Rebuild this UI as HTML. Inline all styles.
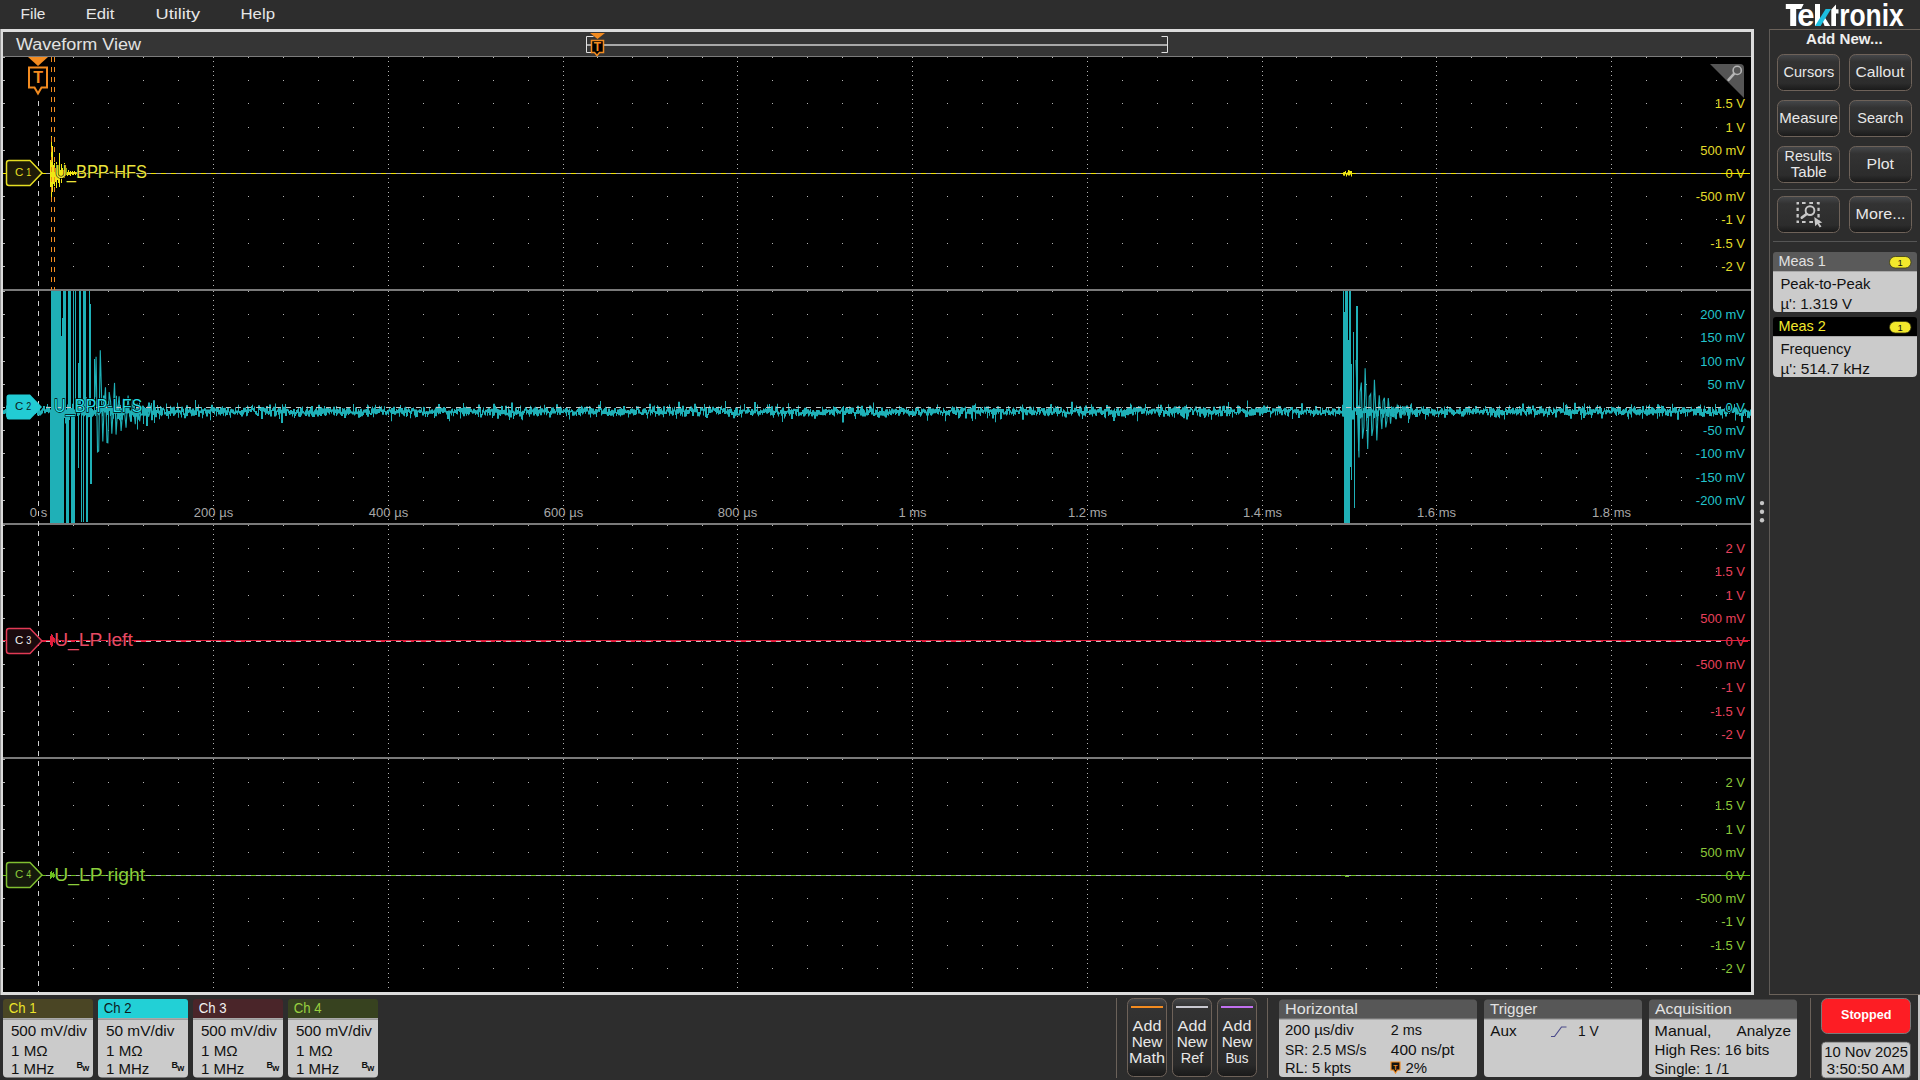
<!DOCTYPE html>
<html><head><meta charset="utf-8"><title>Tektronix Waveform View</title>
<style>html,body{margin:0;padding:0;background:#2d2d2d;overflow:hidden;width:1920px;height:1080px}
svg{display:block;font-family:"Liberation Sans",sans-serif}</style></head>
<body><svg width="1920" height="1080" viewBox="0 0 1920 1080" shape-rendering="auto"><rect x="0" y="0" width="1920" height="1080" fill="#2d2d2d"/><text x="20.5" y="19.3" font-size="15" fill="#e6e6e6" textLength="25.0" lengthAdjust="spacingAndGlyphs">File</text><text x="85.7" y="19.3" font-size="15" fill="#e6e6e6" textLength="28.8" lengthAdjust="spacingAndGlyphs">Edit</text><text x="155.5" y="19.3" font-size="15" fill="#e6e6e6" textLength="44.5" lengthAdjust="spacingAndGlyphs">Utility</text><text x="240.5" y="19.3" font-size="15" fill="#e6e6e6" textLength="34.5" lengthAdjust="spacingAndGlyphs">Help</text><rect x="0" y="29" width="1754" height="966" fill="#dcdcdc"/><rect x="0" y="29" width="1" height="966" fill="#9a9a9a"/><rect x="3" y="32" width="1748" height="25" fill="#353535"/><rect x="3" y="56" width="1748" height="1" fill="#7c7c7c"/><rect x="3" y="57" width="1748" height="935" fill="#000000"/><text x="16" y="50" font-size="16" fill="#e2e2e2" textLength="125" lengthAdjust="spacingAndGlyphs">Waveform View</text><path d="M593.5 36.5h-7v16h7M1161.5 36.5h6v16h-6" fill="none" stroke="#e0e0e0" stroke-width="1"/><rect x="587" y="44" width="580" height="2" fill="#a9a9a9"/><path d="M590 33h15l-7.5 6z" fill="#f28b20"/><path d="M591.5 40.5h12v12h-4l-2.5 3l-2.5-3h-3z" fill="#000" stroke="#f28b20" stroke-width="1.5"/><text x="597.5" y="50.5" font-size="12" fill="#f28b20" text-anchor="middle" font-weight="bold">T</text><path d="M3 57h1v1h-1zM73 57h1v1h-1zM108 57h1v1h-1zM143 57h1v1h-1zM178 57h1v1h-1zM248 57h1v1h-1zM283 57h1v1h-1zM318 57h1v1h-1zM353 57h1v1h-1zM423 57h1v1h-1zM458 57h1v1h-1zM493 57h1v1h-1zM528 57h1v1h-1zM597 57h1v1h-1zM632 57h1v1h-1zM667 57h1v1h-1zM702 57h1v1h-1zM772 57h1v1h-1zM807 57h1v1h-1zM842 57h1v1h-1zM877 57h1v1h-1zM947 57h1v1h-1zM982 57h1v1h-1zM1017 57h1v1h-1zM1052 57h1v1h-1zM1122 57h1v1h-1zM1157 57h1v1h-1zM1192 57h1v1h-1zM1227 57h1v1h-1zM1296 57h1v1h-1zM1331 57h1v1h-1zM1366 57h1v1h-1zM1401 57h1v1h-1zM1471 57h1v1h-1zM1506 57h1v1h-1zM1541 57h1v1h-1zM1576 57h1v1h-1zM1646 57h1v1h-1zM1681 57h1v1h-1zM1716 57h1v1h-1zM3 57h2v1h-2zM3 80h1v1h-1zM73 80h1v1h-1zM108 80h1v1h-1zM143 80h1v1h-1zM178 80h1v1h-1zM248 80h1v1h-1zM283 80h1v1h-1zM318 80h1v1h-1zM353 80h1v1h-1zM423 80h1v1h-1zM458 80h1v1h-1zM493 80h1v1h-1zM528 80h1v1h-1zM597 80h1v1h-1zM632 80h1v1h-1zM667 80h1v1h-1zM702 80h1v1h-1zM772 80h1v1h-1zM807 80h1v1h-1zM842 80h1v1h-1zM877 80h1v1h-1zM947 80h1v1h-1zM982 80h1v1h-1zM1017 80h1v1h-1zM1052 80h1v1h-1zM1122 80h1v1h-1zM1157 80h1v1h-1zM1192 80h1v1h-1zM1227 80h1v1h-1zM1296 80h1v1h-1zM1331 80h1v1h-1zM1366 80h1v1h-1zM1401 80h1v1h-1zM1471 80h1v1h-1zM1506 80h1v1h-1zM1541 80h1v1h-1zM1576 80h1v1h-1zM1646 80h1v1h-1zM1681 80h1v1h-1zM1716 80h1v1h-1zM3 80h2v1h-2zM3 103h1v1h-1zM73 103h1v1h-1zM108 103h1v1h-1zM143 103h1v1h-1zM178 103h1v1h-1zM248 103h1v1h-1zM283 103h1v1h-1zM318 103h1v1h-1zM353 103h1v1h-1zM423 103h1v1h-1zM458 103h1v1h-1zM493 103h1v1h-1zM528 103h1v1h-1zM597 103h1v1h-1zM632 103h1v1h-1zM667 103h1v1h-1zM702 103h1v1h-1zM772 103h1v1h-1zM807 103h1v1h-1zM842 103h1v1h-1zM877 103h1v1h-1zM947 103h1v1h-1zM982 103h1v1h-1zM1017 103h1v1h-1zM1052 103h1v1h-1zM1122 103h1v1h-1zM1157 103h1v1h-1zM1192 103h1v1h-1zM1227 103h1v1h-1zM1296 103h1v1h-1zM1331 103h1v1h-1zM1366 103h1v1h-1zM1401 103h1v1h-1zM1471 103h1v1h-1zM1506 103h1v1h-1zM1541 103h1v1h-1zM1576 103h1v1h-1zM1646 103h1v1h-1zM1681 103h1v1h-1zM1716 103h1v1h-1zM3 103h2v1h-2zM3 127h1v1h-1zM73 127h1v1h-1zM108 127h1v1h-1zM143 127h1v1h-1zM178 127h1v1h-1zM248 127h1v1h-1zM283 127h1v1h-1zM318 127h1v1h-1zM353 127h1v1h-1zM423 127h1v1h-1zM458 127h1v1h-1zM493 127h1v1h-1zM528 127h1v1h-1zM597 127h1v1h-1zM632 127h1v1h-1zM667 127h1v1h-1zM702 127h1v1h-1zM772 127h1v1h-1zM807 127h1v1h-1zM842 127h1v1h-1zM877 127h1v1h-1zM947 127h1v1h-1zM982 127h1v1h-1zM1017 127h1v1h-1zM1052 127h1v1h-1zM1122 127h1v1h-1zM1157 127h1v1h-1zM1192 127h1v1h-1zM1227 127h1v1h-1zM1296 127h1v1h-1zM1331 127h1v1h-1zM1366 127h1v1h-1zM1401 127h1v1h-1zM1471 127h1v1h-1zM1506 127h1v1h-1zM1541 127h1v1h-1zM1576 127h1v1h-1zM1646 127h1v1h-1zM1681 127h1v1h-1zM1716 127h1v1h-1zM3 127h2v1h-2zM3 150h1v1h-1zM73 150h1v1h-1zM108 150h1v1h-1zM143 150h1v1h-1zM178 150h1v1h-1zM248 150h1v1h-1zM283 150h1v1h-1zM318 150h1v1h-1zM353 150h1v1h-1zM423 150h1v1h-1zM458 150h1v1h-1zM493 150h1v1h-1zM528 150h1v1h-1zM597 150h1v1h-1zM632 150h1v1h-1zM667 150h1v1h-1zM702 150h1v1h-1zM772 150h1v1h-1zM807 150h1v1h-1zM842 150h1v1h-1zM877 150h1v1h-1zM947 150h1v1h-1zM982 150h1v1h-1zM1017 150h1v1h-1zM1052 150h1v1h-1zM1122 150h1v1h-1zM1157 150h1v1h-1zM1192 150h1v1h-1zM1227 150h1v1h-1zM1296 150h1v1h-1zM1331 150h1v1h-1zM1366 150h1v1h-1zM1401 150h1v1h-1zM1471 150h1v1h-1zM1506 150h1v1h-1zM1541 150h1v1h-1zM1576 150h1v1h-1zM1646 150h1v1h-1zM1681 150h1v1h-1zM1716 150h1v1h-1zM3 150h2v1h-2zM3 173h1v1h-1zM73 173h1v1h-1zM108 173h1v1h-1zM143 173h1v1h-1zM178 173h1v1h-1zM248 173h1v1h-1zM283 173h1v1h-1zM318 173h1v1h-1zM353 173h1v1h-1zM423 173h1v1h-1zM458 173h1v1h-1zM493 173h1v1h-1zM528 173h1v1h-1zM597 173h1v1h-1zM632 173h1v1h-1zM667 173h1v1h-1zM702 173h1v1h-1zM772 173h1v1h-1zM807 173h1v1h-1zM842 173h1v1h-1zM877 173h1v1h-1zM947 173h1v1h-1zM982 173h1v1h-1zM1017 173h1v1h-1zM1052 173h1v1h-1zM1122 173h1v1h-1zM1157 173h1v1h-1zM1192 173h1v1h-1zM1227 173h1v1h-1zM1296 173h1v1h-1zM1331 173h1v1h-1zM1366 173h1v1h-1zM1401 173h1v1h-1zM1471 173h1v1h-1zM1506 173h1v1h-1zM1541 173h1v1h-1zM1576 173h1v1h-1zM1646 173h1v1h-1zM1681 173h1v1h-1zM1716 173h1v1h-1zM3 173h2v1h-2zM3 196h1v1h-1zM73 196h1v1h-1zM108 196h1v1h-1zM143 196h1v1h-1zM178 196h1v1h-1zM248 196h1v1h-1zM283 196h1v1h-1zM318 196h1v1h-1zM353 196h1v1h-1zM423 196h1v1h-1zM458 196h1v1h-1zM493 196h1v1h-1zM528 196h1v1h-1zM597 196h1v1h-1zM632 196h1v1h-1zM667 196h1v1h-1zM702 196h1v1h-1zM772 196h1v1h-1zM807 196h1v1h-1zM842 196h1v1h-1zM877 196h1v1h-1zM947 196h1v1h-1zM982 196h1v1h-1zM1017 196h1v1h-1zM1052 196h1v1h-1zM1122 196h1v1h-1zM1157 196h1v1h-1zM1192 196h1v1h-1zM1227 196h1v1h-1zM1296 196h1v1h-1zM1331 196h1v1h-1zM1366 196h1v1h-1zM1401 196h1v1h-1zM1471 196h1v1h-1zM1506 196h1v1h-1zM1541 196h1v1h-1zM1576 196h1v1h-1zM1646 196h1v1h-1zM1681 196h1v1h-1zM1716 196h1v1h-1zM3 196h2v1h-2zM3 219h1v1h-1zM73 219h1v1h-1zM108 219h1v1h-1zM143 219h1v1h-1zM178 219h1v1h-1zM248 219h1v1h-1zM283 219h1v1h-1zM318 219h1v1h-1zM353 219h1v1h-1zM423 219h1v1h-1zM458 219h1v1h-1zM493 219h1v1h-1zM528 219h1v1h-1zM597 219h1v1h-1zM632 219h1v1h-1zM667 219h1v1h-1zM702 219h1v1h-1zM772 219h1v1h-1zM807 219h1v1h-1zM842 219h1v1h-1zM877 219h1v1h-1zM947 219h1v1h-1zM982 219h1v1h-1zM1017 219h1v1h-1zM1052 219h1v1h-1zM1122 219h1v1h-1zM1157 219h1v1h-1zM1192 219h1v1h-1zM1227 219h1v1h-1zM1296 219h1v1h-1zM1331 219h1v1h-1zM1366 219h1v1h-1zM1401 219h1v1h-1zM1471 219h1v1h-1zM1506 219h1v1h-1zM1541 219h1v1h-1zM1576 219h1v1h-1zM1646 219h1v1h-1zM1681 219h1v1h-1zM1716 219h1v1h-1zM3 219h2v1h-2zM3 243h1v1h-1zM73 243h1v1h-1zM108 243h1v1h-1zM143 243h1v1h-1zM178 243h1v1h-1zM248 243h1v1h-1zM283 243h1v1h-1zM318 243h1v1h-1zM353 243h1v1h-1zM423 243h1v1h-1zM458 243h1v1h-1zM493 243h1v1h-1zM528 243h1v1h-1zM597 243h1v1h-1zM632 243h1v1h-1zM667 243h1v1h-1zM702 243h1v1h-1zM772 243h1v1h-1zM807 243h1v1h-1zM842 243h1v1h-1zM877 243h1v1h-1zM947 243h1v1h-1zM982 243h1v1h-1zM1017 243h1v1h-1zM1052 243h1v1h-1zM1122 243h1v1h-1zM1157 243h1v1h-1zM1192 243h1v1h-1zM1227 243h1v1h-1zM1296 243h1v1h-1zM1331 243h1v1h-1zM1366 243h1v1h-1zM1401 243h1v1h-1zM1471 243h1v1h-1zM1506 243h1v1h-1zM1541 243h1v1h-1zM1576 243h1v1h-1zM1646 243h1v1h-1zM1681 243h1v1h-1zM1716 243h1v1h-1zM3 243h2v1h-2zM3 266h1v1h-1zM73 266h1v1h-1zM108 266h1v1h-1zM143 266h1v1h-1zM178 266h1v1h-1zM248 266h1v1h-1zM283 266h1v1h-1zM318 266h1v1h-1zM353 266h1v1h-1zM423 266h1v1h-1zM458 266h1v1h-1zM493 266h1v1h-1zM528 266h1v1h-1zM597 266h1v1h-1zM632 266h1v1h-1zM667 266h1v1h-1zM702 266h1v1h-1zM772 266h1v1h-1zM807 266h1v1h-1zM842 266h1v1h-1zM877 266h1v1h-1zM947 266h1v1h-1zM982 266h1v1h-1zM1017 266h1v1h-1zM1052 266h1v1h-1zM1122 266h1v1h-1zM1157 266h1v1h-1zM1192 266h1v1h-1zM1227 266h1v1h-1zM1296 266h1v1h-1zM1331 266h1v1h-1zM1366 266h1v1h-1zM1401 266h1v1h-1zM1471 266h1v1h-1zM1506 266h1v1h-1zM1541 266h1v1h-1zM1576 266h1v1h-1zM1646 266h1v1h-1zM1681 266h1v1h-1zM1716 266h1v1h-1zM3 266h2v1h-2zM213 57h1v1h-1zM213 61h1v1h-1zM213 66h1v1h-1zM213 71h1v1h-1zM213 75h1v1h-1zM213 80h1v1h-1zM213 85h1v1h-1zM213 89h1v1h-1zM213 94h1v1h-1zM213 99h1v1h-1zM213 103h1v1h-1zM213 108h1v1h-1zM213 112h1v1h-1zM213 117h1v1h-1zM213 122h1v1h-1zM213 126h1v1h-1zM213 131h1v1h-1zM213 136h1v1h-1zM213 140h1v1h-1zM213 145h1v1h-1zM213 150h1v1h-1zM213 154h1v1h-1zM213 159h1v1h-1zM213 164h1v1h-1zM213 168h1v1h-1zM213 173h1v1h-1zM213 178h1v1h-1zM213 182h1v1h-1zM213 187h1v1h-1zM213 192h1v1h-1zM213 196h1v1h-1zM213 201h1v1h-1zM213 205h1v1h-1zM213 210h1v1h-1zM213 215h1v1h-1zM213 219h1v1h-1zM213 224h1v1h-1zM213 229h1v1h-1zM213 233h1v1h-1zM213 238h1v1h-1zM213 243h1v1h-1zM213 247h1v1h-1zM213 252h1v1h-1zM213 257h1v1h-1zM213 261h1v1h-1zM213 266h1v1h-1zM213 271h1v1h-1zM213 275h1v1h-1zM213 280h1v1h-1zM213 285h1v1h-1zM388 57h1v1h-1zM388 61h1v1h-1zM388 66h1v1h-1zM388 71h1v1h-1zM388 75h1v1h-1zM388 80h1v1h-1zM388 85h1v1h-1zM388 89h1v1h-1zM388 94h1v1h-1zM388 99h1v1h-1zM388 103h1v1h-1zM388 108h1v1h-1zM388 112h1v1h-1zM388 117h1v1h-1zM388 122h1v1h-1zM388 126h1v1h-1zM388 131h1v1h-1zM388 136h1v1h-1zM388 140h1v1h-1zM388 145h1v1h-1zM388 150h1v1h-1zM388 154h1v1h-1zM388 159h1v1h-1zM388 164h1v1h-1zM388 168h1v1h-1zM388 173h1v1h-1zM388 178h1v1h-1zM388 182h1v1h-1zM388 187h1v1h-1zM388 192h1v1h-1zM388 196h1v1h-1zM388 201h1v1h-1zM388 205h1v1h-1zM388 210h1v1h-1zM388 215h1v1h-1zM388 219h1v1h-1zM388 224h1v1h-1zM388 229h1v1h-1zM388 233h1v1h-1zM388 238h1v1h-1zM388 243h1v1h-1zM388 247h1v1h-1zM388 252h1v1h-1zM388 257h1v1h-1zM388 261h1v1h-1zM388 266h1v1h-1zM388 271h1v1h-1zM388 275h1v1h-1zM388 280h1v1h-1zM388 285h1v1h-1zM563 57h1v1h-1zM563 61h1v1h-1zM563 66h1v1h-1zM563 71h1v1h-1zM563 75h1v1h-1zM563 80h1v1h-1zM563 85h1v1h-1zM563 89h1v1h-1zM563 94h1v1h-1zM563 99h1v1h-1zM563 103h1v1h-1zM563 108h1v1h-1zM563 112h1v1h-1zM563 117h1v1h-1zM563 122h1v1h-1zM563 126h1v1h-1zM563 131h1v1h-1zM563 136h1v1h-1zM563 140h1v1h-1zM563 145h1v1h-1zM563 150h1v1h-1zM563 154h1v1h-1zM563 159h1v1h-1zM563 164h1v1h-1zM563 168h1v1h-1zM563 173h1v1h-1zM563 178h1v1h-1zM563 182h1v1h-1zM563 187h1v1h-1zM563 192h1v1h-1zM563 196h1v1h-1zM563 201h1v1h-1zM563 205h1v1h-1zM563 210h1v1h-1zM563 215h1v1h-1zM563 219h1v1h-1zM563 224h1v1h-1zM563 229h1v1h-1zM563 233h1v1h-1zM563 238h1v1h-1zM563 243h1v1h-1zM563 247h1v1h-1zM563 252h1v1h-1zM563 257h1v1h-1zM563 261h1v1h-1zM563 266h1v1h-1zM563 271h1v1h-1zM563 275h1v1h-1zM563 280h1v1h-1zM563 285h1v1h-1zM737 57h1v1h-1zM737 61h1v1h-1zM737 66h1v1h-1zM737 71h1v1h-1zM737 75h1v1h-1zM737 80h1v1h-1zM737 85h1v1h-1zM737 89h1v1h-1zM737 94h1v1h-1zM737 99h1v1h-1zM737 103h1v1h-1zM737 108h1v1h-1zM737 112h1v1h-1zM737 117h1v1h-1zM737 122h1v1h-1zM737 126h1v1h-1zM737 131h1v1h-1zM737 136h1v1h-1zM737 140h1v1h-1zM737 145h1v1h-1zM737 150h1v1h-1zM737 154h1v1h-1zM737 159h1v1h-1zM737 164h1v1h-1zM737 168h1v1h-1zM737 173h1v1h-1zM737 178h1v1h-1zM737 182h1v1h-1zM737 187h1v1h-1zM737 192h1v1h-1zM737 196h1v1h-1zM737 201h1v1h-1zM737 205h1v1h-1zM737 210h1v1h-1zM737 215h1v1h-1zM737 219h1v1h-1zM737 224h1v1h-1zM737 229h1v1h-1zM737 233h1v1h-1zM737 238h1v1h-1zM737 243h1v1h-1zM737 247h1v1h-1zM737 252h1v1h-1zM737 257h1v1h-1zM737 261h1v1h-1zM737 266h1v1h-1zM737 271h1v1h-1zM737 275h1v1h-1zM737 280h1v1h-1zM737 285h1v1h-1zM912 57h1v1h-1zM912 61h1v1h-1zM912 66h1v1h-1zM912 71h1v1h-1zM912 75h1v1h-1zM912 80h1v1h-1zM912 85h1v1h-1zM912 89h1v1h-1zM912 94h1v1h-1zM912 99h1v1h-1zM912 103h1v1h-1zM912 108h1v1h-1zM912 112h1v1h-1zM912 117h1v1h-1zM912 122h1v1h-1zM912 126h1v1h-1zM912 131h1v1h-1zM912 136h1v1h-1zM912 140h1v1h-1zM912 145h1v1h-1zM912 150h1v1h-1zM912 154h1v1h-1zM912 159h1v1h-1zM912 164h1v1h-1zM912 168h1v1h-1zM912 173h1v1h-1zM912 178h1v1h-1zM912 182h1v1h-1zM912 187h1v1h-1zM912 192h1v1h-1zM912 196h1v1h-1zM912 201h1v1h-1zM912 205h1v1h-1zM912 210h1v1h-1zM912 215h1v1h-1zM912 219h1v1h-1zM912 224h1v1h-1zM912 229h1v1h-1zM912 233h1v1h-1zM912 238h1v1h-1zM912 243h1v1h-1zM912 247h1v1h-1zM912 252h1v1h-1zM912 257h1v1h-1zM912 261h1v1h-1zM912 266h1v1h-1zM912 271h1v1h-1zM912 275h1v1h-1zM912 280h1v1h-1zM912 285h1v1h-1zM1087 57h1v1h-1zM1087 61h1v1h-1zM1087 66h1v1h-1zM1087 71h1v1h-1zM1087 75h1v1h-1zM1087 80h1v1h-1zM1087 85h1v1h-1zM1087 89h1v1h-1zM1087 94h1v1h-1zM1087 99h1v1h-1zM1087 103h1v1h-1zM1087 108h1v1h-1zM1087 112h1v1h-1zM1087 117h1v1h-1zM1087 122h1v1h-1zM1087 126h1v1h-1zM1087 131h1v1h-1zM1087 136h1v1h-1zM1087 140h1v1h-1zM1087 145h1v1h-1zM1087 150h1v1h-1zM1087 154h1v1h-1zM1087 159h1v1h-1zM1087 164h1v1h-1zM1087 168h1v1h-1zM1087 173h1v1h-1zM1087 178h1v1h-1zM1087 182h1v1h-1zM1087 187h1v1h-1zM1087 192h1v1h-1zM1087 196h1v1h-1zM1087 201h1v1h-1zM1087 205h1v1h-1zM1087 210h1v1h-1zM1087 215h1v1h-1zM1087 219h1v1h-1zM1087 224h1v1h-1zM1087 229h1v1h-1zM1087 233h1v1h-1zM1087 238h1v1h-1zM1087 243h1v1h-1zM1087 247h1v1h-1zM1087 252h1v1h-1zM1087 257h1v1h-1zM1087 261h1v1h-1zM1087 266h1v1h-1zM1087 271h1v1h-1zM1087 275h1v1h-1zM1087 280h1v1h-1zM1087 285h1v1h-1zM1262 57h1v1h-1zM1262 61h1v1h-1zM1262 66h1v1h-1zM1262 71h1v1h-1zM1262 75h1v1h-1zM1262 80h1v1h-1zM1262 85h1v1h-1zM1262 89h1v1h-1zM1262 94h1v1h-1zM1262 99h1v1h-1zM1262 103h1v1h-1zM1262 108h1v1h-1zM1262 112h1v1h-1zM1262 117h1v1h-1zM1262 122h1v1h-1zM1262 126h1v1h-1zM1262 131h1v1h-1zM1262 136h1v1h-1zM1262 140h1v1h-1zM1262 145h1v1h-1zM1262 150h1v1h-1zM1262 154h1v1h-1zM1262 159h1v1h-1zM1262 164h1v1h-1zM1262 168h1v1h-1zM1262 173h1v1h-1zM1262 178h1v1h-1zM1262 182h1v1h-1zM1262 187h1v1h-1zM1262 192h1v1h-1zM1262 196h1v1h-1zM1262 201h1v1h-1zM1262 205h1v1h-1zM1262 210h1v1h-1zM1262 215h1v1h-1zM1262 219h1v1h-1zM1262 224h1v1h-1zM1262 229h1v1h-1zM1262 233h1v1h-1zM1262 238h1v1h-1zM1262 243h1v1h-1zM1262 247h1v1h-1zM1262 252h1v1h-1zM1262 257h1v1h-1zM1262 261h1v1h-1zM1262 266h1v1h-1zM1262 271h1v1h-1zM1262 275h1v1h-1zM1262 280h1v1h-1zM1262 285h1v1h-1zM1436 57h1v1h-1zM1436 61h1v1h-1zM1436 66h1v1h-1zM1436 71h1v1h-1zM1436 75h1v1h-1zM1436 80h1v1h-1zM1436 85h1v1h-1zM1436 89h1v1h-1zM1436 94h1v1h-1zM1436 99h1v1h-1zM1436 103h1v1h-1zM1436 108h1v1h-1zM1436 112h1v1h-1zM1436 117h1v1h-1zM1436 122h1v1h-1zM1436 126h1v1h-1zM1436 131h1v1h-1zM1436 136h1v1h-1zM1436 140h1v1h-1zM1436 145h1v1h-1zM1436 150h1v1h-1zM1436 154h1v1h-1zM1436 159h1v1h-1zM1436 164h1v1h-1zM1436 168h1v1h-1zM1436 173h1v1h-1zM1436 178h1v1h-1zM1436 182h1v1h-1zM1436 187h1v1h-1zM1436 192h1v1h-1zM1436 196h1v1h-1zM1436 201h1v1h-1zM1436 205h1v1h-1zM1436 210h1v1h-1zM1436 215h1v1h-1zM1436 219h1v1h-1zM1436 224h1v1h-1zM1436 229h1v1h-1zM1436 233h1v1h-1zM1436 238h1v1h-1zM1436 243h1v1h-1zM1436 247h1v1h-1zM1436 252h1v1h-1zM1436 257h1v1h-1zM1436 261h1v1h-1zM1436 266h1v1h-1zM1436 271h1v1h-1zM1436 275h1v1h-1zM1436 280h1v1h-1zM1436 285h1v1h-1zM1611 57h1v1h-1zM1611 61h1v1h-1zM1611 66h1v1h-1zM1611 71h1v1h-1zM1611 75h1v1h-1zM1611 80h1v1h-1zM1611 85h1v1h-1zM1611 89h1v1h-1zM1611 94h1v1h-1zM1611 99h1v1h-1zM1611 103h1v1h-1zM1611 108h1v1h-1zM1611 112h1v1h-1zM1611 117h1v1h-1zM1611 122h1v1h-1zM1611 126h1v1h-1zM1611 131h1v1h-1zM1611 136h1v1h-1zM1611 140h1v1h-1zM1611 145h1v1h-1zM1611 150h1v1h-1zM1611 154h1v1h-1zM1611 159h1v1h-1zM1611 164h1v1h-1zM1611 168h1v1h-1zM1611 173h1v1h-1zM1611 178h1v1h-1zM1611 182h1v1h-1zM1611 187h1v1h-1zM1611 192h1v1h-1zM1611 196h1v1h-1zM1611 201h1v1h-1zM1611 205h1v1h-1zM1611 210h1v1h-1zM1611 215h1v1h-1zM1611 219h1v1h-1zM1611 224h1v1h-1zM1611 229h1v1h-1zM1611 233h1v1h-1zM1611 238h1v1h-1zM1611 243h1v1h-1zM1611 247h1v1h-1zM1611 252h1v1h-1zM1611 257h1v1h-1zM1611 261h1v1h-1zM1611 266h1v1h-1zM1611 271h1v1h-1zM1611 275h1v1h-1zM1611 280h1v1h-1zM1611 285h1v1h-1zM3 291h1v1h-1zM73 291h1v1h-1zM108 291h1v1h-1zM143 291h1v1h-1zM178 291h1v1h-1zM248 291h1v1h-1zM283 291h1v1h-1zM318 291h1v1h-1zM353 291h1v1h-1zM423 291h1v1h-1zM458 291h1v1h-1zM493 291h1v1h-1zM528 291h1v1h-1zM597 291h1v1h-1zM632 291h1v1h-1zM667 291h1v1h-1zM702 291h1v1h-1zM772 291h1v1h-1zM807 291h1v1h-1zM842 291h1v1h-1zM877 291h1v1h-1zM947 291h1v1h-1zM982 291h1v1h-1zM1017 291h1v1h-1zM1052 291h1v1h-1zM1122 291h1v1h-1zM1157 291h1v1h-1zM1192 291h1v1h-1zM1227 291h1v1h-1zM1296 291h1v1h-1zM1331 291h1v1h-1zM1366 291h1v1h-1zM1401 291h1v1h-1zM1471 291h1v1h-1zM1506 291h1v1h-1zM1541 291h1v1h-1zM1576 291h1v1h-1zM1646 291h1v1h-1zM1681 291h1v1h-1zM1716 291h1v1h-1zM3 291h2v1h-2zM3 314h1v1h-1zM73 314h1v1h-1zM108 314h1v1h-1zM143 314h1v1h-1zM178 314h1v1h-1zM248 314h1v1h-1zM283 314h1v1h-1zM318 314h1v1h-1zM353 314h1v1h-1zM423 314h1v1h-1zM458 314h1v1h-1zM493 314h1v1h-1zM528 314h1v1h-1zM597 314h1v1h-1zM632 314h1v1h-1zM667 314h1v1h-1zM702 314h1v1h-1zM772 314h1v1h-1zM807 314h1v1h-1zM842 314h1v1h-1zM877 314h1v1h-1zM947 314h1v1h-1zM982 314h1v1h-1zM1017 314h1v1h-1zM1052 314h1v1h-1zM1122 314h1v1h-1zM1157 314h1v1h-1zM1192 314h1v1h-1zM1227 314h1v1h-1zM1296 314h1v1h-1zM1331 314h1v1h-1zM1366 314h1v1h-1zM1401 314h1v1h-1zM1471 314h1v1h-1zM1506 314h1v1h-1zM1541 314h1v1h-1zM1576 314h1v1h-1zM1646 314h1v1h-1zM1681 314h1v1h-1zM1716 314h1v1h-1zM3 314h2v1h-2zM3 337h1v1h-1zM73 337h1v1h-1zM108 337h1v1h-1zM143 337h1v1h-1zM178 337h1v1h-1zM248 337h1v1h-1zM283 337h1v1h-1zM318 337h1v1h-1zM353 337h1v1h-1zM423 337h1v1h-1zM458 337h1v1h-1zM493 337h1v1h-1zM528 337h1v1h-1zM597 337h1v1h-1zM632 337h1v1h-1zM667 337h1v1h-1zM702 337h1v1h-1zM772 337h1v1h-1zM807 337h1v1h-1zM842 337h1v1h-1zM877 337h1v1h-1zM947 337h1v1h-1zM982 337h1v1h-1zM1017 337h1v1h-1zM1052 337h1v1h-1zM1122 337h1v1h-1zM1157 337h1v1h-1zM1192 337h1v1h-1zM1227 337h1v1h-1zM1296 337h1v1h-1zM1331 337h1v1h-1zM1366 337h1v1h-1zM1401 337h1v1h-1zM1471 337h1v1h-1zM1506 337h1v1h-1zM1541 337h1v1h-1zM1576 337h1v1h-1zM1646 337h1v1h-1zM1681 337h1v1h-1zM1716 337h1v1h-1zM3 337h2v1h-2zM3 361h1v1h-1zM73 361h1v1h-1zM108 361h1v1h-1zM143 361h1v1h-1zM178 361h1v1h-1zM248 361h1v1h-1zM283 361h1v1h-1zM318 361h1v1h-1zM353 361h1v1h-1zM423 361h1v1h-1zM458 361h1v1h-1zM493 361h1v1h-1zM528 361h1v1h-1zM597 361h1v1h-1zM632 361h1v1h-1zM667 361h1v1h-1zM702 361h1v1h-1zM772 361h1v1h-1zM807 361h1v1h-1zM842 361h1v1h-1zM877 361h1v1h-1zM947 361h1v1h-1zM982 361h1v1h-1zM1017 361h1v1h-1zM1052 361h1v1h-1zM1122 361h1v1h-1zM1157 361h1v1h-1zM1192 361h1v1h-1zM1227 361h1v1h-1zM1296 361h1v1h-1zM1331 361h1v1h-1zM1366 361h1v1h-1zM1401 361h1v1h-1zM1471 361h1v1h-1zM1506 361h1v1h-1zM1541 361h1v1h-1zM1576 361h1v1h-1zM1646 361h1v1h-1zM1681 361h1v1h-1zM1716 361h1v1h-1zM3 361h2v1h-2zM3 384h1v1h-1zM73 384h1v1h-1zM108 384h1v1h-1zM143 384h1v1h-1zM178 384h1v1h-1zM248 384h1v1h-1zM283 384h1v1h-1zM318 384h1v1h-1zM353 384h1v1h-1zM423 384h1v1h-1zM458 384h1v1h-1zM493 384h1v1h-1zM528 384h1v1h-1zM597 384h1v1h-1zM632 384h1v1h-1zM667 384h1v1h-1zM702 384h1v1h-1zM772 384h1v1h-1zM807 384h1v1h-1zM842 384h1v1h-1zM877 384h1v1h-1zM947 384h1v1h-1zM982 384h1v1h-1zM1017 384h1v1h-1zM1052 384h1v1h-1zM1122 384h1v1h-1zM1157 384h1v1h-1zM1192 384h1v1h-1zM1227 384h1v1h-1zM1296 384h1v1h-1zM1331 384h1v1h-1zM1366 384h1v1h-1zM1401 384h1v1h-1zM1471 384h1v1h-1zM1506 384h1v1h-1zM1541 384h1v1h-1zM1576 384h1v1h-1zM1646 384h1v1h-1zM1681 384h1v1h-1zM1716 384h1v1h-1zM3 384h2v1h-2zM3 407h1v1h-1zM73 407h1v1h-1zM108 407h1v1h-1zM143 407h1v1h-1zM178 407h1v1h-1zM248 407h1v1h-1zM283 407h1v1h-1zM318 407h1v1h-1zM353 407h1v1h-1zM423 407h1v1h-1zM458 407h1v1h-1zM493 407h1v1h-1zM528 407h1v1h-1zM597 407h1v1h-1zM632 407h1v1h-1zM667 407h1v1h-1zM702 407h1v1h-1zM772 407h1v1h-1zM807 407h1v1h-1zM842 407h1v1h-1zM877 407h1v1h-1zM947 407h1v1h-1zM982 407h1v1h-1zM1017 407h1v1h-1zM1052 407h1v1h-1zM1122 407h1v1h-1zM1157 407h1v1h-1zM1192 407h1v1h-1zM1227 407h1v1h-1zM1296 407h1v1h-1zM1331 407h1v1h-1zM1366 407h1v1h-1zM1401 407h1v1h-1zM1471 407h1v1h-1zM1506 407h1v1h-1zM1541 407h1v1h-1zM1576 407h1v1h-1zM1646 407h1v1h-1zM1681 407h1v1h-1zM1716 407h1v1h-1zM3 407h2v1h-2zM3 430h1v1h-1zM73 430h1v1h-1zM108 430h1v1h-1zM143 430h1v1h-1zM178 430h1v1h-1zM248 430h1v1h-1zM283 430h1v1h-1zM318 430h1v1h-1zM353 430h1v1h-1zM423 430h1v1h-1zM458 430h1v1h-1zM493 430h1v1h-1zM528 430h1v1h-1zM597 430h1v1h-1zM632 430h1v1h-1zM667 430h1v1h-1zM702 430h1v1h-1zM772 430h1v1h-1zM807 430h1v1h-1zM842 430h1v1h-1zM877 430h1v1h-1zM947 430h1v1h-1zM982 430h1v1h-1zM1017 430h1v1h-1zM1052 430h1v1h-1zM1122 430h1v1h-1zM1157 430h1v1h-1zM1192 430h1v1h-1zM1227 430h1v1h-1zM1296 430h1v1h-1zM1331 430h1v1h-1zM1366 430h1v1h-1zM1401 430h1v1h-1zM1471 430h1v1h-1zM1506 430h1v1h-1zM1541 430h1v1h-1zM1576 430h1v1h-1zM1646 430h1v1h-1zM1681 430h1v1h-1zM1716 430h1v1h-1zM3 430h2v1h-2zM3 453h1v1h-1zM73 453h1v1h-1zM108 453h1v1h-1zM143 453h1v1h-1zM178 453h1v1h-1zM248 453h1v1h-1zM283 453h1v1h-1zM318 453h1v1h-1zM353 453h1v1h-1zM423 453h1v1h-1zM458 453h1v1h-1zM493 453h1v1h-1zM528 453h1v1h-1zM597 453h1v1h-1zM632 453h1v1h-1zM667 453h1v1h-1zM702 453h1v1h-1zM772 453h1v1h-1zM807 453h1v1h-1zM842 453h1v1h-1zM877 453h1v1h-1zM947 453h1v1h-1zM982 453h1v1h-1zM1017 453h1v1h-1zM1052 453h1v1h-1zM1122 453h1v1h-1zM1157 453h1v1h-1zM1192 453h1v1h-1zM1227 453h1v1h-1zM1296 453h1v1h-1zM1331 453h1v1h-1zM1366 453h1v1h-1zM1401 453h1v1h-1zM1471 453h1v1h-1zM1506 453h1v1h-1zM1541 453h1v1h-1zM1576 453h1v1h-1zM1646 453h1v1h-1zM1681 453h1v1h-1zM1716 453h1v1h-1zM3 453h2v1h-2zM3 477h1v1h-1zM73 477h1v1h-1zM108 477h1v1h-1zM143 477h1v1h-1zM178 477h1v1h-1zM248 477h1v1h-1zM283 477h1v1h-1zM318 477h1v1h-1zM353 477h1v1h-1zM423 477h1v1h-1zM458 477h1v1h-1zM493 477h1v1h-1zM528 477h1v1h-1zM597 477h1v1h-1zM632 477h1v1h-1zM667 477h1v1h-1zM702 477h1v1h-1zM772 477h1v1h-1zM807 477h1v1h-1zM842 477h1v1h-1zM877 477h1v1h-1zM947 477h1v1h-1zM982 477h1v1h-1zM1017 477h1v1h-1zM1052 477h1v1h-1zM1122 477h1v1h-1zM1157 477h1v1h-1zM1192 477h1v1h-1zM1227 477h1v1h-1zM1296 477h1v1h-1zM1331 477h1v1h-1zM1366 477h1v1h-1zM1401 477h1v1h-1zM1471 477h1v1h-1zM1506 477h1v1h-1zM1541 477h1v1h-1zM1576 477h1v1h-1zM1646 477h1v1h-1zM1681 477h1v1h-1zM1716 477h1v1h-1zM3 477h2v1h-2zM3 500h1v1h-1zM73 500h1v1h-1zM108 500h1v1h-1zM143 500h1v1h-1zM178 500h1v1h-1zM248 500h1v1h-1zM283 500h1v1h-1zM318 500h1v1h-1zM353 500h1v1h-1zM423 500h1v1h-1zM458 500h1v1h-1zM493 500h1v1h-1zM528 500h1v1h-1zM597 500h1v1h-1zM632 500h1v1h-1zM667 500h1v1h-1zM702 500h1v1h-1zM772 500h1v1h-1zM807 500h1v1h-1zM842 500h1v1h-1zM877 500h1v1h-1zM947 500h1v1h-1zM982 500h1v1h-1zM1017 500h1v1h-1zM1052 500h1v1h-1zM1122 500h1v1h-1zM1157 500h1v1h-1zM1192 500h1v1h-1zM1227 500h1v1h-1zM1296 500h1v1h-1zM1331 500h1v1h-1zM1366 500h1v1h-1zM1401 500h1v1h-1zM1471 500h1v1h-1zM1506 500h1v1h-1zM1541 500h1v1h-1zM1576 500h1v1h-1zM1646 500h1v1h-1zM1681 500h1v1h-1zM1716 500h1v1h-1zM3 500h2v1h-2zM213 291h1v1h-1zM213 295h1v1h-1zM213 300h1v1h-1zM213 305h1v1h-1zM213 309h1v1h-1zM213 314h1v1h-1zM213 319h1v1h-1zM213 323h1v1h-1zM213 328h1v1h-1zM213 333h1v1h-1zM213 337h1v1h-1zM213 342h1v1h-1zM213 346h1v1h-1zM213 351h1v1h-1zM213 356h1v1h-1zM213 360h1v1h-1zM213 365h1v1h-1zM213 370h1v1h-1zM213 374h1v1h-1zM213 379h1v1h-1zM213 384h1v1h-1zM213 388h1v1h-1zM213 393h1v1h-1zM213 398h1v1h-1zM213 402h1v1h-1zM213 407h1v1h-1zM213 412h1v1h-1zM213 416h1v1h-1zM213 421h1v1h-1zM213 426h1v1h-1zM213 430h1v1h-1zM213 435h1v1h-1zM213 439h1v1h-1zM213 444h1v1h-1zM213 449h1v1h-1zM213 453h1v1h-1zM213 458h1v1h-1zM213 463h1v1h-1zM213 467h1v1h-1zM213 472h1v1h-1zM213 477h1v1h-1zM213 481h1v1h-1zM213 486h1v1h-1zM213 491h1v1h-1zM213 495h1v1h-1zM213 500h1v1h-1zM213 505h1v1h-1zM213 509h1v1h-1zM213 514h1v1h-1zM213 519h1v1h-1zM388 291h1v1h-1zM388 295h1v1h-1zM388 300h1v1h-1zM388 305h1v1h-1zM388 309h1v1h-1zM388 314h1v1h-1zM388 319h1v1h-1zM388 323h1v1h-1zM388 328h1v1h-1zM388 333h1v1h-1zM388 337h1v1h-1zM388 342h1v1h-1zM388 346h1v1h-1zM388 351h1v1h-1zM388 356h1v1h-1zM388 360h1v1h-1zM388 365h1v1h-1zM388 370h1v1h-1zM388 374h1v1h-1zM388 379h1v1h-1zM388 384h1v1h-1zM388 388h1v1h-1zM388 393h1v1h-1zM388 398h1v1h-1zM388 402h1v1h-1zM388 407h1v1h-1zM388 412h1v1h-1zM388 416h1v1h-1zM388 421h1v1h-1zM388 426h1v1h-1zM388 430h1v1h-1zM388 435h1v1h-1zM388 439h1v1h-1zM388 444h1v1h-1zM388 449h1v1h-1zM388 453h1v1h-1zM388 458h1v1h-1zM388 463h1v1h-1zM388 467h1v1h-1zM388 472h1v1h-1zM388 477h1v1h-1zM388 481h1v1h-1zM388 486h1v1h-1zM388 491h1v1h-1zM388 495h1v1h-1zM388 500h1v1h-1zM388 505h1v1h-1zM388 509h1v1h-1zM388 514h1v1h-1zM388 519h1v1h-1zM563 291h1v1h-1zM563 295h1v1h-1zM563 300h1v1h-1zM563 305h1v1h-1zM563 309h1v1h-1zM563 314h1v1h-1zM563 319h1v1h-1zM563 323h1v1h-1zM563 328h1v1h-1zM563 333h1v1h-1zM563 337h1v1h-1zM563 342h1v1h-1zM563 346h1v1h-1zM563 351h1v1h-1zM563 356h1v1h-1zM563 360h1v1h-1zM563 365h1v1h-1zM563 370h1v1h-1zM563 374h1v1h-1zM563 379h1v1h-1zM563 384h1v1h-1zM563 388h1v1h-1zM563 393h1v1h-1zM563 398h1v1h-1zM563 402h1v1h-1zM563 407h1v1h-1zM563 412h1v1h-1zM563 416h1v1h-1zM563 421h1v1h-1zM563 426h1v1h-1zM563 430h1v1h-1zM563 435h1v1h-1zM563 439h1v1h-1zM563 444h1v1h-1zM563 449h1v1h-1zM563 453h1v1h-1zM563 458h1v1h-1zM563 463h1v1h-1zM563 467h1v1h-1zM563 472h1v1h-1zM563 477h1v1h-1zM563 481h1v1h-1zM563 486h1v1h-1zM563 491h1v1h-1zM563 495h1v1h-1zM563 500h1v1h-1zM563 505h1v1h-1zM563 509h1v1h-1zM563 514h1v1h-1zM563 519h1v1h-1zM737 291h1v1h-1zM737 295h1v1h-1zM737 300h1v1h-1zM737 305h1v1h-1zM737 309h1v1h-1zM737 314h1v1h-1zM737 319h1v1h-1zM737 323h1v1h-1zM737 328h1v1h-1zM737 333h1v1h-1zM737 337h1v1h-1zM737 342h1v1h-1zM737 346h1v1h-1zM737 351h1v1h-1zM737 356h1v1h-1zM737 360h1v1h-1zM737 365h1v1h-1zM737 370h1v1h-1zM737 374h1v1h-1zM737 379h1v1h-1zM737 384h1v1h-1zM737 388h1v1h-1zM737 393h1v1h-1zM737 398h1v1h-1zM737 402h1v1h-1zM737 407h1v1h-1zM737 412h1v1h-1zM737 416h1v1h-1zM737 421h1v1h-1zM737 426h1v1h-1zM737 430h1v1h-1zM737 435h1v1h-1zM737 439h1v1h-1zM737 444h1v1h-1zM737 449h1v1h-1zM737 453h1v1h-1zM737 458h1v1h-1zM737 463h1v1h-1zM737 467h1v1h-1zM737 472h1v1h-1zM737 477h1v1h-1zM737 481h1v1h-1zM737 486h1v1h-1zM737 491h1v1h-1zM737 495h1v1h-1zM737 500h1v1h-1zM737 505h1v1h-1zM737 509h1v1h-1zM737 514h1v1h-1zM737 519h1v1h-1zM912 291h1v1h-1zM912 295h1v1h-1zM912 300h1v1h-1zM912 305h1v1h-1zM912 309h1v1h-1zM912 314h1v1h-1zM912 319h1v1h-1zM912 323h1v1h-1zM912 328h1v1h-1zM912 333h1v1h-1zM912 337h1v1h-1zM912 342h1v1h-1zM912 346h1v1h-1zM912 351h1v1h-1zM912 356h1v1h-1zM912 360h1v1h-1zM912 365h1v1h-1zM912 370h1v1h-1zM912 374h1v1h-1zM912 379h1v1h-1zM912 384h1v1h-1zM912 388h1v1h-1zM912 393h1v1h-1zM912 398h1v1h-1zM912 402h1v1h-1zM912 407h1v1h-1zM912 412h1v1h-1zM912 416h1v1h-1zM912 421h1v1h-1zM912 426h1v1h-1zM912 430h1v1h-1zM912 435h1v1h-1zM912 439h1v1h-1zM912 444h1v1h-1zM912 449h1v1h-1zM912 453h1v1h-1zM912 458h1v1h-1zM912 463h1v1h-1zM912 467h1v1h-1zM912 472h1v1h-1zM912 477h1v1h-1zM912 481h1v1h-1zM912 486h1v1h-1zM912 491h1v1h-1zM912 495h1v1h-1zM912 500h1v1h-1zM912 505h1v1h-1zM912 509h1v1h-1zM912 514h1v1h-1zM912 519h1v1h-1zM1087 291h1v1h-1zM1087 295h1v1h-1zM1087 300h1v1h-1zM1087 305h1v1h-1zM1087 309h1v1h-1zM1087 314h1v1h-1zM1087 319h1v1h-1zM1087 323h1v1h-1zM1087 328h1v1h-1zM1087 333h1v1h-1zM1087 337h1v1h-1zM1087 342h1v1h-1zM1087 346h1v1h-1zM1087 351h1v1h-1zM1087 356h1v1h-1zM1087 360h1v1h-1zM1087 365h1v1h-1zM1087 370h1v1h-1zM1087 374h1v1h-1zM1087 379h1v1h-1zM1087 384h1v1h-1zM1087 388h1v1h-1zM1087 393h1v1h-1zM1087 398h1v1h-1zM1087 402h1v1h-1zM1087 407h1v1h-1zM1087 412h1v1h-1zM1087 416h1v1h-1zM1087 421h1v1h-1zM1087 426h1v1h-1zM1087 430h1v1h-1zM1087 435h1v1h-1zM1087 439h1v1h-1zM1087 444h1v1h-1zM1087 449h1v1h-1zM1087 453h1v1h-1zM1087 458h1v1h-1zM1087 463h1v1h-1zM1087 467h1v1h-1zM1087 472h1v1h-1zM1087 477h1v1h-1zM1087 481h1v1h-1zM1087 486h1v1h-1zM1087 491h1v1h-1zM1087 495h1v1h-1zM1087 500h1v1h-1zM1087 505h1v1h-1zM1087 509h1v1h-1zM1087 514h1v1h-1zM1087 519h1v1h-1zM1262 291h1v1h-1zM1262 295h1v1h-1zM1262 300h1v1h-1zM1262 305h1v1h-1zM1262 309h1v1h-1zM1262 314h1v1h-1zM1262 319h1v1h-1zM1262 323h1v1h-1zM1262 328h1v1h-1zM1262 333h1v1h-1zM1262 337h1v1h-1zM1262 342h1v1h-1zM1262 346h1v1h-1zM1262 351h1v1h-1zM1262 356h1v1h-1zM1262 360h1v1h-1zM1262 365h1v1h-1zM1262 370h1v1h-1zM1262 374h1v1h-1zM1262 379h1v1h-1zM1262 384h1v1h-1zM1262 388h1v1h-1zM1262 393h1v1h-1zM1262 398h1v1h-1zM1262 402h1v1h-1zM1262 407h1v1h-1zM1262 412h1v1h-1zM1262 416h1v1h-1zM1262 421h1v1h-1zM1262 426h1v1h-1zM1262 430h1v1h-1zM1262 435h1v1h-1zM1262 439h1v1h-1zM1262 444h1v1h-1zM1262 449h1v1h-1zM1262 453h1v1h-1zM1262 458h1v1h-1zM1262 463h1v1h-1zM1262 467h1v1h-1zM1262 472h1v1h-1zM1262 477h1v1h-1zM1262 481h1v1h-1zM1262 486h1v1h-1zM1262 491h1v1h-1zM1262 495h1v1h-1zM1262 500h1v1h-1zM1262 505h1v1h-1zM1262 509h1v1h-1zM1262 514h1v1h-1zM1262 519h1v1h-1zM1436 291h1v1h-1zM1436 295h1v1h-1zM1436 300h1v1h-1zM1436 305h1v1h-1zM1436 309h1v1h-1zM1436 314h1v1h-1zM1436 319h1v1h-1zM1436 323h1v1h-1zM1436 328h1v1h-1zM1436 333h1v1h-1zM1436 337h1v1h-1zM1436 342h1v1h-1zM1436 346h1v1h-1zM1436 351h1v1h-1zM1436 356h1v1h-1zM1436 360h1v1h-1zM1436 365h1v1h-1zM1436 370h1v1h-1zM1436 374h1v1h-1zM1436 379h1v1h-1zM1436 384h1v1h-1zM1436 388h1v1h-1zM1436 393h1v1h-1zM1436 398h1v1h-1zM1436 402h1v1h-1zM1436 407h1v1h-1zM1436 412h1v1h-1zM1436 416h1v1h-1zM1436 421h1v1h-1zM1436 426h1v1h-1zM1436 430h1v1h-1zM1436 435h1v1h-1zM1436 439h1v1h-1zM1436 444h1v1h-1zM1436 449h1v1h-1zM1436 453h1v1h-1zM1436 458h1v1h-1zM1436 463h1v1h-1zM1436 467h1v1h-1zM1436 472h1v1h-1zM1436 477h1v1h-1zM1436 481h1v1h-1zM1436 486h1v1h-1zM1436 491h1v1h-1zM1436 495h1v1h-1zM1436 500h1v1h-1zM1436 505h1v1h-1zM1436 509h1v1h-1zM1436 514h1v1h-1zM1436 519h1v1h-1zM1611 291h1v1h-1zM1611 295h1v1h-1zM1611 300h1v1h-1zM1611 305h1v1h-1zM1611 309h1v1h-1zM1611 314h1v1h-1zM1611 319h1v1h-1zM1611 323h1v1h-1zM1611 328h1v1h-1zM1611 333h1v1h-1zM1611 337h1v1h-1zM1611 342h1v1h-1zM1611 346h1v1h-1zM1611 351h1v1h-1zM1611 356h1v1h-1zM1611 360h1v1h-1zM1611 365h1v1h-1zM1611 370h1v1h-1zM1611 374h1v1h-1zM1611 379h1v1h-1zM1611 384h1v1h-1zM1611 388h1v1h-1zM1611 393h1v1h-1zM1611 398h1v1h-1zM1611 402h1v1h-1zM1611 407h1v1h-1zM1611 412h1v1h-1zM1611 416h1v1h-1zM1611 421h1v1h-1zM1611 426h1v1h-1zM1611 430h1v1h-1zM1611 435h1v1h-1zM1611 439h1v1h-1zM1611 444h1v1h-1zM1611 449h1v1h-1zM1611 453h1v1h-1zM1611 458h1v1h-1zM1611 463h1v1h-1zM1611 467h1v1h-1zM1611 472h1v1h-1zM1611 477h1v1h-1zM1611 481h1v1h-1zM1611 486h1v1h-1zM1611 491h1v1h-1zM1611 495h1v1h-1zM1611 500h1v1h-1zM1611 505h1v1h-1zM1611 509h1v1h-1zM1611 514h1v1h-1zM1611 519h1v1h-1zM3 525h1v1h-1zM73 525h1v1h-1zM108 525h1v1h-1zM143 525h1v1h-1zM178 525h1v1h-1zM248 525h1v1h-1zM283 525h1v1h-1zM318 525h1v1h-1zM353 525h1v1h-1zM423 525h1v1h-1zM458 525h1v1h-1zM493 525h1v1h-1zM528 525h1v1h-1zM597 525h1v1h-1zM632 525h1v1h-1zM667 525h1v1h-1zM702 525h1v1h-1zM772 525h1v1h-1zM807 525h1v1h-1zM842 525h1v1h-1zM877 525h1v1h-1zM947 525h1v1h-1zM982 525h1v1h-1zM1017 525h1v1h-1zM1052 525h1v1h-1zM1122 525h1v1h-1zM1157 525h1v1h-1zM1192 525h1v1h-1zM1227 525h1v1h-1zM1296 525h1v1h-1zM1331 525h1v1h-1zM1366 525h1v1h-1zM1401 525h1v1h-1zM1471 525h1v1h-1zM1506 525h1v1h-1zM1541 525h1v1h-1zM1576 525h1v1h-1zM1646 525h1v1h-1zM1681 525h1v1h-1zM1716 525h1v1h-1zM3 525h2v1h-2zM3 548h1v1h-1zM73 548h1v1h-1zM108 548h1v1h-1zM143 548h1v1h-1zM178 548h1v1h-1zM248 548h1v1h-1zM283 548h1v1h-1zM318 548h1v1h-1zM353 548h1v1h-1zM423 548h1v1h-1zM458 548h1v1h-1zM493 548h1v1h-1zM528 548h1v1h-1zM597 548h1v1h-1zM632 548h1v1h-1zM667 548h1v1h-1zM702 548h1v1h-1zM772 548h1v1h-1zM807 548h1v1h-1zM842 548h1v1h-1zM877 548h1v1h-1zM947 548h1v1h-1zM982 548h1v1h-1zM1017 548h1v1h-1zM1052 548h1v1h-1zM1122 548h1v1h-1zM1157 548h1v1h-1zM1192 548h1v1h-1zM1227 548h1v1h-1zM1296 548h1v1h-1zM1331 548h1v1h-1zM1366 548h1v1h-1zM1401 548h1v1h-1zM1471 548h1v1h-1zM1506 548h1v1h-1zM1541 548h1v1h-1zM1576 548h1v1h-1zM1646 548h1v1h-1zM1681 548h1v1h-1zM1716 548h1v1h-1zM3 548h2v1h-2zM3 571h1v1h-1zM73 571h1v1h-1zM108 571h1v1h-1zM143 571h1v1h-1zM178 571h1v1h-1zM248 571h1v1h-1zM283 571h1v1h-1zM318 571h1v1h-1zM353 571h1v1h-1zM423 571h1v1h-1zM458 571h1v1h-1zM493 571h1v1h-1zM528 571h1v1h-1zM597 571h1v1h-1zM632 571h1v1h-1zM667 571h1v1h-1zM702 571h1v1h-1zM772 571h1v1h-1zM807 571h1v1h-1zM842 571h1v1h-1zM877 571h1v1h-1zM947 571h1v1h-1zM982 571h1v1h-1zM1017 571h1v1h-1zM1052 571h1v1h-1zM1122 571h1v1h-1zM1157 571h1v1h-1zM1192 571h1v1h-1zM1227 571h1v1h-1zM1296 571h1v1h-1zM1331 571h1v1h-1zM1366 571h1v1h-1zM1401 571h1v1h-1zM1471 571h1v1h-1zM1506 571h1v1h-1zM1541 571h1v1h-1zM1576 571h1v1h-1zM1646 571h1v1h-1zM1681 571h1v1h-1zM1716 571h1v1h-1zM3 571h2v1h-2zM3 595h1v1h-1zM73 595h1v1h-1zM108 595h1v1h-1zM143 595h1v1h-1zM178 595h1v1h-1zM248 595h1v1h-1zM283 595h1v1h-1zM318 595h1v1h-1zM353 595h1v1h-1zM423 595h1v1h-1zM458 595h1v1h-1zM493 595h1v1h-1zM528 595h1v1h-1zM597 595h1v1h-1zM632 595h1v1h-1zM667 595h1v1h-1zM702 595h1v1h-1zM772 595h1v1h-1zM807 595h1v1h-1zM842 595h1v1h-1zM877 595h1v1h-1zM947 595h1v1h-1zM982 595h1v1h-1zM1017 595h1v1h-1zM1052 595h1v1h-1zM1122 595h1v1h-1zM1157 595h1v1h-1zM1192 595h1v1h-1zM1227 595h1v1h-1zM1296 595h1v1h-1zM1331 595h1v1h-1zM1366 595h1v1h-1zM1401 595h1v1h-1zM1471 595h1v1h-1zM1506 595h1v1h-1zM1541 595h1v1h-1zM1576 595h1v1h-1zM1646 595h1v1h-1zM1681 595h1v1h-1zM1716 595h1v1h-1zM3 595h2v1h-2zM3 618h1v1h-1zM73 618h1v1h-1zM108 618h1v1h-1zM143 618h1v1h-1zM178 618h1v1h-1zM248 618h1v1h-1zM283 618h1v1h-1zM318 618h1v1h-1zM353 618h1v1h-1zM423 618h1v1h-1zM458 618h1v1h-1zM493 618h1v1h-1zM528 618h1v1h-1zM597 618h1v1h-1zM632 618h1v1h-1zM667 618h1v1h-1zM702 618h1v1h-1zM772 618h1v1h-1zM807 618h1v1h-1zM842 618h1v1h-1zM877 618h1v1h-1zM947 618h1v1h-1zM982 618h1v1h-1zM1017 618h1v1h-1zM1052 618h1v1h-1zM1122 618h1v1h-1zM1157 618h1v1h-1zM1192 618h1v1h-1zM1227 618h1v1h-1zM1296 618h1v1h-1zM1331 618h1v1h-1zM1366 618h1v1h-1zM1401 618h1v1h-1zM1471 618h1v1h-1zM1506 618h1v1h-1zM1541 618h1v1h-1zM1576 618h1v1h-1zM1646 618h1v1h-1zM1681 618h1v1h-1zM1716 618h1v1h-1zM3 618h2v1h-2zM3 641h1v1h-1zM73 641h1v1h-1zM108 641h1v1h-1zM143 641h1v1h-1zM178 641h1v1h-1zM248 641h1v1h-1zM283 641h1v1h-1zM318 641h1v1h-1zM353 641h1v1h-1zM423 641h1v1h-1zM458 641h1v1h-1zM493 641h1v1h-1zM528 641h1v1h-1zM597 641h1v1h-1zM632 641h1v1h-1zM667 641h1v1h-1zM702 641h1v1h-1zM772 641h1v1h-1zM807 641h1v1h-1zM842 641h1v1h-1zM877 641h1v1h-1zM947 641h1v1h-1zM982 641h1v1h-1zM1017 641h1v1h-1zM1052 641h1v1h-1zM1122 641h1v1h-1zM1157 641h1v1h-1zM1192 641h1v1h-1zM1227 641h1v1h-1zM1296 641h1v1h-1zM1331 641h1v1h-1zM1366 641h1v1h-1zM1401 641h1v1h-1zM1471 641h1v1h-1zM1506 641h1v1h-1zM1541 641h1v1h-1zM1576 641h1v1h-1zM1646 641h1v1h-1zM1681 641h1v1h-1zM1716 641h1v1h-1zM3 641h2v1h-2zM3 664h1v1h-1zM73 664h1v1h-1zM108 664h1v1h-1zM143 664h1v1h-1zM178 664h1v1h-1zM248 664h1v1h-1zM283 664h1v1h-1zM318 664h1v1h-1zM353 664h1v1h-1zM423 664h1v1h-1zM458 664h1v1h-1zM493 664h1v1h-1zM528 664h1v1h-1zM597 664h1v1h-1zM632 664h1v1h-1zM667 664h1v1h-1zM702 664h1v1h-1zM772 664h1v1h-1zM807 664h1v1h-1zM842 664h1v1h-1zM877 664h1v1h-1zM947 664h1v1h-1zM982 664h1v1h-1zM1017 664h1v1h-1zM1052 664h1v1h-1zM1122 664h1v1h-1zM1157 664h1v1h-1zM1192 664h1v1h-1zM1227 664h1v1h-1zM1296 664h1v1h-1zM1331 664h1v1h-1zM1366 664h1v1h-1zM1401 664h1v1h-1zM1471 664h1v1h-1zM1506 664h1v1h-1zM1541 664h1v1h-1zM1576 664h1v1h-1zM1646 664h1v1h-1zM1681 664h1v1h-1zM1716 664h1v1h-1zM3 664h2v1h-2zM3 687h1v1h-1zM73 687h1v1h-1zM108 687h1v1h-1zM143 687h1v1h-1zM178 687h1v1h-1zM248 687h1v1h-1zM283 687h1v1h-1zM318 687h1v1h-1zM353 687h1v1h-1zM423 687h1v1h-1zM458 687h1v1h-1zM493 687h1v1h-1zM528 687h1v1h-1zM597 687h1v1h-1zM632 687h1v1h-1zM667 687h1v1h-1zM702 687h1v1h-1zM772 687h1v1h-1zM807 687h1v1h-1zM842 687h1v1h-1zM877 687h1v1h-1zM947 687h1v1h-1zM982 687h1v1h-1zM1017 687h1v1h-1zM1052 687h1v1h-1zM1122 687h1v1h-1zM1157 687h1v1h-1zM1192 687h1v1h-1zM1227 687h1v1h-1zM1296 687h1v1h-1zM1331 687h1v1h-1zM1366 687h1v1h-1zM1401 687h1v1h-1zM1471 687h1v1h-1zM1506 687h1v1h-1zM1541 687h1v1h-1zM1576 687h1v1h-1zM1646 687h1v1h-1zM1681 687h1v1h-1zM1716 687h1v1h-1zM3 687h2v1h-2zM3 711h1v1h-1zM73 711h1v1h-1zM108 711h1v1h-1zM143 711h1v1h-1zM178 711h1v1h-1zM248 711h1v1h-1zM283 711h1v1h-1zM318 711h1v1h-1zM353 711h1v1h-1zM423 711h1v1h-1zM458 711h1v1h-1zM493 711h1v1h-1zM528 711h1v1h-1zM597 711h1v1h-1zM632 711h1v1h-1zM667 711h1v1h-1zM702 711h1v1h-1zM772 711h1v1h-1zM807 711h1v1h-1zM842 711h1v1h-1zM877 711h1v1h-1zM947 711h1v1h-1zM982 711h1v1h-1zM1017 711h1v1h-1zM1052 711h1v1h-1zM1122 711h1v1h-1zM1157 711h1v1h-1zM1192 711h1v1h-1zM1227 711h1v1h-1zM1296 711h1v1h-1zM1331 711h1v1h-1zM1366 711h1v1h-1zM1401 711h1v1h-1zM1471 711h1v1h-1zM1506 711h1v1h-1zM1541 711h1v1h-1zM1576 711h1v1h-1zM1646 711h1v1h-1zM1681 711h1v1h-1zM1716 711h1v1h-1zM3 711h2v1h-2zM3 734h1v1h-1zM73 734h1v1h-1zM108 734h1v1h-1zM143 734h1v1h-1zM178 734h1v1h-1zM248 734h1v1h-1zM283 734h1v1h-1zM318 734h1v1h-1zM353 734h1v1h-1zM423 734h1v1h-1zM458 734h1v1h-1zM493 734h1v1h-1zM528 734h1v1h-1zM597 734h1v1h-1zM632 734h1v1h-1zM667 734h1v1h-1zM702 734h1v1h-1zM772 734h1v1h-1zM807 734h1v1h-1zM842 734h1v1h-1zM877 734h1v1h-1zM947 734h1v1h-1zM982 734h1v1h-1zM1017 734h1v1h-1zM1052 734h1v1h-1zM1122 734h1v1h-1zM1157 734h1v1h-1zM1192 734h1v1h-1zM1227 734h1v1h-1zM1296 734h1v1h-1zM1331 734h1v1h-1zM1366 734h1v1h-1zM1401 734h1v1h-1zM1471 734h1v1h-1zM1506 734h1v1h-1zM1541 734h1v1h-1zM1576 734h1v1h-1zM1646 734h1v1h-1zM1681 734h1v1h-1zM1716 734h1v1h-1zM3 734h2v1h-2zM213 525h1v1h-1zM213 529h1v1h-1zM213 534h1v1h-1zM213 539h1v1h-1zM213 543h1v1h-1zM213 548h1v1h-1zM213 553h1v1h-1zM213 557h1v1h-1zM213 562h1v1h-1zM213 567h1v1h-1zM213 571h1v1h-1zM213 576h1v1h-1zM213 580h1v1h-1zM213 585h1v1h-1zM213 590h1v1h-1zM213 594h1v1h-1zM213 599h1v1h-1zM213 604h1v1h-1zM213 608h1v1h-1zM213 613h1v1h-1zM213 618h1v1h-1zM213 622h1v1h-1zM213 627h1v1h-1zM213 632h1v1h-1zM213 636h1v1h-1zM213 641h1v1h-1zM213 646h1v1h-1zM213 650h1v1h-1zM213 655h1v1h-1zM213 660h1v1h-1zM213 664h1v1h-1zM213 669h1v1h-1zM213 673h1v1h-1zM213 678h1v1h-1zM213 683h1v1h-1zM213 687h1v1h-1zM213 692h1v1h-1zM213 697h1v1h-1zM213 701h1v1h-1zM213 706h1v1h-1zM213 711h1v1h-1zM213 715h1v1h-1zM213 720h1v1h-1zM213 725h1v1h-1zM213 729h1v1h-1zM213 734h1v1h-1zM213 739h1v1h-1zM213 743h1v1h-1zM213 748h1v1h-1zM213 753h1v1h-1zM388 525h1v1h-1zM388 529h1v1h-1zM388 534h1v1h-1zM388 539h1v1h-1zM388 543h1v1h-1zM388 548h1v1h-1zM388 553h1v1h-1zM388 557h1v1h-1zM388 562h1v1h-1zM388 567h1v1h-1zM388 571h1v1h-1zM388 576h1v1h-1zM388 580h1v1h-1zM388 585h1v1h-1zM388 590h1v1h-1zM388 594h1v1h-1zM388 599h1v1h-1zM388 604h1v1h-1zM388 608h1v1h-1zM388 613h1v1h-1zM388 618h1v1h-1zM388 622h1v1h-1zM388 627h1v1h-1zM388 632h1v1h-1zM388 636h1v1h-1zM388 641h1v1h-1zM388 646h1v1h-1zM388 650h1v1h-1zM388 655h1v1h-1zM388 660h1v1h-1zM388 664h1v1h-1zM388 669h1v1h-1zM388 673h1v1h-1zM388 678h1v1h-1zM388 683h1v1h-1zM388 687h1v1h-1zM388 692h1v1h-1zM388 697h1v1h-1zM388 701h1v1h-1zM388 706h1v1h-1zM388 711h1v1h-1zM388 715h1v1h-1zM388 720h1v1h-1zM388 725h1v1h-1zM388 729h1v1h-1zM388 734h1v1h-1zM388 739h1v1h-1zM388 743h1v1h-1zM388 748h1v1h-1zM388 753h1v1h-1zM563 525h1v1h-1zM563 529h1v1h-1zM563 534h1v1h-1zM563 539h1v1h-1zM563 543h1v1h-1zM563 548h1v1h-1zM563 553h1v1h-1zM563 557h1v1h-1zM563 562h1v1h-1zM563 567h1v1h-1zM563 571h1v1h-1zM563 576h1v1h-1zM563 580h1v1h-1zM563 585h1v1h-1zM563 590h1v1h-1zM563 594h1v1h-1zM563 599h1v1h-1zM563 604h1v1h-1zM563 608h1v1h-1zM563 613h1v1h-1zM563 618h1v1h-1zM563 622h1v1h-1zM563 627h1v1h-1zM563 632h1v1h-1zM563 636h1v1h-1zM563 641h1v1h-1zM563 646h1v1h-1zM563 650h1v1h-1zM563 655h1v1h-1zM563 660h1v1h-1zM563 664h1v1h-1zM563 669h1v1h-1zM563 673h1v1h-1zM563 678h1v1h-1zM563 683h1v1h-1zM563 687h1v1h-1zM563 692h1v1h-1zM563 697h1v1h-1zM563 701h1v1h-1zM563 706h1v1h-1zM563 711h1v1h-1zM563 715h1v1h-1zM563 720h1v1h-1zM563 725h1v1h-1zM563 729h1v1h-1zM563 734h1v1h-1zM563 739h1v1h-1zM563 743h1v1h-1zM563 748h1v1h-1zM563 753h1v1h-1zM737 525h1v1h-1zM737 529h1v1h-1zM737 534h1v1h-1zM737 539h1v1h-1zM737 543h1v1h-1zM737 548h1v1h-1zM737 553h1v1h-1zM737 557h1v1h-1zM737 562h1v1h-1zM737 567h1v1h-1zM737 571h1v1h-1zM737 576h1v1h-1zM737 580h1v1h-1zM737 585h1v1h-1zM737 590h1v1h-1zM737 594h1v1h-1zM737 599h1v1h-1zM737 604h1v1h-1zM737 608h1v1h-1zM737 613h1v1h-1zM737 618h1v1h-1zM737 622h1v1h-1zM737 627h1v1h-1zM737 632h1v1h-1zM737 636h1v1h-1zM737 641h1v1h-1zM737 646h1v1h-1zM737 650h1v1h-1zM737 655h1v1h-1zM737 660h1v1h-1zM737 664h1v1h-1zM737 669h1v1h-1zM737 673h1v1h-1zM737 678h1v1h-1zM737 683h1v1h-1zM737 687h1v1h-1zM737 692h1v1h-1zM737 697h1v1h-1zM737 701h1v1h-1zM737 706h1v1h-1zM737 711h1v1h-1zM737 715h1v1h-1zM737 720h1v1h-1zM737 725h1v1h-1zM737 729h1v1h-1zM737 734h1v1h-1zM737 739h1v1h-1zM737 743h1v1h-1zM737 748h1v1h-1zM737 753h1v1h-1zM912 525h1v1h-1zM912 529h1v1h-1zM912 534h1v1h-1zM912 539h1v1h-1zM912 543h1v1h-1zM912 548h1v1h-1zM912 553h1v1h-1zM912 557h1v1h-1zM912 562h1v1h-1zM912 567h1v1h-1zM912 571h1v1h-1zM912 576h1v1h-1zM912 580h1v1h-1zM912 585h1v1h-1zM912 590h1v1h-1zM912 594h1v1h-1zM912 599h1v1h-1zM912 604h1v1h-1zM912 608h1v1h-1zM912 613h1v1h-1zM912 618h1v1h-1zM912 622h1v1h-1zM912 627h1v1h-1zM912 632h1v1h-1zM912 636h1v1h-1zM912 641h1v1h-1zM912 646h1v1h-1zM912 650h1v1h-1zM912 655h1v1h-1zM912 660h1v1h-1zM912 664h1v1h-1zM912 669h1v1h-1zM912 673h1v1h-1zM912 678h1v1h-1zM912 683h1v1h-1zM912 687h1v1h-1zM912 692h1v1h-1zM912 697h1v1h-1zM912 701h1v1h-1zM912 706h1v1h-1zM912 711h1v1h-1zM912 715h1v1h-1zM912 720h1v1h-1zM912 725h1v1h-1zM912 729h1v1h-1zM912 734h1v1h-1zM912 739h1v1h-1zM912 743h1v1h-1zM912 748h1v1h-1zM912 753h1v1h-1zM1087 525h1v1h-1zM1087 529h1v1h-1zM1087 534h1v1h-1zM1087 539h1v1h-1zM1087 543h1v1h-1zM1087 548h1v1h-1zM1087 553h1v1h-1zM1087 557h1v1h-1zM1087 562h1v1h-1zM1087 567h1v1h-1zM1087 571h1v1h-1zM1087 576h1v1h-1zM1087 580h1v1h-1zM1087 585h1v1h-1zM1087 590h1v1h-1zM1087 594h1v1h-1zM1087 599h1v1h-1zM1087 604h1v1h-1zM1087 608h1v1h-1zM1087 613h1v1h-1zM1087 618h1v1h-1zM1087 622h1v1h-1zM1087 627h1v1h-1zM1087 632h1v1h-1zM1087 636h1v1h-1zM1087 641h1v1h-1zM1087 646h1v1h-1zM1087 650h1v1h-1zM1087 655h1v1h-1zM1087 660h1v1h-1zM1087 664h1v1h-1zM1087 669h1v1h-1zM1087 673h1v1h-1zM1087 678h1v1h-1zM1087 683h1v1h-1zM1087 687h1v1h-1zM1087 692h1v1h-1zM1087 697h1v1h-1zM1087 701h1v1h-1zM1087 706h1v1h-1zM1087 711h1v1h-1zM1087 715h1v1h-1zM1087 720h1v1h-1zM1087 725h1v1h-1zM1087 729h1v1h-1zM1087 734h1v1h-1zM1087 739h1v1h-1zM1087 743h1v1h-1zM1087 748h1v1h-1zM1087 753h1v1h-1zM1262 525h1v1h-1zM1262 529h1v1h-1zM1262 534h1v1h-1zM1262 539h1v1h-1zM1262 543h1v1h-1zM1262 548h1v1h-1zM1262 553h1v1h-1zM1262 557h1v1h-1zM1262 562h1v1h-1zM1262 567h1v1h-1zM1262 571h1v1h-1zM1262 576h1v1h-1zM1262 580h1v1h-1zM1262 585h1v1h-1zM1262 590h1v1h-1zM1262 594h1v1h-1zM1262 599h1v1h-1zM1262 604h1v1h-1zM1262 608h1v1h-1zM1262 613h1v1h-1zM1262 618h1v1h-1zM1262 622h1v1h-1zM1262 627h1v1h-1zM1262 632h1v1h-1zM1262 636h1v1h-1zM1262 641h1v1h-1zM1262 646h1v1h-1zM1262 650h1v1h-1zM1262 655h1v1h-1zM1262 660h1v1h-1zM1262 664h1v1h-1zM1262 669h1v1h-1zM1262 673h1v1h-1zM1262 678h1v1h-1zM1262 683h1v1h-1zM1262 687h1v1h-1zM1262 692h1v1h-1zM1262 697h1v1h-1zM1262 701h1v1h-1zM1262 706h1v1h-1zM1262 711h1v1h-1zM1262 715h1v1h-1zM1262 720h1v1h-1zM1262 725h1v1h-1zM1262 729h1v1h-1zM1262 734h1v1h-1zM1262 739h1v1h-1zM1262 743h1v1h-1zM1262 748h1v1h-1zM1262 753h1v1h-1zM1436 525h1v1h-1zM1436 529h1v1h-1zM1436 534h1v1h-1zM1436 539h1v1h-1zM1436 543h1v1h-1zM1436 548h1v1h-1zM1436 553h1v1h-1zM1436 557h1v1h-1zM1436 562h1v1h-1zM1436 567h1v1h-1zM1436 571h1v1h-1zM1436 576h1v1h-1zM1436 580h1v1h-1zM1436 585h1v1h-1zM1436 590h1v1h-1zM1436 594h1v1h-1zM1436 599h1v1h-1zM1436 604h1v1h-1zM1436 608h1v1h-1zM1436 613h1v1h-1zM1436 618h1v1h-1zM1436 622h1v1h-1zM1436 627h1v1h-1zM1436 632h1v1h-1zM1436 636h1v1h-1zM1436 641h1v1h-1zM1436 646h1v1h-1zM1436 650h1v1h-1zM1436 655h1v1h-1zM1436 660h1v1h-1zM1436 664h1v1h-1zM1436 669h1v1h-1zM1436 673h1v1h-1zM1436 678h1v1h-1zM1436 683h1v1h-1zM1436 687h1v1h-1zM1436 692h1v1h-1zM1436 697h1v1h-1zM1436 701h1v1h-1zM1436 706h1v1h-1zM1436 711h1v1h-1zM1436 715h1v1h-1zM1436 720h1v1h-1zM1436 725h1v1h-1zM1436 729h1v1h-1zM1436 734h1v1h-1zM1436 739h1v1h-1zM1436 743h1v1h-1zM1436 748h1v1h-1zM1436 753h1v1h-1zM1611 525h1v1h-1zM1611 529h1v1h-1zM1611 534h1v1h-1zM1611 539h1v1h-1zM1611 543h1v1h-1zM1611 548h1v1h-1zM1611 553h1v1h-1zM1611 557h1v1h-1zM1611 562h1v1h-1zM1611 567h1v1h-1zM1611 571h1v1h-1zM1611 576h1v1h-1zM1611 580h1v1h-1zM1611 585h1v1h-1zM1611 590h1v1h-1zM1611 594h1v1h-1zM1611 599h1v1h-1zM1611 604h1v1h-1zM1611 608h1v1h-1zM1611 613h1v1h-1zM1611 618h1v1h-1zM1611 622h1v1h-1zM1611 627h1v1h-1zM1611 632h1v1h-1zM1611 636h1v1h-1zM1611 641h1v1h-1zM1611 646h1v1h-1zM1611 650h1v1h-1zM1611 655h1v1h-1zM1611 660h1v1h-1zM1611 664h1v1h-1zM1611 669h1v1h-1zM1611 673h1v1h-1zM1611 678h1v1h-1zM1611 683h1v1h-1zM1611 687h1v1h-1zM1611 692h1v1h-1zM1611 697h1v1h-1zM1611 701h1v1h-1zM1611 706h1v1h-1zM1611 711h1v1h-1zM1611 715h1v1h-1zM1611 720h1v1h-1zM1611 725h1v1h-1zM1611 729h1v1h-1zM1611 734h1v1h-1zM1611 739h1v1h-1zM1611 743h1v1h-1zM1611 748h1v1h-1zM1611 753h1v1h-1zM3 759h1v1h-1zM73 759h1v1h-1zM108 759h1v1h-1zM143 759h1v1h-1zM178 759h1v1h-1zM248 759h1v1h-1zM283 759h1v1h-1zM318 759h1v1h-1zM353 759h1v1h-1zM423 759h1v1h-1zM458 759h1v1h-1zM493 759h1v1h-1zM528 759h1v1h-1zM597 759h1v1h-1zM632 759h1v1h-1zM667 759h1v1h-1zM702 759h1v1h-1zM772 759h1v1h-1zM807 759h1v1h-1zM842 759h1v1h-1zM877 759h1v1h-1zM947 759h1v1h-1zM982 759h1v1h-1zM1017 759h1v1h-1zM1052 759h1v1h-1zM1122 759h1v1h-1zM1157 759h1v1h-1zM1192 759h1v1h-1zM1227 759h1v1h-1zM1296 759h1v1h-1zM1331 759h1v1h-1zM1366 759h1v1h-1zM1401 759h1v1h-1zM1471 759h1v1h-1zM1506 759h1v1h-1zM1541 759h1v1h-1zM1576 759h1v1h-1zM1646 759h1v1h-1zM1681 759h1v1h-1zM1716 759h1v1h-1zM3 759h2v1h-2zM3 782h1v1h-1zM73 782h1v1h-1zM108 782h1v1h-1zM143 782h1v1h-1zM178 782h1v1h-1zM248 782h1v1h-1zM283 782h1v1h-1zM318 782h1v1h-1zM353 782h1v1h-1zM423 782h1v1h-1zM458 782h1v1h-1zM493 782h1v1h-1zM528 782h1v1h-1zM597 782h1v1h-1zM632 782h1v1h-1zM667 782h1v1h-1zM702 782h1v1h-1zM772 782h1v1h-1zM807 782h1v1h-1zM842 782h1v1h-1zM877 782h1v1h-1zM947 782h1v1h-1zM982 782h1v1h-1zM1017 782h1v1h-1zM1052 782h1v1h-1zM1122 782h1v1h-1zM1157 782h1v1h-1zM1192 782h1v1h-1zM1227 782h1v1h-1zM1296 782h1v1h-1zM1331 782h1v1h-1zM1366 782h1v1h-1zM1401 782h1v1h-1zM1471 782h1v1h-1zM1506 782h1v1h-1zM1541 782h1v1h-1zM1576 782h1v1h-1zM1646 782h1v1h-1zM1681 782h1v1h-1zM1716 782h1v1h-1zM3 782h2v1h-2zM3 805h1v1h-1zM73 805h1v1h-1zM108 805h1v1h-1zM143 805h1v1h-1zM178 805h1v1h-1zM248 805h1v1h-1zM283 805h1v1h-1zM318 805h1v1h-1zM353 805h1v1h-1zM423 805h1v1h-1zM458 805h1v1h-1zM493 805h1v1h-1zM528 805h1v1h-1zM597 805h1v1h-1zM632 805h1v1h-1zM667 805h1v1h-1zM702 805h1v1h-1zM772 805h1v1h-1zM807 805h1v1h-1zM842 805h1v1h-1zM877 805h1v1h-1zM947 805h1v1h-1zM982 805h1v1h-1zM1017 805h1v1h-1zM1052 805h1v1h-1zM1122 805h1v1h-1zM1157 805h1v1h-1zM1192 805h1v1h-1zM1227 805h1v1h-1zM1296 805h1v1h-1zM1331 805h1v1h-1zM1366 805h1v1h-1zM1401 805h1v1h-1zM1471 805h1v1h-1zM1506 805h1v1h-1zM1541 805h1v1h-1zM1576 805h1v1h-1zM1646 805h1v1h-1zM1681 805h1v1h-1zM1716 805h1v1h-1zM3 805h2v1h-2zM3 829h1v1h-1zM73 829h1v1h-1zM108 829h1v1h-1zM143 829h1v1h-1zM178 829h1v1h-1zM248 829h1v1h-1zM283 829h1v1h-1zM318 829h1v1h-1zM353 829h1v1h-1zM423 829h1v1h-1zM458 829h1v1h-1zM493 829h1v1h-1zM528 829h1v1h-1zM597 829h1v1h-1zM632 829h1v1h-1zM667 829h1v1h-1zM702 829h1v1h-1zM772 829h1v1h-1zM807 829h1v1h-1zM842 829h1v1h-1zM877 829h1v1h-1zM947 829h1v1h-1zM982 829h1v1h-1zM1017 829h1v1h-1zM1052 829h1v1h-1zM1122 829h1v1h-1zM1157 829h1v1h-1zM1192 829h1v1h-1zM1227 829h1v1h-1zM1296 829h1v1h-1zM1331 829h1v1h-1zM1366 829h1v1h-1zM1401 829h1v1h-1zM1471 829h1v1h-1zM1506 829h1v1h-1zM1541 829h1v1h-1zM1576 829h1v1h-1zM1646 829h1v1h-1zM1681 829h1v1h-1zM1716 829h1v1h-1zM3 829h2v1h-2zM3 852h1v1h-1zM73 852h1v1h-1zM108 852h1v1h-1zM143 852h1v1h-1zM178 852h1v1h-1zM248 852h1v1h-1zM283 852h1v1h-1zM318 852h1v1h-1zM353 852h1v1h-1zM423 852h1v1h-1zM458 852h1v1h-1zM493 852h1v1h-1zM528 852h1v1h-1zM597 852h1v1h-1zM632 852h1v1h-1zM667 852h1v1h-1zM702 852h1v1h-1zM772 852h1v1h-1zM807 852h1v1h-1zM842 852h1v1h-1zM877 852h1v1h-1zM947 852h1v1h-1zM982 852h1v1h-1zM1017 852h1v1h-1zM1052 852h1v1h-1zM1122 852h1v1h-1zM1157 852h1v1h-1zM1192 852h1v1h-1zM1227 852h1v1h-1zM1296 852h1v1h-1zM1331 852h1v1h-1zM1366 852h1v1h-1zM1401 852h1v1h-1zM1471 852h1v1h-1zM1506 852h1v1h-1zM1541 852h1v1h-1zM1576 852h1v1h-1zM1646 852h1v1h-1zM1681 852h1v1h-1zM1716 852h1v1h-1zM3 852h2v1h-2zM3 875h1v1h-1zM73 875h1v1h-1zM108 875h1v1h-1zM143 875h1v1h-1zM178 875h1v1h-1zM248 875h1v1h-1zM283 875h1v1h-1zM318 875h1v1h-1zM353 875h1v1h-1zM423 875h1v1h-1zM458 875h1v1h-1zM493 875h1v1h-1zM528 875h1v1h-1zM597 875h1v1h-1zM632 875h1v1h-1zM667 875h1v1h-1zM702 875h1v1h-1zM772 875h1v1h-1zM807 875h1v1h-1zM842 875h1v1h-1zM877 875h1v1h-1zM947 875h1v1h-1zM982 875h1v1h-1zM1017 875h1v1h-1zM1052 875h1v1h-1zM1122 875h1v1h-1zM1157 875h1v1h-1zM1192 875h1v1h-1zM1227 875h1v1h-1zM1296 875h1v1h-1zM1331 875h1v1h-1zM1366 875h1v1h-1zM1401 875h1v1h-1zM1471 875h1v1h-1zM1506 875h1v1h-1zM1541 875h1v1h-1zM1576 875h1v1h-1zM1646 875h1v1h-1zM1681 875h1v1h-1zM1716 875h1v1h-1zM3 875h2v1h-2zM3 898h1v1h-1zM73 898h1v1h-1zM108 898h1v1h-1zM143 898h1v1h-1zM178 898h1v1h-1zM248 898h1v1h-1zM283 898h1v1h-1zM318 898h1v1h-1zM353 898h1v1h-1zM423 898h1v1h-1zM458 898h1v1h-1zM493 898h1v1h-1zM528 898h1v1h-1zM597 898h1v1h-1zM632 898h1v1h-1zM667 898h1v1h-1zM702 898h1v1h-1zM772 898h1v1h-1zM807 898h1v1h-1zM842 898h1v1h-1zM877 898h1v1h-1zM947 898h1v1h-1zM982 898h1v1h-1zM1017 898h1v1h-1zM1052 898h1v1h-1zM1122 898h1v1h-1zM1157 898h1v1h-1zM1192 898h1v1h-1zM1227 898h1v1h-1zM1296 898h1v1h-1zM1331 898h1v1h-1zM1366 898h1v1h-1zM1401 898h1v1h-1zM1471 898h1v1h-1zM1506 898h1v1h-1zM1541 898h1v1h-1zM1576 898h1v1h-1zM1646 898h1v1h-1zM1681 898h1v1h-1zM1716 898h1v1h-1zM3 898h2v1h-2zM3 921h1v1h-1zM73 921h1v1h-1zM108 921h1v1h-1zM143 921h1v1h-1zM178 921h1v1h-1zM248 921h1v1h-1zM283 921h1v1h-1zM318 921h1v1h-1zM353 921h1v1h-1zM423 921h1v1h-1zM458 921h1v1h-1zM493 921h1v1h-1zM528 921h1v1h-1zM597 921h1v1h-1zM632 921h1v1h-1zM667 921h1v1h-1zM702 921h1v1h-1zM772 921h1v1h-1zM807 921h1v1h-1zM842 921h1v1h-1zM877 921h1v1h-1zM947 921h1v1h-1zM982 921h1v1h-1zM1017 921h1v1h-1zM1052 921h1v1h-1zM1122 921h1v1h-1zM1157 921h1v1h-1zM1192 921h1v1h-1zM1227 921h1v1h-1zM1296 921h1v1h-1zM1331 921h1v1h-1zM1366 921h1v1h-1zM1401 921h1v1h-1zM1471 921h1v1h-1zM1506 921h1v1h-1zM1541 921h1v1h-1zM1576 921h1v1h-1zM1646 921h1v1h-1zM1681 921h1v1h-1zM1716 921h1v1h-1zM3 921h2v1h-2zM3 945h1v1h-1zM73 945h1v1h-1zM108 945h1v1h-1zM143 945h1v1h-1zM178 945h1v1h-1zM248 945h1v1h-1zM283 945h1v1h-1zM318 945h1v1h-1zM353 945h1v1h-1zM423 945h1v1h-1zM458 945h1v1h-1zM493 945h1v1h-1zM528 945h1v1h-1zM597 945h1v1h-1zM632 945h1v1h-1zM667 945h1v1h-1zM702 945h1v1h-1zM772 945h1v1h-1zM807 945h1v1h-1zM842 945h1v1h-1zM877 945h1v1h-1zM947 945h1v1h-1zM982 945h1v1h-1zM1017 945h1v1h-1zM1052 945h1v1h-1zM1122 945h1v1h-1zM1157 945h1v1h-1zM1192 945h1v1h-1zM1227 945h1v1h-1zM1296 945h1v1h-1zM1331 945h1v1h-1zM1366 945h1v1h-1zM1401 945h1v1h-1zM1471 945h1v1h-1zM1506 945h1v1h-1zM1541 945h1v1h-1zM1576 945h1v1h-1zM1646 945h1v1h-1zM1681 945h1v1h-1zM1716 945h1v1h-1zM3 945h2v1h-2zM3 968h1v1h-1zM73 968h1v1h-1zM108 968h1v1h-1zM143 968h1v1h-1zM178 968h1v1h-1zM248 968h1v1h-1zM283 968h1v1h-1zM318 968h1v1h-1zM353 968h1v1h-1zM423 968h1v1h-1zM458 968h1v1h-1zM493 968h1v1h-1zM528 968h1v1h-1zM597 968h1v1h-1zM632 968h1v1h-1zM667 968h1v1h-1zM702 968h1v1h-1zM772 968h1v1h-1zM807 968h1v1h-1zM842 968h1v1h-1zM877 968h1v1h-1zM947 968h1v1h-1zM982 968h1v1h-1zM1017 968h1v1h-1zM1052 968h1v1h-1zM1122 968h1v1h-1zM1157 968h1v1h-1zM1192 968h1v1h-1zM1227 968h1v1h-1zM1296 968h1v1h-1zM1331 968h1v1h-1zM1366 968h1v1h-1zM1401 968h1v1h-1zM1471 968h1v1h-1zM1506 968h1v1h-1zM1541 968h1v1h-1zM1576 968h1v1h-1zM1646 968h1v1h-1zM1681 968h1v1h-1zM1716 968h1v1h-1zM3 968h2v1h-2zM213 759h1v1h-1zM213 763h1v1h-1zM213 768h1v1h-1zM213 773h1v1h-1zM213 777h1v1h-1zM213 782h1v1h-1zM213 787h1v1h-1zM213 791h1v1h-1zM213 796h1v1h-1zM213 801h1v1h-1zM213 805h1v1h-1zM213 810h1v1h-1zM213 814h1v1h-1zM213 819h1v1h-1zM213 824h1v1h-1zM213 828h1v1h-1zM213 833h1v1h-1zM213 838h1v1h-1zM213 842h1v1h-1zM213 847h1v1h-1zM213 852h1v1h-1zM213 856h1v1h-1zM213 861h1v1h-1zM213 866h1v1h-1zM213 870h1v1h-1zM213 875h1v1h-1zM213 880h1v1h-1zM213 884h1v1h-1zM213 889h1v1h-1zM213 894h1v1h-1zM213 898h1v1h-1zM213 903h1v1h-1zM213 907h1v1h-1zM213 912h1v1h-1zM213 917h1v1h-1zM213 921h1v1h-1zM213 926h1v1h-1zM213 931h1v1h-1zM213 935h1v1h-1zM213 940h1v1h-1zM213 945h1v1h-1zM213 949h1v1h-1zM213 954h1v1h-1zM213 959h1v1h-1zM213 963h1v1h-1zM213 968h1v1h-1zM213 973h1v1h-1zM213 977h1v1h-1zM213 982h1v1h-1zM213 987h1v1h-1zM388 759h1v1h-1zM388 763h1v1h-1zM388 768h1v1h-1zM388 773h1v1h-1zM388 777h1v1h-1zM388 782h1v1h-1zM388 787h1v1h-1zM388 791h1v1h-1zM388 796h1v1h-1zM388 801h1v1h-1zM388 805h1v1h-1zM388 810h1v1h-1zM388 814h1v1h-1zM388 819h1v1h-1zM388 824h1v1h-1zM388 828h1v1h-1zM388 833h1v1h-1zM388 838h1v1h-1zM388 842h1v1h-1zM388 847h1v1h-1zM388 852h1v1h-1zM388 856h1v1h-1zM388 861h1v1h-1zM388 866h1v1h-1zM388 870h1v1h-1zM388 875h1v1h-1zM388 880h1v1h-1zM388 884h1v1h-1zM388 889h1v1h-1zM388 894h1v1h-1zM388 898h1v1h-1zM388 903h1v1h-1zM388 907h1v1h-1zM388 912h1v1h-1zM388 917h1v1h-1zM388 921h1v1h-1zM388 926h1v1h-1zM388 931h1v1h-1zM388 935h1v1h-1zM388 940h1v1h-1zM388 945h1v1h-1zM388 949h1v1h-1zM388 954h1v1h-1zM388 959h1v1h-1zM388 963h1v1h-1zM388 968h1v1h-1zM388 973h1v1h-1zM388 977h1v1h-1zM388 982h1v1h-1zM388 987h1v1h-1zM563 759h1v1h-1zM563 763h1v1h-1zM563 768h1v1h-1zM563 773h1v1h-1zM563 777h1v1h-1zM563 782h1v1h-1zM563 787h1v1h-1zM563 791h1v1h-1zM563 796h1v1h-1zM563 801h1v1h-1zM563 805h1v1h-1zM563 810h1v1h-1zM563 814h1v1h-1zM563 819h1v1h-1zM563 824h1v1h-1zM563 828h1v1h-1zM563 833h1v1h-1zM563 838h1v1h-1zM563 842h1v1h-1zM563 847h1v1h-1zM563 852h1v1h-1zM563 856h1v1h-1zM563 861h1v1h-1zM563 866h1v1h-1zM563 870h1v1h-1zM563 875h1v1h-1zM563 880h1v1h-1zM563 884h1v1h-1zM563 889h1v1h-1zM563 894h1v1h-1zM563 898h1v1h-1zM563 903h1v1h-1zM563 907h1v1h-1zM563 912h1v1h-1zM563 917h1v1h-1zM563 921h1v1h-1zM563 926h1v1h-1zM563 931h1v1h-1zM563 935h1v1h-1zM563 940h1v1h-1zM563 945h1v1h-1zM563 949h1v1h-1zM563 954h1v1h-1zM563 959h1v1h-1zM563 963h1v1h-1zM563 968h1v1h-1zM563 973h1v1h-1zM563 977h1v1h-1zM563 982h1v1h-1zM563 987h1v1h-1zM737 759h1v1h-1zM737 763h1v1h-1zM737 768h1v1h-1zM737 773h1v1h-1zM737 777h1v1h-1zM737 782h1v1h-1zM737 787h1v1h-1zM737 791h1v1h-1zM737 796h1v1h-1zM737 801h1v1h-1zM737 805h1v1h-1zM737 810h1v1h-1zM737 814h1v1h-1zM737 819h1v1h-1zM737 824h1v1h-1zM737 828h1v1h-1zM737 833h1v1h-1zM737 838h1v1h-1zM737 842h1v1h-1zM737 847h1v1h-1zM737 852h1v1h-1zM737 856h1v1h-1zM737 861h1v1h-1zM737 866h1v1h-1zM737 870h1v1h-1zM737 875h1v1h-1zM737 880h1v1h-1zM737 884h1v1h-1zM737 889h1v1h-1zM737 894h1v1h-1zM737 898h1v1h-1zM737 903h1v1h-1zM737 907h1v1h-1zM737 912h1v1h-1zM737 917h1v1h-1zM737 921h1v1h-1zM737 926h1v1h-1zM737 931h1v1h-1zM737 935h1v1h-1zM737 940h1v1h-1zM737 945h1v1h-1zM737 949h1v1h-1zM737 954h1v1h-1zM737 959h1v1h-1zM737 963h1v1h-1zM737 968h1v1h-1zM737 973h1v1h-1zM737 977h1v1h-1zM737 982h1v1h-1zM737 987h1v1h-1zM912 759h1v1h-1zM912 763h1v1h-1zM912 768h1v1h-1zM912 773h1v1h-1zM912 777h1v1h-1zM912 782h1v1h-1zM912 787h1v1h-1zM912 791h1v1h-1zM912 796h1v1h-1zM912 801h1v1h-1zM912 805h1v1h-1zM912 810h1v1h-1zM912 814h1v1h-1zM912 819h1v1h-1zM912 824h1v1h-1zM912 828h1v1h-1zM912 833h1v1h-1zM912 838h1v1h-1zM912 842h1v1h-1zM912 847h1v1h-1zM912 852h1v1h-1zM912 856h1v1h-1zM912 861h1v1h-1zM912 866h1v1h-1zM912 870h1v1h-1zM912 875h1v1h-1zM912 880h1v1h-1zM912 884h1v1h-1zM912 889h1v1h-1zM912 894h1v1h-1zM912 898h1v1h-1zM912 903h1v1h-1zM912 907h1v1h-1zM912 912h1v1h-1zM912 917h1v1h-1zM912 921h1v1h-1zM912 926h1v1h-1zM912 931h1v1h-1zM912 935h1v1h-1zM912 940h1v1h-1zM912 945h1v1h-1zM912 949h1v1h-1zM912 954h1v1h-1zM912 959h1v1h-1zM912 963h1v1h-1zM912 968h1v1h-1zM912 973h1v1h-1zM912 977h1v1h-1zM912 982h1v1h-1zM912 987h1v1h-1zM1087 759h1v1h-1zM1087 763h1v1h-1zM1087 768h1v1h-1zM1087 773h1v1h-1zM1087 777h1v1h-1zM1087 782h1v1h-1zM1087 787h1v1h-1zM1087 791h1v1h-1zM1087 796h1v1h-1zM1087 801h1v1h-1zM1087 805h1v1h-1zM1087 810h1v1h-1zM1087 814h1v1h-1zM1087 819h1v1h-1zM1087 824h1v1h-1zM1087 828h1v1h-1zM1087 833h1v1h-1zM1087 838h1v1h-1zM1087 842h1v1h-1zM1087 847h1v1h-1zM1087 852h1v1h-1zM1087 856h1v1h-1zM1087 861h1v1h-1zM1087 866h1v1h-1zM1087 870h1v1h-1zM1087 875h1v1h-1zM1087 880h1v1h-1zM1087 884h1v1h-1zM1087 889h1v1h-1zM1087 894h1v1h-1zM1087 898h1v1h-1zM1087 903h1v1h-1zM1087 907h1v1h-1zM1087 912h1v1h-1zM1087 917h1v1h-1zM1087 921h1v1h-1zM1087 926h1v1h-1zM1087 931h1v1h-1zM1087 935h1v1h-1zM1087 940h1v1h-1zM1087 945h1v1h-1zM1087 949h1v1h-1zM1087 954h1v1h-1zM1087 959h1v1h-1zM1087 963h1v1h-1zM1087 968h1v1h-1zM1087 973h1v1h-1zM1087 977h1v1h-1zM1087 982h1v1h-1zM1087 987h1v1h-1zM1262 759h1v1h-1zM1262 763h1v1h-1zM1262 768h1v1h-1zM1262 773h1v1h-1zM1262 777h1v1h-1zM1262 782h1v1h-1zM1262 787h1v1h-1zM1262 791h1v1h-1zM1262 796h1v1h-1zM1262 801h1v1h-1zM1262 805h1v1h-1zM1262 810h1v1h-1zM1262 814h1v1h-1zM1262 819h1v1h-1zM1262 824h1v1h-1zM1262 828h1v1h-1zM1262 833h1v1h-1zM1262 838h1v1h-1zM1262 842h1v1h-1zM1262 847h1v1h-1zM1262 852h1v1h-1zM1262 856h1v1h-1zM1262 861h1v1h-1zM1262 866h1v1h-1zM1262 870h1v1h-1zM1262 875h1v1h-1zM1262 880h1v1h-1zM1262 884h1v1h-1zM1262 889h1v1h-1zM1262 894h1v1h-1zM1262 898h1v1h-1zM1262 903h1v1h-1zM1262 907h1v1h-1zM1262 912h1v1h-1zM1262 917h1v1h-1zM1262 921h1v1h-1zM1262 926h1v1h-1zM1262 931h1v1h-1zM1262 935h1v1h-1zM1262 940h1v1h-1zM1262 945h1v1h-1zM1262 949h1v1h-1zM1262 954h1v1h-1zM1262 959h1v1h-1zM1262 963h1v1h-1zM1262 968h1v1h-1zM1262 973h1v1h-1zM1262 977h1v1h-1zM1262 982h1v1h-1zM1262 987h1v1h-1zM1436 759h1v1h-1zM1436 763h1v1h-1zM1436 768h1v1h-1zM1436 773h1v1h-1zM1436 777h1v1h-1zM1436 782h1v1h-1zM1436 787h1v1h-1zM1436 791h1v1h-1zM1436 796h1v1h-1zM1436 801h1v1h-1zM1436 805h1v1h-1zM1436 810h1v1h-1zM1436 814h1v1h-1zM1436 819h1v1h-1zM1436 824h1v1h-1zM1436 828h1v1h-1zM1436 833h1v1h-1zM1436 838h1v1h-1zM1436 842h1v1h-1zM1436 847h1v1h-1zM1436 852h1v1h-1zM1436 856h1v1h-1zM1436 861h1v1h-1zM1436 866h1v1h-1zM1436 870h1v1h-1zM1436 875h1v1h-1zM1436 880h1v1h-1zM1436 884h1v1h-1zM1436 889h1v1h-1zM1436 894h1v1h-1zM1436 898h1v1h-1zM1436 903h1v1h-1zM1436 907h1v1h-1zM1436 912h1v1h-1zM1436 917h1v1h-1zM1436 921h1v1h-1zM1436 926h1v1h-1zM1436 931h1v1h-1zM1436 935h1v1h-1zM1436 940h1v1h-1zM1436 945h1v1h-1zM1436 949h1v1h-1zM1436 954h1v1h-1zM1436 959h1v1h-1zM1436 963h1v1h-1zM1436 968h1v1h-1zM1436 973h1v1h-1zM1436 977h1v1h-1zM1436 982h1v1h-1zM1436 987h1v1h-1zM1611 759h1v1h-1zM1611 763h1v1h-1zM1611 768h1v1h-1zM1611 773h1v1h-1zM1611 777h1v1h-1zM1611 782h1v1h-1zM1611 787h1v1h-1zM1611 791h1v1h-1zM1611 796h1v1h-1zM1611 801h1v1h-1zM1611 805h1v1h-1zM1611 810h1v1h-1zM1611 814h1v1h-1zM1611 819h1v1h-1zM1611 824h1v1h-1zM1611 828h1v1h-1zM1611 833h1v1h-1zM1611 838h1v1h-1zM1611 842h1v1h-1zM1611 847h1v1h-1zM1611 852h1v1h-1zM1611 856h1v1h-1zM1611 861h1v1h-1zM1611 866h1v1h-1zM1611 870h1v1h-1zM1611 875h1v1h-1zM1611 880h1v1h-1zM1611 884h1v1h-1zM1611 889h1v1h-1zM1611 894h1v1h-1zM1611 898h1v1h-1zM1611 903h1v1h-1zM1611 907h1v1h-1zM1611 912h1v1h-1zM1611 917h1v1h-1zM1611 921h1v1h-1zM1611 926h1v1h-1zM1611 931h1v1h-1zM1611 935h1v1h-1zM1611 940h1v1h-1zM1611 945h1v1h-1zM1611 949h1v1h-1zM1611 954h1v1h-1zM1611 959h1v1h-1zM1611 963h1v1h-1zM1611 968h1v1h-1zM1611 973h1v1h-1zM1611 977h1v1h-1zM1611 982h1v1h-1zM1611 987h1v1h-1z" fill="#b4b4b4"/><rect x="3" y="289" width="1748" height="2" fill="#7a7a7a"/><rect x="3" y="523" width="1748" height="2" fill="#7a7a7a"/><rect x="3" y="757" width="1748" height="2" fill="#7a7a7a"/><line x1="38.5" y1="101" x2="38.5" y2="992" stroke="#d0d0d0" stroke-width="1" stroke-dasharray="5 5"/><path d="M28 57h20l-10 9z" fill="#f28b20"/><path d="M29 67.5h18v20h-5.5l-3.5 6l-3.5-6h-5.5z" fill="#000" stroke="#f28b20" stroke-width="2"/><text x="38.2" y="83.2" font-size="16" fill="#f28b20" text-anchor="middle" font-weight="bold">T</text><text x="38.5" y="517" font-size="13" fill="#a8a8a8" text-anchor="middle">0 s</text><text x="213.5" y="517" font-size="13" fill="#a8a8a8" text-anchor="middle">200 µs</text><text x="388.5" y="517" font-size="13" fill="#a8a8a8" text-anchor="middle">400 µs</text><text x="563.5" y="517" font-size="13" fill="#a8a8a8" text-anchor="middle">600 µs</text><text x="737.5" y="517" font-size="13" fill="#a8a8a8" text-anchor="middle">800 µs</text><text x="912.5" y="517" font-size="13" fill="#a8a8a8" text-anchor="middle">1 ms</text><text x="1087.5" y="517" font-size="13" fill="#a8a8a8" text-anchor="middle">1.2 ms</text><text x="1262.5" y="517" font-size="13" fill="#a8a8a8" text-anchor="middle">1.4 ms</text><text x="1436.5" y="517" font-size="13" fill="#a8a8a8" text-anchor="middle">1.6 ms</text><text x="1611.5" y="517" font-size="13" fill="#a8a8a8" text-anchor="middle">1.8 ms</text><path d="M1710 64h30a4 4 0 0 1 4 4v30z" fill="#555555"/><circle cx="1737.2" cy="70.4" r="4.1" fill="none" stroke="#b4b4b4" stroke-width="1.6"/><line x1="1734" y1="73.8" x2="1728.5" y2="79.8" stroke="#b4b4b4" stroke-width="2.6" stroke-linecap="round"/><circle cx="1762" cy="503.1" r="2.2" fill="#c6c6c6"/><circle cx="1762" cy="511.7" r="2.2" fill="#c6c6c6"/><circle cx="1762" cy="520.2" r="2.2" fill="#c6c6c6"/><path d="M3 410.3h1V413.9h-1zM4 409.8h1V413.9h-1zM5 409.0h1V413.5h-1zM6 405.4h1V416.7h-1zM7 405.4h1V414.4h-1zM8 409.3h1V412.3h-1zM9 405.8h1V410.3h-1zM10 405.8h1V411.7h-1zM11 407.2h1V416.1h-1zM12 408.2h1V414.1h-1zM13 408.4h1V413.8h-1zM14 411.7h1V418.6h-1zM15 410.4h1V413.1h-1zM16 411.3h1V417.6h-1zM17 408.3h1V414.2h-1zM18 409.1h1V413.1h-1zM19 406.7h1V415.0h-1zM20 406.7h1V416.8h-1zM21 409.5h1V414.2h-1zM22 409.5h1V414.4h-1zM23 410.9h1V415.4h-1zM24 407.6h1V415.4h-1zM25 411.1h1V415.2h-1zM26 408.6h1V416.4h-1zM27 407.9h1V411.8h-1zM28 409.2h1V413.1h-1zM29 409.2h1V416.4h-1zM30 411.0h1V414.1h-1zM31 409.5h1V413.2h-1zM32 407.4h1V410.8h-1zM33 405.9h1V410.8h-1zM34 405.9h1V412.5h-1zM35 407.6h1V414.1h-1zM36 408.9h1V413.0h-1zM37 409.9h1V415.6h-1zM38 408.5h1V415.6h-1zM39 407.5h1V415.6h-1zM40 410.4h1V415.6h-1zM41 409.4h1V414.5h-1zM42 408.2h1V413.6h-1zM43 405.9h1V410.7h-1zM44 405.9h1V413.2h-1zM45 409.2h1V413.2h-1zM46 406.5h1V412.1h-1zM47 404.0h1V412.0h-1zM48 406.8h1V413.3h-1zM49 406.8h1V412.6h-1zM50 409.5h1V523.0h-1zM51 291.0h1V523.0h-1zM52 291.0h1V523.0h-1zM53 291.0h1V523.0h-1zM54 291.0h1V523.0h-1zM55 291.0h1V523.0h-1zM56 291.0h1V523.0h-1zM57 291.0h1V523.0h-1zM58 291.0h1V523.0h-1zM59 291.0h1V523.0h-1zM60 291.0h1V523.0h-1zM61 336.0h1V523.0h-1zM62 318.0h1V523.0h-1zM63 291.0h1V523.0h-1zM64 291.0h1V417.9h-1zM65 291.0h1V423.5h-1zM66 409.5h1V523.0h-1zM67 404.5h1V523.0h-1zM68 291.0h1V523.0h-1zM69 291.0h1V420.0h-1zM70 291.0h1V415.6h-1zM71 407.9h1V523.0h-1zM72 403.7h1V523.0h-1zM73 291.0h1V523.0h-1zM74 409.5h1V523.0h-1zM75 291.0h1V416.2h-1zM76 402.6h1V413.3h-1zM77 402.0h1V416.1h-1zM78 363.0h1V468.0h-1zM79 291.0h1V415.3h-1zM80 291.0h1V413.5h-1zM81 405.3h1V522.0h-1zM82 407.7h1V415.4h-1zM83 291.0h1V522.0h-1zM84 291.0h1V416.2h-1zM85 291.0h1V415.3h-1zM86 397.3h1V522.0h-1zM87 405.8h1V522.0h-1zM88 408.7h1V417.3h-1zM89 291.0h1V417.1h-1zM90 304.0h1V484.0h-1zM91 405.7h1V484.0h-1zM92 409.1h1V416.7h-1zM93 410.3h1V415.8h-1zM94 359.0h1V414.5h-1zM95 410.0h1V416.0h-1zM96 400.8h1V412.0h-1zM97 403.2h1V413.7h-1zM98 408.5h1V415.3h-1zM99 407.9h1V414.7h-1zM100 406.4h1V413.6h-1zM101 401.1h1V412.1h-1zM102 404.6h1V416.3h-1zM103 395.4h1V411.2h-1zM104 395.4h1V412.4h-1zM105 403.0h1V412.4h-1zM106 403.7h1V416.7h-1zM107 404.3h1V415.0h-1zM108 401.3h1V412.1h-1zM109 406.3h1V411.1h-1zM110 405.3h1V416.1h-1zM111 405.3h1V414.6h-1zM112 407.8h1V415.2h-1zM113 400.2h1V418.8h-1zM114 400.2h1V413.8h-1zM115 409.9h1V418.4h-1zM116 395.7h1V413.7h-1zM117 405.8h1V418.9h-1zM118 404.3h1V418.9h-1zM119 410.1h1V420.2h-1zM120 405.1h1V416.1h-1zM121 408.3h1V419.7h-1zM122 407.7h1V419.7h-1zM123 410.1h1V415.3h-1zM124 405.6h1V411.1h-1zM125 405.6h1V413.5h-1zM126 405.6h1V413.5h-1zM127 404.1h1V413.5h-1zM128 407.6h1V413.3h-1zM129 410.3h1V416.5h-1zM130 410.6h1V421.7h-1zM131 408.6h1V421.7h-1zM132 408.1h1V415.2h-1zM133 408.1h1V416.8h-1zM134 402.5h1V415.8h-1zM135 408.7h1V422.7h-1zM136 407.7h1V416.8h-1zM137 406.6h1V429.5h-1zM138 405.8h1V419.7h-1zM139 402.0h1V414.4h-1zM140 408.6h1V416.3h-1zM141 413.6h1V415.4h-1zM142 405.7h1V415.4h-1zM143 405.7h1V424.1h-1zM144 407.1h1V414.2h-1zM145 407.9h1V415.7h-1zM146 410.1h1V425.9h-1zM147 407.9h1V425.9h-1zM148 402.5h1V412.3h-1zM149 402.5h1V413.4h-1zM150 405.6h1V410.1h-1zM151 403.1h1V420.3h-1zM152 410.8h1V420.3h-1zM153 400.3h1V414.5h-1zM154 400.3h1V423.0h-1zM155 406.9h1V417.2h-1zM156 410.1h1V417.2h-1zM157 405.1h1V412.9h-1zM158 408.2h1V413.8h-1zM159 410.5h1V419.3h-1zM160 406.1h1V415.3h-1zM161 407.0h1V416.2h-1zM162 407.9h1V415.3h-1zM163 407.6h1V410.2h-1zM164 409.2h1V414.6h-1zM165 412.0h1V414.6h-1zM166 403.5h1V416.0h-1zM167 409.3h1V416.0h-1zM168 410.9h1V418.7h-1zM169 410.9h1V414.2h-1zM170 405.7h1V415.9h-1zM171 407.2h1V413.6h-1zM172 407.2h1V413.5h-1zM173 406.7h1V416.1h-1zM174 406.7h1V415.4h-1zM175 410.2h1V414.3h-1zM176 409.7h1V412.8h-1zM177 402.8h1V412.8h-1zM178 406.7h1V417.7h-1zM179 409.9h1V412.8h-1zM180 410.5h1V414.5h-1zM181 406.7h1V417.6h-1zM182 406.7h1V412.1h-1zM183 408.8h1V415.0h-1zM184 413.3h1V418.3h-1zM185 407.8h1V418.3h-1zM186 405.3h1V416.3h-1zM187 405.3h1V416.1h-1zM188 409.6h1V412.9h-1zM189 407.9h1V412.6h-1zM190 407.9h1V413.6h-1zM191 409.8h1V416.2h-1zM192 408.4h1V415.7h-1zM193 408.4h1V415.7h-1zM194 410.3h1V415.7h-1zM195 400.1h1V415.0h-1zM196 407.3h1V415.0h-1zM197 407.3h1V411.2h-1zM198 404.5h1V416.8h-1zM199 410.6h1V416.8h-1zM200 410.4h1V413.1h-1zM201 407.0h1V413.2h-1zM202 409.3h1V418.2h-1zM203 409.3h1V414.8h-1zM204 408.1h1V410.9h-1zM205 408.2h1V413.6h-1zM206 409.6h1V416.5h-1zM207 409.6h1V416.5h-1zM208 409.5h1V413.3h-1zM209 409.4h1V413.9h-1zM210 408.4h1V420.3h-1zM211 404.8h1V411.4h-1zM212 404.8h1V412.7h-1zM213 407.2h1V412.3h-1zM214 407.2h1V414.5h-1zM215 408.4h1V411.2h-1zM216 407.0h1V416.3h-1zM217 406.9h1V411.9h-1zM218 406.9h1V414.5h-1zM219 409.8h1V414.5h-1zM220 407.6h1V415.4h-1zM221 407.6h1V414.1h-1zM222 406.3h1V413.8h-1zM223 407.9h1V415.7h-1zM224 407.7h1V412.8h-1zM225 407.7h1V416.2h-1zM226 410.3h1V415.0h-1zM227 407.8h1V415.0h-1zM228 407.9h1V412.6h-1zM229 411.4h1V415.3h-1zM230 409.2h1V417.7h-1zM231 408.7h1V412.8h-1zM232 409.2h1V413.2h-1zM233 409.6h1V413.9h-1zM234 411.4h1V414.4h-1zM235 407.2h1V414.2h-1zM236 410.4h1V413.1h-1zM237 410.5h1V414.8h-1zM238 404.7h1V412.8h-1zM239 410.9h1V413.7h-1zM240 410.9h1V415.0h-1zM241 410.0h1V416.4h-1zM242 410.0h1V416.4h-1zM243 407.8h1V414.6h-1zM244 407.7h1V412.5h-1zM245 407.4h1V412.0h-1zM246 409.5h1V416.2h-1zM247 405.6h1V415.7h-1zM248 406.7h1V412.9h-1zM249 409.2h1V411.2h-1zM250 409.1h1V412.1h-1zM251 406.1h1V412.1h-1zM252 404.7h1V410.0h-1zM253 408.1h1V411.2h-1zM254 406.6h1V412.0h-1zM255 411.0h1V414.2h-1zM256 411.1h1V414.9h-1zM257 413.3h1V415.9h-1zM258 405.2h1V415.9h-1zM259 405.2h1V410.0h-1zM260 407.6h1V411.1h-1zM261 407.0h1V418.9h-1zM262 407.1h1V418.9h-1zM263 407.1h1V411.5h-1zM264 407.8h1V412.2h-1zM265 408.2h1V415.1h-1zM266 405.9h1V413.5h-1zM267 405.9h1V413.7h-1zM268 411.0h1V414.9h-1zM269 404.5h1V414.2h-1zM270 404.5h1V416.5h-1zM271 409.9h1V416.5h-1zM272 408.2h1V411.1h-1zM273 406.8h1V411.1h-1zM274 406.8h1V416.6h-1zM275 403.6h1V416.6h-1zM276 410.8h1V415.5h-1zM277 409.4h1V411.9h-1zM278 407.5h1V414.7h-1zM279 408.3h1V418.9h-1zM280 407.7h1V413.5h-1zM281 409.7h1V423.1h-1zM282 404.2h1V423.1h-1zM283 406.7h1V413.2h-1zM284 406.7h1V413.3h-1zM285 403.9h1V416.1h-1zM286 408.7h1V416.1h-1zM287 408.7h1V411.2h-1zM288 409.5h1V413.3h-1zM289 411.0h1V415.0h-1zM290 409.9h1V414.6h-1zM291 409.9h1V413.9h-1zM292 411.0h1V416.5h-1zM293 409.1h1V414.2h-1zM294 409.1h1V417.9h-1zM295 412.0h1V416.1h-1zM296 410.1h1V414.2h-1zM297 409.2h1V412.9h-1zM298 407.2h1V416.4h-1zM299 411.8h1V417.0h-1zM300 407.7h1V417.0h-1zM301 407.7h1V415.6h-1zM302 406.5h1V413.4h-1zM303 411.1h1V413.4h-1zM304 412.2h1V414.5h-1zM305 410.4h1V416.0h-1zM306 408.8h1V416.0h-1zM307 406.5h1V414.5h-1zM308 410.7h1V416.5h-1zM309 409.8h1V416.7h-1zM310 407.6h1V413.7h-1zM311 406.0h1V415.5h-1zM312 406.0h1V416.9h-1zM313 411.4h1V417.0h-1zM314 410.2h1V417.0h-1zM315 408.8h1V414.4h-1zM316 407.9h1V414.4h-1zM317 410.3h1V416.5h-1zM318 404.7h1V416.5h-1zM319 404.7h1V414.9h-1zM320 407.9h1V416.1h-1zM321 406.9h1V416.1h-1zM322 408.2h1V414.1h-1zM323 408.6h1V413.6h-1zM324 406.0h1V415.2h-1zM325 408.5h1V415.9h-1zM326 407.5h1V415.2h-1zM327 407.4h1V412.4h-1zM328 407.2h1V413.2h-1zM329 408.6h1V414.5h-1zM330 407.6h1V412.1h-1zM331 409.5h1V413.4h-1zM332 409.2h1V411.8h-1zM333 406.7h1V414.7h-1zM334 406.7h1V415.5h-1zM335 409.5h1V413.0h-1zM336 405.9h1V416.0h-1zM337 408.8h1V414.6h-1zM338 409.5h1V413.3h-1zM339 408.1h1V413.4h-1zM340 407.8h1V414.7h-1zM341 411.7h1V415.9h-1zM342 408.0h1V415.9h-1zM343 408.7h1V414.1h-1zM344 408.3h1V417.9h-1zM345 410.2h1V417.9h-1zM346 408.4h1V415.4h-1zM347 407.8h1V413.7h-1zM348 407.2h1V415.1h-1zM349 407.2h1V413.9h-1zM350 409.4h1V413.3h-1zM351 411.3h1V413.4h-1zM352 411.5h1V414.5h-1zM353 404.1h1V414.5h-1zM354 411.5h1V415.4h-1zM355 407.5h1V414.5h-1zM356 407.9h1V413.9h-1zM357 411.6h1V414.3h-1zM358 409.0h1V417.7h-1zM359 410.7h1V417.7h-1zM360 409.0h1V416.9h-1zM361 408.8h1V416.3h-1zM362 411.6h1V416.3h-1zM363 409.8h1V414.9h-1zM364 409.4h1V412.8h-1zM365 409.3h1V412.7h-1zM366 409.0h1V414.9h-1zM367 404.4h1V416.8h-1zM368 405.4h1V416.8h-1zM369 410.4h1V414.0h-1zM370 412.9h1V415.0h-1zM371 408.5h1V415.0h-1zM372 406.6h1V413.6h-1zM373 408.2h1V417.2h-1zM374 407.3h1V413.4h-1zM375 404.8h1V414.3h-1zM376 408.9h1V414.3h-1zM377 408.8h1V413.7h-1zM378 408.8h1V413.1h-1zM379 405.8h1V413.1h-1zM380 406.9h1V411.5h-1zM381 406.3h1V411.9h-1zM382 409.6h1V414.8h-1zM383 409.2h1V414.8h-1zM384 406.3h1V412.0h-1zM385 411.0h1V414.8h-1zM386 411.3h1V415.2h-1zM387 410.1h1V413.8h-1zM388 409.5h1V415.3h-1zM389 407.9h1V411.6h-1zM390 409.4h1V412.7h-1zM391 408.0h1V421.2h-1zM392 408.0h1V414.1h-1zM393 406.7h1V414.1h-1zM394 406.7h1V414.7h-1zM395 411.1h1V414.7h-1zM396 409.1h1V413.5h-1zM397 409.9h1V413.2h-1zM398 408.4h1V413.2h-1zM399 406.9h1V416.7h-1zM400 405.1h1V412.5h-1zM401 408.1h1V413.8h-1zM402 408.1h1V414.3h-1zM403 410.2h1V415.5h-1zM404 407.6h1V416.3h-1zM405 406.7h1V413.1h-1zM406 408.4h1V417.1h-1zM407 409.4h1V415.9h-1zM408 407.4h1V412.0h-1zM409 409.3h1V412.9h-1zM410 410.7h1V418.3h-1zM411 408.2h1V414.1h-1zM412 408.1h1V411.4h-1zM413 407.5h1V411.2h-1zM414 409.2h1V415.5h-1zM415 409.5h1V417.4h-1zM416 409.5h1V416.9h-1zM417 410.6h1V416.9h-1zM418 410.2h1V412.2h-1zM419 409.3h1V413.0h-1zM420 409.7h1V413.0h-1zM421 407.5h1V412.6h-1zM422 411.6h1V415.6h-1zM423 406.8h1V415.6h-1zM424 407.3h1V414.0h-1zM425 411.5h1V417.0h-1zM426 411.0h1V413.9h-1zM427 411.3h1V417.0h-1zM428 411.2h1V414.8h-1zM429 407.1h1V413.8h-1zM430 410.2h1V413.8h-1zM431 409.4h1V413.7h-1zM432 409.2h1V414.1h-1zM433 410.5h1V413.0h-1zM434 409.5h1V418.0h-1zM435 407.4h1V416.3h-1zM436 406.7h1V416.3h-1zM437 406.7h1V412.7h-1zM438 404.0h1V414.2h-1zM439 404.0h1V413.6h-1zM440 407.7h1V413.9h-1zM441 407.7h1V411.7h-1zM442 408.3h1V413.1h-1zM443 407.0h1V413.0h-1zM444 407.0h1V412.3h-1zM445 408.0h1V412.5h-1zM446 410.7h1V414.4h-1zM447 410.9h1V419.0h-1zM448 410.6h1V419.0h-1zM449 410.6h1V421.2h-1zM450 410.7h1V413.6h-1zM451 409.2h1V415.4h-1zM452 408.4h1V412.7h-1zM453 411.3h1V416.3h-1zM454 409.1h1V413.1h-1zM455 409.9h1V413.1h-1zM456 408.0h1V414.1h-1zM457 408.6h1V414.4h-1zM458 408.6h1V411.1h-1zM459 407.4h1V411.9h-1zM460 407.4h1V418.6h-1zM461 407.9h1V412.5h-1zM462 407.9h1V414.3h-1zM463 403.1h1V416.2h-1zM464 407.0h1V416.2h-1zM465 407.3h1V413.7h-1zM466 406.6h1V415.8h-1zM467 407.6h1V413.9h-1zM468 407.6h1V415.3h-1zM469 407.6h1V414.3h-1zM470 408.2h1V412.0h-1zM471 408.9h1V412.4h-1zM472 410.6h1V413.7h-1zM473 408.8h1V413.6h-1zM474 408.8h1V413.2h-1zM475 409.9h1V415.1h-1zM476 410.2h1V413.7h-1zM477 409.4h1V414.5h-1zM478 404.5h1V416.9h-1zM479 404.5h1V412.3h-1zM480 408.1h1V417.6h-1zM481 414.0h1V417.6h-1zM482 409.7h1V415.2h-1zM483 407.3h1V412.6h-1zM484 411.2h1V414.7h-1zM485 409.7h1V415.4h-1zM486 409.7h1V412.2h-1zM487 408.7h1V415.8h-1zM488 407.4h1V412.9h-1zM489 407.4h1V415.2h-1zM490 409.2h1V415.2h-1zM491 408.8h1V411.8h-1zM492 408.8h1V418.0h-1zM493 403.8h1V416.0h-1zM494 403.8h1V415.4h-1zM495 405.8h1V412.8h-1zM496 407.1h1V412.8h-1zM497 408.7h1V418.7h-1zM498 409.2h1V418.7h-1zM499 409.8h1V415.2h-1zM500 409.9h1V416.1h-1zM501 405.7h1V414.3h-1zM502 406.1h1V414.3h-1zM503 410.1h1V414.1h-1zM504 409.7h1V414.6h-1zM505 405.7h1V415.6h-1zM506 405.7h1V415.2h-1zM507 412.7h1V415.2h-1zM508 406.3h1V416.6h-1zM509 409.4h1V419.9h-1zM510 410.2h1V417.5h-1zM511 402.6h1V417.5h-1zM512 402.6h1V413.1h-1zM513 410.7h1V419.0h-1zM514 411.4h1V416.0h-1zM515 407.6h1V414.4h-1zM516 408.2h1V415.1h-1zM517 409.9h1V414.2h-1zM518 407.1h1V413.8h-1zM519 411.1h1V416.5h-1zM520 405.6h1V416.5h-1zM521 411.8h1V419.3h-1zM522 410.7h1V420.2h-1zM523 410.7h1V414.7h-1zM524 408.8h1V413.1h-1zM525 407.1h1V410.7h-1zM526 407.1h1V414.6h-1zM527 409.4h1V413.0h-1zM528 409.9h1V414.4h-1zM529 408.8h1V416.8h-1zM530 405.7h1V414.3h-1zM531 406.9h1V414.3h-1zM532 409.4h1V412.2h-1zM533 408.6h1V415.5h-1zM534 407.6h1V415.5h-1zM535 406.7h1V414.0h-1zM536 407.3h1V415.6h-1zM537 407.9h1V416.5h-1zM538 409.7h1V416.0h-1zM539 409.2h1V413.6h-1zM540 405.8h1V415.2h-1zM541 408.2h1V415.2h-1zM542 408.2h1V412.5h-1zM543 409.6h1V412.5h-1zM544 404.7h1V414.5h-1zM545 407.7h1V412.3h-1zM546 407.6h1V415.3h-1zM547 407.6h1V413.4h-1zM548 410.7h1V413.0h-1zM549 411.9h1V417.5h-1zM550 410.8h1V417.5h-1zM551 407.5h1V414.8h-1zM552 407.5h1V413.6h-1zM553 407.3h1V413.6h-1zM554 408.9h1V413.6h-1zM555 410.8h1V413.6h-1zM556 404.2h1V411.8h-1zM557 404.2h1V415.0h-1zM558 408.1h1V412.7h-1zM559 408.1h1V414.8h-1zM560 406.6h1V414.8h-1zM561 407.5h1V413.1h-1zM562 410.6h1V413.1h-1zM563 408.9h1V413.3h-1zM564 409.6h1V412.0h-1zM565 408.1h1V413.2h-1zM566 408.1h1V416.2h-1zM567 408.3h1V412.3h-1zM568 410.1h1V415.0h-1zM569 408.6h1V419.5h-1zM570 410.8h1V412.4h-1zM571 409.3h1V412.1h-1zM572 409.9h1V415.8h-1zM573 411.3h1V415.8h-1zM574 411.4h1V415.6h-1zM575 411.6h1V414.5h-1zM576 410.3h1V416.1h-1zM577 408.9h1V412.1h-1zM578 407.6h1V414.8h-1zM579 406.8h1V415.1h-1zM580 408.6h1V416.3h-1zM581 405.7h1V412.9h-1zM582 406.8h1V414.4h-1zM583 408.6h1V413.4h-1zM584 407.0h1V411.9h-1zM585 407.0h1V413.7h-1zM586 406.5h1V411.8h-1zM587 406.5h1V411.5h-1zM588 410.5h1V414.6h-1zM589 406.0h1V414.6h-1zM590 406.8h1V417.6h-1zM591 408.0h1V413.4h-1zM592 408.4h1V413.7h-1zM593 408.4h1V414.7h-1zM594 410.7h1V414.2h-1zM595 409.0h1V414.2h-1zM596 409.0h1V417.1h-1zM597 409.5h1V412.8h-1zM598 404.8h1V411.7h-1zM599 404.8h1V412.1h-1zM600 401.1h1V410.1h-1zM601 408.2h1V415.6h-1zM602 410.5h1V414.3h-1zM603 409.3h1V414.1h-1zM604 408.0h1V414.0h-1zM605 406.8h1V414.1h-1zM606 407.2h1V414.6h-1zM607 411.7h1V416.1h-1zM608 408.6h1V416.1h-1zM609 408.6h1V415.0h-1zM610 410.9h1V415.8h-1zM611 409.8h1V415.8h-1zM612 409.8h1V415.5h-1zM613 410.3h1V416.8h-1zM614 408.1h1V413.7h-1zM615 408.1h1V412.9h-1zM616 411.9h1V415.9h-1zM617 409.4h1V414.0h-1zM618 409.4h1V415.2h-1zM619 408.7h1V415.2h-1zM620 408.4h1V416.4h-1zM621 407.9h1V415.2h-1zM622 409.1h1V415.2h-1zM623 406.1h1V414.7h-1zM624 406.1h1V414.5h-1zM625 409.4h1V413.1h-1zM626 410.4h1V413.3h-1zM627 410.0h1V413.3h-1zM628 410.0h1V417.4h-1zM629 410.5h1V414.2h-1zM630 409.1h1V414.3h-1zM631 408.4h1V413.2h-1zM632 408.6h1V413.6h-1zM633 409.2h1V415.4h-1zM634 409.2h1V414.9h-1zM635 409.9h1V415.1h-1zM636 406.0h1V414.2h-1zM637 406.6h1V410.1h-1zM638 406.6h1V413.6h-1zM639 409.4h1V413.6h-1zM640 411.8h1V413.9h-1zM641 412.2h1V415.1h-1zM642 409.6h1V415.0h-1zM643 408.4h1V414.8h-1zM644 408.2h1V413.3h-1zM645 408.2h1V413.2h-1zM646 410.0h1V415.1h-1zM647 412.2h1V418.5h-1zM648 409.8h1V413.8h-1zM649 403.7h1V411.6h-1zM650 403.7h1V415.4h-1zM651 409.6h1V412.9h-1zM652 406.5h1V414.2h-1zM653 406.6h1V412.0h-1zM654 405.4h1V412.8h-1zM655 410.9h1V416.8h-1zM656 411.3h1V413.9h-1zM657 405.3h1V413.9h-1zM658 406.4h1V415.6h-1zM659 406.9h1V415.5h-1zM660 409.1h1V414.3h-1zM661 408.3h1V414.2h-1zM662 410.4h1V414.7h-1zM663 406.3h1V417.2h-1zM664 406.3h1V414.0h-1zM665 411.4h1V414.0h-1zM666 409.5h1V414.0h-1zM667 406.0h1V411.6h-1zM668 407.3h1V412.4h-1zM669 404.6h1V415.8h-1zM670 408.1h1V413.8h-1zM671 410.8h1V414.2h-1zM672 407.4h1V415.7h-1zM673 409.6h1V415.2h-1zM674 406.7h1V411.6h-1zM675 410.3h1V415.0h-1zM676 408.6h1V418.8h-1zM677 408.6h1V413.8h-1zM678 401.8h1V413.8h-1zM679 401.8h1V412.8h-1zM680 407.7h1V415.8h-1zM681 408.5h1V414.3h-1zM682 405.7h1V416.5h-1zM683 405.7h1V412.1h-1zM684 410.5h1V416.8h-1zM685 409.2h1V416.8h-1zM686 407.0h1V416.3h-1zM687 410.0h1V414.0h-1zM688 409.7h1V414.0h-1zM689 407.6h1V413.4h-1zM690 406.5h1V411.1h-1zM691 406.5h1V411.9h-1zM692 407.7h1V416.1h-1zM693 409.2h1V416.1h-1zM694 403.8h1V412.2h-1zM695 403.8h1V412.3h-1zM696 406.3h1V412.5h-1zM697 408.7h1V416.2h-1zM698 412.1h1V416.2h-1zM699 412.1h1V416.6h-1zM700 407.0h1V414.6h-1zM701 407.0h1V410.8h-1zM702 407.9h1V410.7h-1zM703 408.7h1V415.6h-1zM704 404.1h1V411.2h-1zM705 407.1h1V416.9h-1zM706 407.1h1V417.9h-1zM707 413.9h1V417.9h-1zM708 407.6h1V415.1h-1zM709 405.5h1V413.1h-1zM710 407.7h1V413.1h-1zM711 409.4h1V412.4h-1zM712 406.7h1V412.2h-1zM713 406.7h1V410.5h-1zM714 408.2h1V411.0h-1zM715 407.9h1V412.0h-1zM716 408.0h1V414.3h-1zM717 407.8h1V412.9h-1zM718 406.6h1V414.8h-1zM719 410.2h1V414.1h-1zM720 406.9h1V414.1h-1zM721 405.8h1V410.0h-1zM722 408.8h1V413.1h-1zM723 408.0h1V412.1h-1zM724 408.0h1V414.0h-1zM725 400.9h1V414.0h-1zM726 410.7h1V413.6h-1zM727 408.5h1V414.4h-1zM728 409.4h1V416.7h-1zM729 408.9h1V416.7h-1zM730 408.4h1V412.9h-1zM731 408.8h1V415.1h-1zM732 411.6h1V415.0h-1zM733 411.9h1V418.2h-1zM734 409.9h1V418.2h-1zM735 407.6h1V416.2h-1zM736 407.1h1V415.6h-1zM737 407.1h1V415.5h-1zM738 413.5h1V415.4h-1zM739 409.8h1V415.4h-1zM740 405.6h1V414.0h-1zM741 409.9h1V417.4h-1zM742 409.4h1V413.5h-1zM743 409.4h1V411.5h-1zM744 404.1h1V411.5h-1zM745 410.2h1V413.8h-1zM746 409.7h1V413.4h-1zM747 407.1h1V413.5h-1zM748 407.9h1V412.7h-1zM749 409.5h1V412.0h-1zM750 411.0h1V415.1h-1zM751 408.9h1V414.9h-1zM752 408.9h1V415.9h-1zM753 410.4h1V414.5h-1zM754 402.0h1V413.2h-1zM755 402.0h1V413.2h-1zM756 409.6h1V411.6h-1zM757 404.4h1V414.6h-1zM758 411.2h1V416.2h-1zM759 411.1h1V414.8h-1zM760 409.4h1V414.8h-1zM761 410.2h1V413.1h-1zM762 410.2h1V414.7h-1zM763 408.4h1V412.9h-1zM764 409.2h1V412.9h-1zM765 407.9h1V412.3h-1zM766 408.8h1V413.4h-1zM767 404.5h1V413.8h-1zM768 406.6h1V413.0h-1zM769 404.1h1V412.2h-1zM770 408.5h1V415.6h-1zM771 406.2h1V414.9h-1zM772 406.2h1V415.5h-1zM773 410.5h1V417.8h-1zM774 411.0h1V415.1h-1zM775 406.4h1V413.1h-1zM776 406.4h1V412.3h-1zM777 403.8h1V414.5h-1zM778 411.5h1V416.4h-1zM779 412.5h1V414.2h-1zM780 409.9h1V413.5h-1zM781 409.5h1V415.7h-1zM782 407.5h1V421.9h-1zM783 407.2h1V413.9h-1zM784 410.8h1V418.6h-1zM785 411.1h1V416.5h-1zM786 411.1h1V414.1h-1zM787 410.5h1V412.6h-1zM788 403.3h1V413.7h-1zM789 408.4h1V415.8h-1zM790 410.0h1V414.3h-1zM791 408.8h1V419.0h-1zM792 409.7h1V419.0h-1zM793 408.8h1V414.1h-1zM794 408.8h1V411.0h-1zM795 408.9h1V414.4h-1zM796 408.9h1V415.9h-1zM797 408.8h1V412.1h-1zM798 405.6h1V416.2h-1zM799 412.3h1V415.7h-1zM800 412.2h1V415.3h-1zM801 412.1h1V415.5h-1zM802 410.1h1V413.9h-1zM803 409.4h1V416.5h-1zM804 407.8h1V416.5h-1zM805 407.8h1V415.4h-1zM806 407.4h1V414.0h-1zM807 409.2h1V413.5h-1zM808 409.2h1V416.4h-1zM809 410.5h1V415.4h-1zM810 408.9h1V413.9h-1zM811 412.1h1V416.3h-1zM812 410.2h1V416.4h-1zM813 410.0h1V415.3h-1zM814 411.4h1V418.8h-1zM815 411.7h1V418.8h-1zM816 410.1h1V416.3h-1zM817 409.9h1V416.3h-1zM818 409.9h1V414.7h-1zM819 410.3h1V414.7h-1zM820 411.8h1V415.1h-1zM821 411.8h1V415.1h-1zM822 406.7h1V415.3h-1zM823 409.4h1V415.3h-1zM824 409.5h1V414.9h-1zM825 409.0h1V415.4h-1zM826 408.7h1V413.5h-1zM827 410.0h1V413.1h-1zM828 409.6h1V412.0h-1zM829 409.4h1V415.1h-1zM830 409.9h1V414.4h-1zM831 409.1h1V413.6h-1zM832 409.6h1V415.1h-1zM833 406.2h1V415.6h-1zM834 407.0h1V416.5h-1zM835 407.0h1V411.6h-1zM836 407.3h1V413.1h-1zM837 408.9h1V414.5h-1zM838 410.1h1V413.3h-1zM839 410.7h1V413.8h-1zM840 410.3h1V413.8h-1zM841 408.5h1V411.8h-1zM842 407.1h1V422.6h-1zM843 405.9h1V422.6h-1zM844 410.7h1V414.9h-1zM845 407.8h1V414.9h-1zM846 407.8h1V413.2h-1zM847 408.1h1V412.7h-1zM848 409.2h1V414.1h-1zM849 406.4h1V413.9h-1zM850 407.1h1V413.7h-1zM851 407.5h1V414.0h-1zM852 407.5h1V412.4h-1zM853 407.8h1V413.1h-1zM854 412.1h1V416.3h-1zM855 412.1h1V419.1h-1zM856 410.0h1V414.1h-1zM857 405.8h1V413.7h-1zM858 405.8h1V413.9h-1zM859 410.2h1V413.5h-1zM860 408.2h1V415.4h-1zM861 405.7h1V415.4h-1zM862 405.7h1V416.6h-1zM863 409.0h1V416.6h-1zM864 410.3h1V416.5h-1zM865 412.4h1V416.5h-1zM866 407.9h1V415.2h-1zM867 408.7h1V415.4h-1zM868 410.3h1V415.0h-1zM869 405.6h1V413.0h-1zM870 405.6h1V412.1h-1zM871 406.7h1V414.4h-1zM872 408.4h1V414.6h-1zM873 402.6h1V416.1h-1zM874 413.1h1V416.1h-1zM875 409.4h1V415.2h-1zM876 409.9h1V414.7h-1zM877 407.9h1V416.9h-1zM878 412.1h1V417.7h-1zM879 410.7h1V417.7h-1zM880 410.9h1V415.6h-1zM881 407.5h1V415.6h-1zM882 407.5h1V415.7h-1zM883 411.1h1V415.7h-1zM884 411.2h1V416.6h-1zM885 409.6h1V417.6h-1zM886 409.2h1V417.6h-1zM887 409.2h1V415.1h-1zM888 411.4h1V415.7h-1zM889 409.1h1V413.9h-1zM890 410.6h1V414.9h-1zM891 408.5h1V415.2h-1zM892 408.5h1V413.5h-1zM893 409.4h1V414.0h-1zM894 409.5h1V412.7h-1zM895 408.7h1V414.9h-1zM896 408.7h1V414.0h-1zM897 410.1h1V413.0h-1zM898 409.9h1V415.7h-1zM899 405.8h1V415.7h-1zM900 408.6h1V413.8h-1zM901 407.1h1V412.1h-1zM902 407.9h1V412.1h-1zM903 407.9h1V414.7h-1zM904 408.7h1V413.8h-1zM905 409.7h1V412.5h-1zM906 408.1h1V413.5h-1zM907 409.9h1V413.7h-1zM908 408.9h1V415.4h-1zM909 411.0h1V416.4h-1zM910 411.0h1V415.1h-1zM911 410.9h1V415.1h-1zM912 408.9h1V415.9h-1zM913 410.7h1V415.9h-1zM914 411.4h1V415.8h-1zM915 407.8h1V415.8h-1zM916 407.8h1V413.8h-1zM917 406.8h1V411.0h-1zM918 406.8h1V415.0h-1zM919 410.3h1V415.2h-1zM920 412.1h1V416.8h-1zM921 408.4h1V415.5h-1zM922 409.3h1V413.4h-1zM923 408.5h1V412.2h-1zM924 409.3h1V413.3h-1zM925 409.7h1V413.2h-1zM926 411.5h1V415.4h-1zM927 409.3h1V420.7h-1zM928 406.5h1V415.5h-1zM929 407.6h1V413.2h-1zM930 407.6h1V415.2h-1zM931 408.8h1V415.7h-1zM932 408.6h1V414.6h-1zM933 408.6h1V413.4h-1zM934 409.3h1V413.2h-1zM935 409.1h1V413.2h-1zM936 408.0h1V412.8h-1zM937 404.5h1V414.0h-1zM938 409.0h1V414.6h-1zM939 407.4h1V411.8h-1zM940 410.5h1V414.7h-1zM941 410.5h1V413.0h-1zM942 412.0h1V416.0h-1zM943 407.8h1V413.4h-1zM944 409.8h1V412.9h-1zM945 411.0h1V421.3h-1zM946 410.4h1V415.4h-1zM947 411.0h1V414.8h-1zM948 410.0h1V415.0h-1zM949 410.0h1V416.0h-1zM950 409.9h1V412.3h-1zM951 407.7h1V411.2h-1zM952 406.3h1V413.2h-1zM953 407.2h1V414.1h-1zM954 407.2h1V413.9h-1zM955 410.3h1V414.9h-1zM956 406.6h1V414.9h-1zM957 407.3h1V412.5h-1zM958 408.8h1V418.4h-1zM959 410.2h1V417.9h-1zM960 408.6h1V416.4h-1zM961 406.9h1V414.0h-1zM962 407.2h1V414.0h-1zM963 408.0h1V411.4h-1zM964 407.8h1V410.4h-1zM965 406.4h1V418.4h-1zM966 411.8h1V418.4h-1zM967 408.9h1V413.7h-1zM968 408.5h1V413.7h-1zM969 408.5h1V414.2h-1zM970 407.8h1V414.2h-1zM971 407.8h1V418.6h-1zM972 405.5h1V421.0h-1zM973 405.5h1V411.8h-1zM974 404.9h1V412.2h-1zM975 403.5h1V419.3h-1zM976 410.2h1V413.5h-1zM977 409.8h1V413.7h-1zM978 407.6h1V413.7h-1zM979 410.3h1V414.4h-1zM980 407.4h1V416.1h-1zM981 407.4h1V412.4h-1zM982 408.9h1V412.9h-1zM983 409.9h1V413.5h-1zM984 406.7h1V411.7h-1zM985 406.9h1V413.7h-1zM986 406.5h1V411.8h-1zM987 406.5h1V418.3h-1zM988 406.3h1V412.9h-1zM989 409.6h1V415.8h-1zM990 409.3h1V411.9h-1zM991 409.5h1V413.9h-1zM992 409.0h1V418.4h-1zM993 408.0h1V418.4h-1zM994 408.2h1V415.1h-1zM995 408.8h1V422.2h-1zM996 408.8h1V414.4h-1zM997 406.3h1V412.3h-1zM998 406.3h1V413.7h-1zM999 408.7h1V412.1h-1zM1000 408.7h1V419.6h-1zM1001 409.0h1V419.1h-1zM1002 409.0h1V412.7h-1zM1003 409.1h1V414.5h-1zM1004 412.2h1V414.5h-1zM1005 411.1h1V414.2h-1zM1006 408.6h1V415.5h-1zM1007 408.9h1V414.5h-1zM1008 406.0h1V411.1h-1zM1009 408.2h1V414.8h-1zM1010 410.2h1V412.8h-1zM1011 411.8h1V414.4h-1zM1012 408.7h1V413.8h-1zM1013 407.2h1V415.9h-1zM1014 408.8h1V414.2h-1zM1015 409.9h1V414.7h-1zM1016 408.4h1V412.1h-1zM1017 410.2h1V411.9h-1zM1018 410.5h1V414.1h-1zM1019 409.2h1V414.1h-1zM1020 406.3h1V410.9h-1zM1021 407.0h1V412.2h-1zM1022 404.4h1V419.7h-1zM1023 407.6h1V419.7h-1zM1024 409.0h1V412.5h-1zM1025 409.0h1V414.7h-1zM1026 408.0h1V415.2h-1zM1027 410.0h1V415.2h-1zM1028 409.7h1V412.4h-1zM1029 406.6h1V413.4h-1zM1030 406.6h1V413.9h-1zM1031 407.4h1V415.2h-1zM1032 409.8h1V415.2h-1zM1033 406.7h1V414.8h-1zM1034 410.5h1V415.0h-1zM1035 410.4h1V412.7h-1zM1036 411.7h1V415.4h-1zM1037 407.7h1V413.9h-1zM1038 407.7h1V412.0h-1zM1039 407.7h1V414.9h-1zM1040 409.5h1V413.6h-1zM1041 408.0h1V411.1h-1zM1042 408.2h1V412.6h-1zM1043 408.0h1V414.7h-1zM1044 408.0h1V415.7h-1zM1045 410.6h1V415.7h-1zM1046 408.4h1V413.5h-1zM1047 408.8h1V415.5h-1zM1048 407.6h1V416.2h-1zM1049 407.6h1V415.3h-1zM1050 404.2h1V413.3h-1zM1051 403.9h1V414.7h-1zM1052 411.5h1V414.9h-1zM1053 407.6h1V413.6h-1zM1054 408.3h1V413.6h-1zM1055 406.2h1V411.9h-1zM1056 407.5h1V413.8h-1zM1057 405.9h1V416.3h-1zM1058 406.8h1V413.9h-1zM1059 410.6h1V414.0h-1zM1060 408.5h1V413.1h-1zM1061 407.2h1V412.3h-1zM1062 411.3h1V416.4h-1zM1063 409.2h1V413.1h-1zM1064 410.3h1V416.4h-1zM1065 411.4h1V417.6h-1zM1066 411.7h1V417.6h-1zM1067 407.6h1V414.1h-1zM1068 411.6h1V414.2h-1zM1069 412.3h1V414.3h-1zM1070 409.2h1V413.8h-1zM1071 401.7h1V415.5h-1zM1072 401.7h1V414.0h-1zM1073 410.0h1V412.2h-1zM1074 407.7h1V412.3h-1zM1075 407.7h1V412.3h-1zM1076 405.6h1V411.2h-1zM1077 408.9h1V413.3h-1zM1078 408.9h1V415.5h-1zM1079 406.3h1V416.6h-1zM1080 406.1h1V413.3h-1zM1081 407.4h1V414.3h-1zM1082 411.0h1V419.0h-1zM1083 411.0h1V415.6h-1zM1084 407.0h1V415.6h-1zM1085 405.4h1V416.4h-1zM1086 405.4h1V413.6h-1zM1087 406.9h1V412.4h-1zM1088 410.9h1V413.0h-1zM1089 409.6h1V415.0h-1zM1090 409.6h1V414.6h-1zM1091 404.2h1V414.6h-1zM1092 406.7h1V416.6h-1zM1093 406.7h1V413.7h-1zM1094 409.3h1V413.7h-1zM1095 409.3h1V415.5h-1zM1096 410.2h1V415.9h-1zM1097 409.3h1V412.5h-1zM1098 408.9h1V412.7h-1zM1099 407.5h1V412.4h-1zM1100 407.5h1V413.8h-1zM1101 407.1h1V415.0h-1zM1102 410.5h1V415.0h-1zM1103 410.5h1V413.9h-1zM1104 408.9h1V417.3h-1zM1105 408.9h1V418.2h-1zM1106 404.9h1V411.8h-1zM1107 404.9h1V411.4h-1zM1108 406.4h1V416.0h-1zM1109 406.4h1V414.7h-1zM1110 410.1h1V414.7h-1zM1111 409.5h1V414.2h-1zM1112 410.4h1V416.9h-1zM1113 410.3h1V421.0h-1zM1114 408.4h1V421.0h-1zM1115 411.1h1V417.4h-1zM1116 408.8h1V413.3h-1zM1117 406.9h1V415.6h-1zM1118 406.9h1V416.0h-1zM1119 410.4h1V416.0h-1zM1120 409.1h1V412.5h-1zM1121 408.2h1V416.4h-1zM1122 410.6h1V416.4h-1zM1123 410.1h1V416.4h-1zM1124 409.2h1V416.4h-1zM1125 410.0h1V417.9h-1zM1126 408.7h1V415.1h-1zM1127 407.5h1V415.3h-1zM1128 407.8h1V415.3h-1zM1129 407.7h1V414.3h-1zM1130 403.4h1V414.1h-1zM1131 404.8h1V413.7h-1zM1132 409.3h1V415.4h-1zM1133 407.4h1V415.2h-1zM1134 407.2h1V412.0h-1zM1135 407.5h1V414.4h-1zM1136 407.5h1V411.7h-1zM1137 407.8h1V421.3h-1zM1138 405.9h1V412.5h-1zM1139 406.5h1V411.7h-1zM1140 406.5h1V411.4h-1zM1141 407.0h1V413.9h-1zM1142 408.4h1V413.9h-1zM1143 408.4h1V413.4h-1zM1144 407.8h1V413.4h-1zM1145 404.0h1V411.3h-1zM1146 410.3h1V415.4h-1zM1147 407.7h1V413.6h-1zM1148 411.0h1V415.0h-1zM1149 409.6h1V413.4h-1zM1150 409.8h1V413.4h-1zM1151 408.9h1V414.7h-1zM1152 408.7h1V413.8h-1zM1153 408.7h1V411.6h-1zM1154 408.6h1V413.6h-1zM1155 409.5h1V413.6h-1zM1156 408.6h1V411.4h-1zM1157 407.8h1V412.5h-1zM1158 404.4h1V415.5h-1zM1159 409.3h1V417.1h-1zM1160 404.8h1V415.0h-1zM1161 404.8h1V413.0h-1zM1162 407.2h1V411.0h-1zM1163 410.0h1V416.8h-1zM1164 410.6h1V416.8h-1zM1165 407.3h1V413.9h-1zM1166 410.0h1V414.1h-1zM1167 410.9h1V415.8h-1zM1168 404.2h1V415.8h-1zM1169 407.9h1V416.7h-1zM1170 407.9h1V413.3h-1zM1171 408.7h1V414.7h-1zM1172 408.3h1V416.4h-1zM1173 407.6h1V413.5h-1zM1174 406.6h1V417.7h-1zM1175 406.6h1V412.9h-1zM1176 406.5h1V412.4h-1zM1177 408.1h1V414.3h-1zM1178 406.3h1V414.2h-1zM1179 405.8h1V413.0h-1zM1180 409.4h1V415.4h-1zM1181 409.3h1V416.3h-1zM1182 407.3h1V417.1h-1zM1183 407.2h1V418.3h-1zM1184 406.3h1V418.3h-1zM1185 406.3h1V413.5h-1zM1186 404.7h1V419.5h-1zM1187 407.7h1V419.5h-1zM1188 409.5h1V416.5h-1zM1189 409.5h1V412.4h-1zM1190 407.7h1V412.0h-1zM1191 407.7h1V410.2h-1zM1192 408.9h1V415.0h-1zM1193 410.5h1V415.0h-1zM1194 408.6h1V411.5h-1zM1195 406.5h1V410.8h-1zM1196 406.5h1V412.6h-1zM1197 409.9h1V415.5h-1zM1198 408.4h1V412.3h-1zM1199 406.8h1V416.6h-1zM1200 406.8h1V416.9h-1zM1201 408.8h1V413.7h-1zM1202 408.8h1V413.7h-1zM1203 407.1h1V415.5h-1zM1204 407.8h1V418.0h-1zM1205 407.8h1V417.2h-1zM1206 409.4h1V415.4h-1zM1207 409.4h1V412.8h-1zM1208 408.7h1V416.8h-1zM1209 408.7h1V414.3h-1zM1210 410.1h1V414.6h-1zM1211 411.0h1V419.7h-1zM1212 410.5h1V414.8h-1zM1213 406.8h1V414.2h-1zM1214 406.8h1V413.3h-1zM1215 408.9h1V415.2h-1zM1216 409.9h1V414.9h-1zM1217 409.8h1V414.0h-1zM1218 409.5h1V416.5h-1zM1219 406.3h1V413.1h-1zM1220 406.3h1V416.2h-1zM1221 410.6h1V416.2h-1zM1222 406.2h1V416.0h-1zM1223 405.8h1V411.0h-1zM1224 405.8h1V413.0h-1zM1225 409.9h1V412.7h-1zM1226 406.1h1V416.2h-1zM1227 406.2h1V416.2h-1zM1228 402.1h1V413.9h-1zM1229 409.3h1V416.0h-1zM1230 407.6h1V413.9h-1zM1231 407.6h1V412.3h-1zM1232 409.4h1V417.4h-1zM1233 409.4h1V411.9h-1zM1234 409.2h1V413.6h-1zM1235 412.0h1V413.6h-1zM1236 412.1h1V415.1h-1zM1237 405.6h1V413.1h-1zM1238 405.6h1V414.4h-1zM1239 406.0h1V413.6h-1zM1240 407.6h1V412.6h-1zM1241 409.4h1V411.1h-1zM1242 408.3h1V411.8h-1zM1243 408.7h1V412.9h-1zM1244 409.2h1V413.6h-1zM1245 409.9h1V417.3h-1zM1246 410.4h1V417.1h-1zM1247 400.5h1V417.1h-1zM1248 411.5h1V414.4h-1zM1249 409.5h1V415.8h-1zM1250 409.6h1V415.8h-1zM1251 407.7h1V415.8h-1zM1252 408.7h1V415.5h-1zM1253 409.0h1V415.5h-1zM1254 409.3h1V415.1h-1zM1255 407.5h1V415.1h-1zM1256 408.1h1V412.3h-1zM1257 408.4h1V412.6h-1zM1258 407.3h1V412.6h-1zM1259 407.3h1V415.8h-1zM1260 408.2h1V415.8h-1zM1261 407.4h1V413.8h-1zM1262 407.4h1V415.3h-1zM1263 405.4h1V413.6h-1zM1264 405.6h1V413.1h-1zM1265 406.7h1V413.1h-1zM1266 406.8h1V412.9h-1zM1267 405.5h1V412.1h-1zM1268 410.3h1V412.1h-1zM1269 407.8h1V412.1h-1zM1270 410.6h1V417.6h-1zM1271 411.2h1V414.2h-1zM1272 408.3h1V413.3h-1zM1273 408.3h1V412.8h-1zM1274 408.4h1V411.6h-1zM1275 408.4h1V415.5h-1zM1276 408.3h1V411.2h-1zM1277 408.3h1V415.2h-1zM1278 405.4h1V411.7h-1zM1279 406.1h1V413.8h-1zM1280 406.1h1V413.2h-1zM1281 408.3h1V415.2h-1zM1282 409.9h1V415.2h-1zM1283 408.8h1V411.2h-1zM1284 407.8h1V414.2h-1zM1285 407.8h1V415.3h-1zM1286 408.5h1V412.6h-1zM1287 409.8h1V416.1h-1zM1288 408.6h1V416.8h-1zM1289 409.1h1V412.4h-1zM1290 408.0h1V411.1h-1zM1291 407.1h1V410.1h-1zM1292 407.1h1V419.1h-1zM1293 409.8h1V413.4h-1zM1294 409.2h1V412.6h-1zM1295 409.2h1V413.3h-1zM1296 407.9h1V414.7h-1zM1297 409.2h1V413.0h-1zM1298 409.2h1V418.1h-1zM1299 410.8h1V418.1h-1zM1300 410.8h1V414.5h-1zM1301 403.3h1V414.9h-1zM1302 403.3h1V414.1h-1zM1303 410.5h1V414.4h-1zM1304 409.5h1V412.5h-1zM1305 409.7h1V412.5h-1zM1306 408.3h1V414.4h-1zM1307 408.3h1V410.9h-1zM1308 409.9h1V412.9h-1zM1309 407.6h1V412.9h-1zM1310 409.8h1V415.4h-1zM1311 409.8h1V413.5h-1zM1312 410.9h1V414.0h-1zM1313 409.6h1V417.0h-1zM1314 410.2h1V415.8h-1zM1315 406.1h1V414.6h-1zM1316 406.1h1V413.7h-1zM1317 409.5h1V415.0h-1zM1318 410.5h1V415.0h-1zM1319 410.5h1V413.6h-1zM1320 408.0h1V415.3h-1zM1321 412.7h1V415.3h-1zM1322 407.7h1V413.9h-1zM1323 409.9h1V413.9h-1zM1324 409.9h1V413.8h-1zM1325 409.3h1V416.1h-1zM1326 407.7h1V412.5h-1zM1327 410.4h1V412.9h-1zM1328 408.1h1V415.1h-1zM1329 410.3h1V415.1h-1zM1330 411.4h1V415.5h-1zM1331 410.7h1V414.0h-1zM1332 408.2h1V414.8h-1zM1333 408.5h1V415.5h-1zM1334 408.5h1V412.3h-1zM1335 408.9h1V416.6h-1zM1336 410.5h1V413.7h-1zM1337 410.2h1V413.9h-1zM1338 406.4h1V413.9h-1zM1339 408.1h1V415.1h-1zM1340 410.3h1V413.4h-1zM1341 410.9h1V413.6h-1zM1342 404.7h1V416.5h-1zM1343 291.0h1V416.8h-1zM1344 312.0h1V523.0h-1zM1345 291.0h1V523.0h-1zM1346 291.0h1V523.0h-1zM1347 291.0h1V523.0h-1zM1348 340.0h1V523.0h-1zM1349 291.0h1V523.0h-1zM1350 291.0h1V467.0h-1zM1351 364.0h1V480.0h-1zM1352 410.2h1V419.5h-1zM1353 332.0h1V419.5h-1zM1354 407.5h1V508.0h-1zM1355 408.0h1V411.4h-1zM1356 306.0h1V414.9h-1zM1357 306.0h1V413.5h-1zM1358 405.6h1V451.0h-1zM1359 405.6h1V418.4h-1zM1360 409.1h1V418.4h-1zM1361 408.8h1V417.6h-1zM1362 410.8h1V417.6h-1zM1363 407.9h1V413.3h-1zM1364 407.9h1V413.3h-1zM1365 406.3h1V413.0h-1zM1366 410.0h1V420.8h-1zM1367 409.2h1V418.0h-1zM1368 408.6h1V415.9h-1zM1369 408.6h1V416.2h-1zM1370 408.2h1V415.8h-1zM1371 408.2h1V416.5h-1zM1372 409.4h1V412.7h-1zM1373 408.0h1V419.1h-1zM1374 410.4h1V418.0h-1zM1375 408.5h1V413.4h-1zM1376 408.5h1V416.8h-1zM1377 410.5h1V420.7h-1zM1378 409.2h1V416.1h-1zM1379 406.0h1V410.2h-1zM1380 408.8h1V412.4h-1zM1381 408.8h1V414.3h-1zM1382 409.5h1V414.3h-1zM1383 409.3h1V417.8h-1zM1384 406.3h1V413.7h-1zM1385 407.3h1V412.6h-1zM1386 408.9h1V415.9h-1zM1387 409.3h1V416.4h-1zM1388 407.3h1V416.9h-1zM1389 407.3h1V410.2h-1zM1390 409.1h1V415.9h-1zM1391 406.2h1V415.9h-1zM1392 407.7h1V417.1h-1zM1393 409.0h1V417.2h-1zM1394 408.4h1V413.0h-1zM1395 406.9h1V419.3h-1zM1396 407.4h1V419.3h-1zM1397 405.2h1V413.5h-1zM1398 405.2h1V412.1h-1zM1399 409.4h1V413.5h-1zM1400 405.5h1V418.2h-1zM1401 408.7h1V418.2h-1zM1402 410.5h1V414.8h-1zM1403 406.7h1V413.7h-1zM1404 406.5h1V413.7h-1zM1405 406.4h1V410.8h-1zM1406 405.4h1V412.3h-1zM1407 405.4h1V415.7h-1zM1408 406.8h1V423.0h-1zM1409 409.0h1V414.9h-1zM1410 404.4h1V411.9h-1zM1411 403.2h1V411.9h-1zM1412 408.6h1V413.2h-1zM1413 410.4h1V413.2h-1zM1414 410.9h1V414.9h-1zM1415 409.0h1V417.1h-1zM1416 408.3h1V417.1h-1zM1417 408.3h1V417.1h-1zM1418 410.1h1V413.0h-1zM1419 409.5h1V415.4h-1zM1420 409.5h1V413.8h-1zM1421 406.7h1V411.5h-1zM1422 408.4h1V413.0h-1zM1423 406.3h1V413.9h-1zM1424 408.9h1V413.9h-1zM1425 408.9h1V419.6h-1zM1426 407.7h1V415.0h-1zM1427 407.4h1V415.0h-1zM1428 408.4h1V416.5h-1zM1429 408.4h1V413.2h-1zM1430 411.2h1V413.4h-1zM1431 408.2h1V413.4h-1zM1432 408.9h1V415.5h-1zM1433 409.4h1V415.5h-1zM1434 409.4h1V416.6h-1zM1435 409.7h1V414.4h-1zM1436 411.2h1V414.2h-1zM1437 408.1h1V413.7h-1zM1438 411.2h1V417.3h-1zM1439 410.5h1V414.6h-1zM1440 409.5h1V413.1h-1zM1441 407.7h1V414.7h-1zM1442 408.5h1V414.1h-1zM1443 410.6h1V414.1h-1zM1444 406.5h1V417.8h-1zM1445 408.9h1V417.8h-1zM1446 408.9h1V415.0h-1zM1447 405.9h1V415.0h-1zM1448 409.5h1V411.5h-1zM1449 408.0h1V412.4h-1zM1450 406.9h1V412.4h-1zM1451 408.3h1V414.2h-1zM1452 409.3h1V414.7h-1zM1453 409.9h1V416.1h-1zM1454 410.5h1V414.9h-1zM1455 412.0h1V413.9h-1zM1456 409.4h1V413.5h-1zM1457 409.4h1V413.5h-1zM1458 409.4h1V413.9h-1zM1459 408.1h1V414.4h-1zM1460 408.5h1V413.7h-1zM1461 411.5h1V416.4h-1zM1462 411.0h1V416.4h-1zM1463 409.0h1V416.7h-1zM1464 409.0h1V415.4h-1zM1465 407.1h1V414.6h-1zM1466 407.1h1V412.4h-1zM1467 408.0h1V414.5h-1zM1468 406.2h1V412.6h-1zM1469 406.2h1V414.9h-1zM1470 409.0h1V413.1h-1zM1471 410.5h1V413.4h-1zM1472 408.9h1V414.2h-1zM1473 407.9h1V414.2h-1zM1474 409.1h1V412.3h-1zM1475 405.9h1V414.1h-1zM1476 405.9h1V413.5h-1zM1477 408.7h1V412.8h-1zM1478 408.6h1V412.7h-1zM1479 410.8h1V414.5h-1zM1480 409.8h1V413.2h-1zM1481 409.8h1V413.0h-1zM1482 410.0h1V414.5h-1zM1483 408.2h1V414.5h-1zM1484 409.2h1V412.7h-1zM1485 405.9h1V411.1h-1zM1486 408.7h1V412.9h-1zM1487 408.7h1V415.3h-1zM1488 411.7h1V415.3h-1zM1489 407.6h1V412.8h-1zM1490 408.3h1V417.2h-1zM1491 407.1h1V415.5h-1zM1492 408.4h1V415.5h-1zM1493 408.0h1V413.0h-1zM1494 409.4h1V417.0h-1zM1495 411.1h1V417.5h-1zM1496 409.4h1V417.5h-1zM1497 407.8h1V415.4h-1zM1498 408.6h1V417.1h-1zM1499 405.6h1V418.3h-1zM1500 410.0h1V414.4h-1zM1501 410.0h1V415.3h-1zM1502 409.7h1V415.5h-1zM1503 410.8h1V414.9h-1zM1504 411.0h1V419.4h-1zM1505 407.7h1V412.0h-1zM1506 409.1h1V415.1h-1zM1507 410.0h1V415.1h-1zM1508 408.1h1V413.3h-1zM1509 405.2h1V413.3h-1zM1510 409.6h1V414.3h-1zM1511 409.1h1V412.9h-1zM1512 407.7h1V414.4h-1zM1513 407.7h1V413.8h-1zM1514 410.3h1V414.3h-1zM1515 408.0h1V413.2h-1zM1516 408.8h1V415.4h-1zM1517 408.1h1V414.5h-1zM1518 409.2h1V414.3h-1zM1519 405.9h1V413.1h-1zM1520 408.8h1V415.5h-1zM1521 408.2h1V415.5h-1zM1522 403.6h1V411.6h-1zM1523 403.6h1V412.0h-1zM1524 409.5h1V413.6h-1zM1525 410.9h1V415.0h-1zM1526 408.9h1V416.3h-1zM1527 408.1h1V412.0h-1zM1528 405.8h1V414.4h-1zM1529 406.7h1V414.4h-1zM1530 406.7h1V413.5h-1zM1531 409.1h1V414.3h-1zM1532 405.5h1V410.1h-1zM1533 405.5h1V411.5h-1zM1534 408.5h1V417.5h-1zM1535 408.4h1V415.3h-1zM1536 410.7h1V415.0h-1zM1537 409.7h1V415.0h-1zM1538 410.1h1V413.8h-1zM1539 406.4h1V414.5h-1zM1540 406.4h1V413.3h-1zM1541 405.9h1V413.3h-1zM1542 408.6h1V413.3h-1zM1543 408.6h1V416.6h-1zM1544 410.8h1V415.7h-1zM1545 408.4h1V414.1h-1zM1546 408.4h1V413.6h-1zM1547 411.4h1V417.3h-1zM1548 408.2h1V415.1h-1zM1549 406.3h1V415.1h-1zM1550 408.7h1V411.7h-1zM1551 409.7h1V413.0h-1zM1552 412.0h1V414.9h-1zM1553 407.5h1V414.0h-1zM1554 408.8h1V412.9h-1zM1555 409.5h1V417.5h-1zM1556 406.5h1V417.5h-1zM1557 409.0h1V412.3h-1zM1558 408.4h1V411.1h-1zM1559 408.1h1V411.6h-1zM1560 408.3h1V413.4h-1zM1561 408.0h1V413.0h-1zM1562 408.7h1V412.8h-1zM1563 402.6h1V412.7h-1zM1564 411.5h1V415.1h-1zM1565 405.1h1V414.7h-1zM1566 404.2h1V415.0h-1zM1567 405.7h1V415.0h-1zM1568 409.6h1V415.8h-1zM1569 408.9h1V415.8h-1zM1570 408.9h1V418.7h-1zM1571 410.6h1V418.7h-1zM1572 409.0h1V413.7h-1zM1573 410.1h1V414.0h-1zM1574 402.8h1V414.5h-1zM1575 402.8h1V414.0h-1zM1576 409.4h1V414.0h-1zM1577 409.8h1V413.9h-1zM1578 406.4h1V411.7h-1zM1579 406.4h1V410.8h-1zM1580 408.2h1V415.1h-1zM1581 408.2h1V419.8h-1zM1582 405.9h1V413.2h-1zM1583 407.3h1V417.9h-1zM1584 403.6h1V417.9h-1zM1585 409.9h1V415.7h-1zM1586 412.5h1V414.4h-1zM1587 406.0h1V414.3h-1zM1588 411.3h1V415.0h-1zM1589 405.6h1V414.2h-1zM1590 408.3h1V414.7h-1zM1591 409.3h1V417.9h-1zM1592 409.2h1V415.3h-1zM1593 408.9h1V412.8h-1zM1594 409.4h1V412.9h-1zM1595 407.5h1V413.1h-1zM1596 406.8h1V411.4h-1zM1597 404.9h1V414.2h-1zM1598 409.4h1V414.2h-1zM1599 406.3h1V413.3h-1zM1600 406.3h1V413.7h-1zM1601 408.1h1V418.6h-1zM1602 412.0h1V418.6h-1zM1603 410.8h1V414.6h-1zM1604 408.1h1V411.8h-1zM1605 410.2h1V414.3h-1zM1606 408.7h1V414.3h-1zM1607 410.1h1V412.7h-1zM1608 407.4h1V412.5h-1zM1609 409.9h1V413.4h-1zM1610 410.8h1V413.4h-1zM1611 406.6h1V413.4h-1zM1612 407.2h1V412.6h-1zM1613 407.2h1V411.6h-1zM1614 407.8h1V413.3h-1zM1615 408.1h1V414.7h-1zM1616 408.7h1V415.9h-1zM1617 407.1h1V411.7h-1zM1618 405.7h1V415.0h-1zM1619 407.2h1V413.7h-1zM1620 407.2h1V414.0h-1zM1621 410.9h1V415.3h-1zM1622 409.7h1V415.0h-1zM1623 409.0h1V415.0h-1zM1624 409.6h1V414.2h-1zM1625 407.9h1V413.2h-1zM1626 407.3h1V412.8h-1zM1627 411.2h1V416.7h-1zM1628 409.9h1V419.2h-1zM1629 408.2h1V413.6h-1zM1630 408.2h1V414.4h-1zM1631 404.3h1V417.5h-1zM1632 408.8h1V411.4h-1zM1633 407.6h1V412.7h-1zM1634 406.1h1V413.4h-1zM1635 407.7h1V414.5h-1zM1636 409.9h1V415.2h-1zM1637 409.2h1V414.7h-1zM1638 409.2h1V414.7h-1zM1639 408.7h1V415.6h-1zM1640 408.7h1V414.6h-1zM1641 409.7h1V413.1h-1zM1642 406.0h1V418.7h-1zM1643 406.0h1V412.4h-1zM1644 410.4h1V413.9h-1zM1645 409.0h1V414.4h-1zM1646 405.6h1V415.7h-1zM1647 409.5h1V415.7h-1zM1648 406.0h1V414.7h-1zM1649 404.5h1V414.7h-1zM1650 409.2h1V413.7h-1zM1651 407.1h1V413.7h-1zM1652 407.1h1V415.2h-1zM1653 407.7h1V415.2h-1zM1654 408.7h1V413.3h-1zM1655 410.1h1V413.5h-1zM1656 408.7h1V413.5h-1zM1657 404.2h1V418.8h-1zM1658 404.2h1V413.1h-1zM1659 405.6h1V416.4h-1zM1660 409.1h1V412.9h-1zM1661 405.4h1V413.2h-1zM1662 406.1h1V416.3h-1zM1663 406.1h1V413.1h-1zM1664 408.2h1V411.5h-1zM1665 408.9h1V415.2h-1zM1666 410.5h1V415.2h-1zM1667 409.1h1V416.1h-1zM1668 409.7h1V416.1h-1zM1669 409.0h1V412.8h-1zM1670 407.7h1V416.6h-1zM1671 410.8h1V416.6h-1zM1672 403.8h1V413.1h-1zM1673 408.1h1V412.8h-1zM1674 407.0h1V412.8h-1zM1675 407.0h1V413.5h-1zM1676 407.0h1V412.8h-1zM1677 410.7h1V419.8h-1zM1678 408.9h1V419.8h-1zM1679 408.1h1V411.8h-1zM1680 410.0h1V414.1h-1zM1681 409.2h1V414.1h-1zM1682 407.2h1V412.7h-1zM1683 407.2h1V413.6h-1zM1684 407.2h1V413.1h-1zM1685 408.7h1V416.8h-1zM1686 409.2h1V412.1h-1zM1687 409.1h1V416.2h-1zM1688 408.8h1V412.4h-1zM1689 409.4h1V412.4h-1zM1690 408.8h1V411.9h-1zM1691 406.8h1V411.6h-1zM1692 409.1h1V411.2h-1zM1693 409.1h1V415.7h-1zM1694 408.4h1V414.8h-1zM1695 409.1h1V415.3h-1zM1696 407.0h1V415.3h-1zM1697 406.8h1V413.1h-1zM1698 405.9h1V413.1h-1zM1699 405.9h1V415.5h-1zM1700 404.4h1V415.5h-1zM1701 408.7h1V416.1h-1zM1702 412.1h1V416.9h-1zM1703 408.7h1V416.8h-1zM1704 405.7h1V416.8h-1zM1705 409.0h1V412.9h-1zM1706 411.1h1V413.8h-1zM1707 410.3h1V413.9h-1zM1708 406.8h1V413.9h-1zM1709 406.9h1V416.0h-1zM1710 408.3h1V416.0h-1zM1711 412.2h1V416.3h-1zM1712 406.9h1V413.2h-1zM1713 409.1h1V416.6h-1zM1714 410.4h1V414.2h-1zM1715 404.1h1V415.1h-1zM1716 409.3h1V414.9h-1zM1717 411.6h1V414.9h-1zM1718 407.0h1V412.9h-1zM1719 407.0h1V413.8h-1zM1720 406.4h1V415.2h-1zM1721 409.3h1V415.2h-1zM1722 408.9h1V418.4h-1zM1723 408.9h1V411.4h-1zM1724 408.2h1V413.9h-1zM1725 411.6h1V416.4h-1zM1726 411.0h1V416.4h-1zM1727 408.6h1V413.9h-1zM1728 406.1h1V413.0h-1zM1729 406.1h1V414.0h-1zM1730 409.5h1V412.6h-1zM1731 409.2h1V412.3h-1zM1732 409.1h1V413.1h-1zM1733 407.8h1V413.1h-1zM1734 404.0h1V412.2h-1zM1735 407.2h1V420.4h-1zM1736 407.2h1V414.4h-1zM1737 408.4h1V414.8h-1zM1738 408.3h1V414.3h-1zM1739 407.8h1V416.1h-1zM1740 408.9h1V415.7h-1zM1741 411.5h1V422.0h-1zM1742 410.1h1V422.0h-1zM1743 409.4h1V416.1h-1zM1744 408.5h1V413.6h-1zM1745 408.8h1V416.1h-1zM1746 409.7h1V412.0h-1zM1747 410.4h1V418.0h-1zM1748 410.4h1V417.8h-1zM1749 411.6h1V418.2h-1zM1750 409.6h1V415.7h-1z" fill="#1fb0b7"/><polyline points="95.00,397.3 96.09,356.7 97.52,451.9 98.69,450.9 100.28,350.2 101.26,384.0 102.81,441.6 104.12,407.1 105.48,387.2 106.96,442.5 107.88,442.7 109.17,392.1 110.61,401.6 111.82,433.8 113.11,411.3 114.53,382.9 116.05,434.6 117.65,409.4 119.13,396.3 120.22,414.8 121.12,430.9 122.29,416.1 123.54,398.0 124.92,415.7 126.07,427.7 127.00,411.0 128.11,395.6 129.11,410.3 130.47,420.8 131.38,416.2 132.53,399.9 134.08,412.3 135.28,424.2 136.24,411.9 137.19,403.6 138.23,410.6 139.74,421.3 141.01,408.5 142.18,406.8 143.19,412.9 144.34,415.2 145.70,412.5 146.65,408.7 147.57,407.1 148.52,416.8 150.05,412.4 151.09,405.8 152.21,412.7 153.71,414.8" fill="none" stroke="#1fb0b7" stroke-width="1.1"/><polyline points="1356.00,360.1 1357.37,406.8 1358.96,457.4 1360.06,392.1 1361.34,382.6 1362.52,438.8 1363.94,426.9 1365.13,368.2 1366.35,405.3 1367.69,449.1 1369.24,396.7 1370.69,394.0 1371.82,435.9 1372.98,428.6 1374.41,379.8 1375.88,412.2 1376.83,440.5 1378.06,413.6 1379.28,395.3 1380.43,411.5 1381.87,429.1 1383.11,401.0 1384.41,397.8 1385.78,427.5 1386.87,420.9 1388.28,398.1 1389.65,412.7 1390.56,423.8 1392.05,408.1 1393.63,407.3 1394.86,417.6 1396.23,411.5 1397.23,405.4 1398.67,409.0 1399.87,416.4 1401.14,413.6 1402.67,406.1 1404.01,415.0 1405.30,414.8 1406.39,407.9 1407.41,408.6 1408.38,413.9 1409.33,419.1 1410.92,408.8 1412.50,414.1 1413.77,412.8 1414.71,410.0" fill="none" stroke="#1fb0b7" stroke-width="1.1"/><text x="1745" y="177.6" font-size="13" fill="#e3dc2a" text-anchor="end">0 V</text><rect x="42" y="173" width="1708" height="1" fill="#f2e400"/><line x1="42" y1="173.5" x2="1722" y2="173.5" stroke="#acacb0" stroke-width="1" stroke-dasharray="5 5" stroke-dashoffset="6"/><path d="M50 160h1V187h-1zM51 136h1V197h-1zM52 146h1V192h-1zM53 165h1V184h-1zM54 163h1V186h-1zM55 168h1V182h-1zM56 162h1V188h-1zM57 170h1V180h-1zM58 165h1V183h-1zM59 153h1V187h-1zM60 170h1V178h-1zM61 164h1V183h-1zM62 168h1V178h-1zM63 170h1V176h-1zM64 163h1V178h-1zM65 171h1V176h-1zM66 168h1V175h-1zM67 172h1V176h-1zM68 170h1V175h-1zM69 172h1V175h-1zM70 171h1V176h-1zM71 172h1V174h-1zM72 171h1V175h-1zM73 172h1V175h-1zM74 171h1V174h-1zM75 172h1V175h-1zM76 172h1V174h-1zM77 171h1V175h-1zM78 172h1V174h-1zM1343 172.3h1V175.6h-1zM1344 171.9h1V175.8h-1zM1345 171.1h1V174.2h-1zM1346 173.0h1V176.5h-1zM1347 172.2h1V174.7h-1zM1348 170.0h1V175.4h-1zM1349 170.5h1V175.4h-1zM1350 171.1h1V174.5h-1zM1351 171.1h1V176.6h-1z" fill="#f0e614"/><text x="1745" y="411.6" font-size="13" fill="#25d0d8" text-anchor="end" stroke="#000" stroke-width="1.5" paint-order="stroke">0 V</text><line x1="51.5" y1="57" x2="51.5" y2="290" stroke="#f28b20" stroke-width="1" stroke-dasharray="5 5"/><line x1="54.5" y1="57" x2="54.5" y2="290" stroke="#f28b20" stroke-width="1" stroke-dasharray="5 5"/><line x1="42" y1="407.5" x2="1722" y2="407.5" stroke="#c4c4c4" stroke-width="1" stroke-dasharray="5 5" stroke-dashoffset="6"/><text x="1745" y="645.6" font-size="13" fill="#e8405c" text-anchor="end">0 V</text><rect x="42" y="640" width="1708" height="1" fill="#e21c3c"/><path d="M42 641h9v1h-9zM62 641h5v1h-5zM71 641h4v1h-4zM117 641h6v1h-6zM134 641h12v1h-12zM176 641h12v1h-12zM220 641h8v1h-8zM234 641h11v1h-11zM291 641h8v1h-8zM345 641h5v1h-5zM381 641h4v1h-4zM396 641h3v1h-3zM403 641h11v1h-11zM416 641h13v1h-13zM435 641h11v1h-11zM467 641h3v1h-3zM481 641h14v1h-14zM503 641h4v1h-4zM511 641h7v1h-7zM522 641h9v1h-9zM536 641h11v1h-11zM565 641h8v1h-8zM576 641h11v1h-11zM598 641h3v1h-3zM609 641h9v1h-9zM626 641h9v1h-9zM642 641h11v1h-11zM671 641h10v1h-10zM734 641h14v1h-14zM767 641h10v1h-10zM862 641h7v1h-7zM922 641h9v1h-9zM936 641h8v1h-8zM951 641h14v1h-14zM1023 641h13v1h-13zM1052 641h11v1h-11zM1182 641h7v1h-7zM1198 641h12v1h-12zM1212 641h9v1h-9zM1255 641h12v1h-12zM1270 641h9v1h-9zM1320 641h8v1h-8zM1387 641h13v1h-13zM1403 641h11v1h-11zM1423 641h11v1h-11zM1441 641h10v1h-10zM1463 641h14v1h-14zM1489 641h11v1h-11zM1502 641h12v1h-12zM1520 641h5v1h-5zM1527 641h9v1h-9zM1543 641h11v1h-11zM1586 641h6v1h-6zM1596 641h7v1h-7zM1619 641h11v1h-11zM1667 641h14v1h-14zM1743 641h5v1h-5z" fill="#e21c3c"/><line x1="42" y1="641.5" x2="1722" y2="641.5" stroke="#c4c4c4" stroke-width="1" stroke-dasharray="5 5" stroke-dashoffset="6"/><text x="1745" y="879.6" font-size="13" fill="#8cc83a" text-anchor="end">0 V</text><rect x="42" y="875" width="1708" height="1" fill="#6cc21e"/><line x1="42" y1="875.5" x2="1722" y2="875.5" stroke="#acacb0" stroke-width="1" stroke-dasharray="5 5" stroke-dashoffset="6"/><path d="M1345 876h4v1h-4z" fill="#6cc21e"/><path d="M50 636h1V645h-1zM51 634h1V647h-1zM52 635h1V646h-1zM53 637h1V642h-1zM54 638h1V643h-1zM55 639h1V642h-1zM56 637h1V641h-1zM57 639h1V642h-1zM58 639h1V642h-1z" fill="#e21c3c"/><path d="M50 872h1V879h-1zM51 871h1V878h-1zM52 873h1V877h-1zM53 872h1V878h-1zM54 874h1V877h-1zM55 873h1V876h-1zM56 874h1V877h-1zM57 875h1V877h-1z" fill="#6cc21e"/><rect x="3" y="173" width="4" height="1" fill="#f2e400"/><rect x="3" y="640" width="4" height="1" fill="#e21c3c"/><rect x="3" y="875" width="4" height="1" fill="#6cc21e"/><path d="M9 160.5H30L42 173L30 185.5H9Q6.5 185.5 6.5 183.0V163.0Q6.5 160.5 9 160.5Z" fill="#1e1b08" stroke="#e6de22" stroke-width="1.5"/><text x="15" y="176" font-size="11.5" fill="#e6de22">C</text><text x="26.3" y="176" font-size="11.5" fill="#e6de22" textLength="5" lengthAdjust="spacingAndGlyphs">1</text><path d="M9 394.5H30L42 407L30 419.5H9Q6.5 419.5 6.5 417.0V397.0Q6.5 394.5 9 394.5Z" fill="#22ccd4" stroke="none" stroke-width="0"/><text x="15" y="410" font-size="11.5" fill="#0a1a1a">C</text><text x="26.3" y="410" font-size="11.5" fill="#0a1a1a" textLength="5" lengthAdjust="spacingAndGlyphs">2</text><path d="M9 628.5H30L42 641L30 653.5H9Q6.5 653.5 6.5 651.0V631.0Q6.5 628.5 9 628.5Z" fill="#1a0a0e" stroke="#e23a55" stroke-width="1.5"/><text x="15" y="644" font-size="11.5" fill="#f0f0f0">C</text><text x="26.3" y="644" font-size="11.5" fill="#f0f0f0" textLength="5" lengthAdjust="spacingAndGlyphs">3</text><path d="M9 862.5H30L42 875L30 887.5H9Q6.5 887.5 6.5 885.0V865.0Q6.5 862.5 9 862.5Z" fill="#151a0c" stroke="#80c030" stroke-width="1.5"/><text x="15" y="878" font-size="11.5" fill="#8cc83a">C</text><text x="26.3" y="878" font-size="11.5" fill="#8cc83a" textLength="5" lengthAdjust="spacingAndGlyphs">4</text><text x="55" y="178.2" font-size="18" fill="#ece43c" textLength="92" lengthAdjust="spacingAndGlyphs" stroke="#000" stroke-width="1.3" paint-order="stroke">U_BPP-HFS</text><text x="54" y="412" font-size="18" fill="#25dde4" textLength="88.4" lengthAdjust="spacingAndGlyphs" stroke="#000" stroke-width="1.3" paint-order="stroke">U_BPP-LFS</text><text x="54.2" y="645.8" font-size="18" fill="#e84a64" textLength="78.6" lengthAdjust="spacingAndGlyphs" stroke="#000" stroke-width="1.3" paint-order="stroke">U_LP left</text><text x="54.2" y="880.6" font-size="18" fill="#8cce3c" textLength="91" lengthAdjust="spacingAndGlyphs" stroke="#000" stroke-width="1.3" paint-order="stroke">U_LP right</text><text x="1745" y="107.6" font-size="13" fill="#e3dc2a" text-anchor="end" stroke="#000" stroke-width="2" paint-order="stroke">1.5 V</text><text x="1745" y="131.6" font-size="13" fill="#e3dc2a" text-anchor="end" stroke="#000" stroke-width="2" paint-order="stroke">1 V</text><text x="1745" y="154.6" font-size="13" fill="#e3dc2a" text-anchor="end" stroke="#000" stroke-width="2" paint-order="stroke">500 mV</text><text x="1745" y="200.6" font-size="13" fill="#e3dc2a" text-anchor="end" stroke="#000" stroke-width="2" paint-order="stroke">-500 mV</text><text x="1745" y="223.6" font-size="13" fill="#e3dc2a" text-anchor="end" stroke="#000" stroke-width="2" paint-order="stroke">-1 V</text><text x="1745" y="247.6" font-size="13" fill="#e3dc2a" text-anchor="end" stroke="#000" stroke-width="2" paint-order="stroke">-1.5 V</text><text x="1745" y="270.6" font-size="13" fill="#e3dc2a" text-anchor="end" stroke="#000" stroke-width="2" paint-order="stroke">-2 V</text><text x="1745" y="318.6" font-size="13" fill="#22c4cc" text-anchor="end" stroke="#000" stroke-width="2" paint-order="stroke">200 mV</text><text x="1745" y="341.6" font-size="13" fill="#22c4cc" text-anchor="end" stroke="#000" stroke-width="2" paint-order="stroke">150 mV</text><text x="1745" y="365.6" font-size="13" fill="#22c4cc" text-anchor="end" stroke="#000" stroke-width="2" paint-order="stroke">100 mV</text><text x="1745" y="388.6" font-size="13" fill="#22c4cc" text-anchor="end" stroke="#000" stroke-width="2" paint-order="stroke">50 mV</text><text x="1745" y="434.6" font-size="13" fill="#22c4cc" text-anchor="end" stroke="#000" stroke-width="2" paint-order="stroke">-50 mV</text><text x="1745" y="457.6" font-size="13" fill="#22c4cc" text-anchor="end" stroke="#000" stroke-width="2" paint-order="stroke">-100 mV</text><text x="1745" y="481.6" font-size="13" fill="#22c4cc" text-anchor="end" stroke="#000" stroke-width="2" paint-order="stroke">-150 mV</text><text x="1745" y="504.6" font-size="13" fill="#22c4cc" text-anchor="end" stroke="#000" stroke-width="2" paint-order="stroke">-200 mV</text><text x="1745" y="552.6" font-size="13" fill="#e8405c" text-anchor="end" stroke="#000" stroke-width="2" paint-order="stroke">2 V</text><text x="1745" y="575.6" font-size="13" fill="#e8405c" text-anchor="end" stroke="#000" stroke-width="2" paint-order="stroke">1.5 V</text><text x="1745" y="599.6" font-size="13" fill="#e8405c" text-anchor="end" stroke="#000" stroke-width="2" paint-order="stroke">1 V</text><text x="1745" y="622.6" font-size="13" fill="#e8405c" text-anchor="end" stroke="#000" stroke-width="2" paint-order="stroke">500 mV</text><text x="1745" y="668.6" font-size="13" fill="#e8405c" text-anchor="end" stroke="#000" stroke-width="2" paint-order="stroke">-500 mV</text><text x="1745" y="691.6" font-size="13" fill="#e8405c" text-anchor="end" stroke="#000" stroke-width="2" paint-order="stroke">-1 V</text><text x="1745" y="715.6" font-size="13" fill="#e8405c" text-anchor="end" stroke="#000" stroke-width="2" paint-order="stroke">-1.5 V</text><text x="1745" y="738.6" font-size="13" fill="#e8405c" text-anchor="end" stroke="#000" stroke-width="2" paint-order="stroke">-2 V</text><text x="1745" y="786.6" font-size="13" fill="#8cc83a" text-anchor="end" stroke="#000" stroke-width="2" paint-order="stroke">2 V</text><text x="1745" y="809.6" font-size="13" fill="#8cc83a" text-anchor="end" stroke="#000" stroke-width="2" paint-order="stroke">1.5 V</text><text x="1745" y="833.6" font-size="13" fill="#8cc83a" text-anchor="end" stroke="#000" stroke-width="2" paint-order="stroke">1 V</text><text x="1745" y="856.6" font-size="13" fill="#8cc83a" text-anchor="end" stroke="#000" stroke-width="2" paint-order="stroke">500 mV</text><text x="1745" y="902.6" font-size="13" fill="#8cc83a" text-anchor="end" stroke="#000" stroke-width="2" paint-order="stroke">-500 mV</text><text x="1745" y="925.6" font-size="13" fill="#8cc83a" text-anchor="end" stroke="#000" stroke-width="2" paint-order="stroke">-1 V</text><text x="1745" y="949.6" font-size="13" fill="#8cc83a" text-anchor="end" stroke="#000" stroke-width="2" paint-order="stroke">-1.5 V</text><text x="1745" y="972.6" font-size="13" fill="#8cc83a" text-anchor="end" stroke="#000" stroke-width="2" paint-order="stroke">-2 V</text><path d="M1785.8 4H1803.7L1801.2 9.1H1785.8Z M1790.2 9H1796.2V26H1790.2Z M1815 4H1820V26H1815Z M1822 19.6L1824.2 16.4L1830.2 26H1824.6Z M1831.3 9.4L1836 4.4V9.3H1838.5V13.4H1836V26H1831.3Z" fill="#ffffff"/><path d="M1815 26h5.6l10.4-17h-5.4z" fill="#1dbfe0"/><text x="1797.2" y="26" font-size="31" fill="#ffffff" font-weight="bold" textLength="17.2" lengthAdjust="spacingAndGlyphs">e</text><text x="1839.2" y="26" font-size="31" fill="#ffffff" font-weight="bold" textLength="64.6" lengthAdjust="spacingAndGlyphs">ronix</text><rect x="1769" y="29" width="152" height="1" fill="#6b625a"/><rect x="1769" y="29" width="1" height="966" fill="#5e5a56"/><rect x="1769" y="994" width="152" height="1" fill="#6b625a"/><text x="1844.3" y="43.8" font-size="14.5" fill="#eeeeee" text-anchor="middle" font-weight="bold" textLength="76.6" lengthAdjust="spacingAndGlyphs">Add New...</text><defs><linearGradient id="btn" x1="0" y1="0" x2="0" y2="1"><stop offset="0" stop-color="#46484b"/><stop offset="0.2" stop-color="#333333"/><stop offset="0.8" stop-color="#2c2c2c"/><stop offset="1" stop-color="#191919"/></linearGradient><linearGradient id="btn2" x1="0" y1="0" x2="0" y2="1"><stop offset="0" stop-color="#46484b"/><stop offset="0.1" stop-color="#333333"/><stop offset="0.85" stop-color="#2a2a2a"/><stop offset="1" stop-color="#191919"/></linearGradient></defs><rect x="1777.5" y="54.5" width="62" height="36" rx="6" fill="url(#btn)" stroke="#6e6259" stroke-width="1"/><rect x="1849.5" y="54.5" width="62" height="36" rx="6" fill="url(#btn)" stroke="#6e6259" stroke-width="1"/><rect x="1777.5" y="100.5" width="62" height="36" rx="6" fill="url(#btn)" stroke="#6e6259" stroke-width="1"/><rect x="1849.5" y="100.5" width="62" height="36" rx="6" fill="url(#btn)" stroke="#6e6259" stroke-width="1"/><rect x="1777.5" y="146.5" width="62" height="36" rx="6" fill="url(#btn)" stroke="#6e6259" stroke-width="1"/><rect x="1849.5" y="146.5" width="62" height="36" rx="6" fill="url(#btn)" stroke="#6e6259" stroke-width="1"/><rect x="1777.5" y="196.5" width="62" height="36" rx="6" fill="url(#btn)" stroke="#6e6259" stroke-width="1"/><rect x="1849.5" y="196.5" width="62" height="36" rx="6" fill="url(#btn)" stroke="#6e6259" stroke-width="1"/><text x="1783.6" y="77" font-size="15" fill="#e8e8e8" textLength="50.7" lengthAdjust="spacingAndGlyphs">Cursors</text><text x="1855.5" y="77" font-size="15" fill="#e8e8e8" textLength="48.8" lengthAdjust="spacingAndGlyphs">Callout</text><text x="1779.3" y="122.9" font-size="15" fill="#e8e8e8" textLength="58.6" lengthAdjust="spacingAndGlyphs">Measure</text><text x="1857.3" y="122.9" font-size="15" fill="#e8e8e8" textLength="45.9" lengthAdjust="spacingAndGlyphs">Search</text><text x="1784.6" y="160.8" font-size="15" fill="#e8e8e8" textLength="47.6" lengthAdjust="spacingAndGlyphs">Results</text><text x="1790.8" y="177" font-size="15" fill="#e8e8e8" textLength="35.9" lengthAdjust="spacingAndGlyphs">Table</text><text x="1866.6" y="168.5" font-size="15" fill="#e8e8e8" textLength="27.4" lengthAdjust="spacingAndGlyphs">Plot</text><text x="1855.6" y="219" font-size="15" fill="#e8e8e8" textLength="50" lengthAdjust="spacingAndGlyphs">More...</text><rect x="1773" y="189" width="144" height="1" fill="#555555"/><rect x="1773" y="241" width="144" height="1" fill="#555555"/><path d="M1796.5 202h2.5v2h-2.5zM1796.5 221h2.5v2h-2.5zM1802 202h3.6v2h-3.6zM1802 221h3.6v2h-3.6zM1809.3 202h3.7v2h-3.7zM1809.3 221h3.7v2h-3.7zM1816.8 202h2.9v2h-2.9zM1816.8 221h2.9v2h-2.9zM1796.5 202h2.3v2.5h-2.3zM1817.4 202h2.3v2.5h-2.3zM1796.5 207.8h2.3v3.2h-2.3zM1817.4 207.8h2.3v3.2h-2.3zM1796.5 214h2.3v3.5h-2.3zM1817.4 214h2.3v3.5h-2.3zM1796.5 220.6h2.3v2.4h-2.3zM1817.4 220.6h2.3v2.4h-2.3z" fill="#c8c8c8"/><circle cx="1810" cy="210.6" r="4.4" fill="none" stroke="#c8c8c8" stroke-width="1.9"/><line x1="1806.6" y1="214" x2="1801.8" y2="217.6" stroke="#c8c8c8" stroke-width="2.6" stroke-linecap="round"/><path d="M1814.3 217l8 5.6l-3.2 0.7l2.4 3.2l-1.8 0.9l-2.3-3.3l-2.2 2.2z" fill="#c8c8c8"/><path d="M1773 255Q1773 252 1776 252H1914Q1917 252 1917 255V271H1773Z" fill="#5a5a5a"/><rect x="1773" y="271" width="144" height="1" fill="#a8a8a8"/><path d="M1773 272H1917V307.5Q1917 312 1912.5 312H1777.5Q1773 312 1773 307.5Z" fill="#cbcbcb"/><text x="1778.4" y="265.7" font-size="14.3" fill="#e2e2e2" textLength="47.4" lengthAdjust="spacingAndGlyphs">Meas 1</text><rect x="1889.5" y="256.5" width="21.5" height="11.5" rx="5.75" fill="#f2e82c" stroke="#3a3a10" stroke-width="0.8"/><text x="1900.2" y="266" font-size="9.5" fill="#111111" text-anchor="middle">1</text><text x="1780.4" y="288.5" font-size="14.4" fill="#111111" textLength="90.1" lengthAdjust="spacingAndGlyphs">Peak-to-Peak</text><text x="1780.4" y="308.5" font-size="14.4" fill="#111111" textLength="71.5" lengthAdjust="spacingAndGlyphs">µ': 1.319 V</text><path d="M1773 320Q1773 317 1776 317H1914Q1917 317 1917 320V336H1773Z" fill="#000000"/><rect x="1773" y="336" width="144" height="1" fill="#a8a8a8"/><path d="M1773 337H1917V372.5Q1917 377 1912.5 377H1777.5Q1773 377 1773 372.5Z" fill="#cbcbcb"/><text x="1778.4" y="330.7" font-size="14.3" fill="#f2e82c" textLength="47.4" lengthAdjust="spacingAndGlyphs">Meas 2</text><rect x="1889.5" y="321.5" width="21.5" height="11.5" rx="5.75" fill="#f2e82c" stroke="#3a3a10" stroke-width="0.8"/><text x="1900.2" y="331" font-size="9.5" fill="#111111" text-anchor="middle">1</text><text x="1780.4" y="353.5" font-size="14.4" fill="#111111" textLength="70.5" lengthAdjust="spacingAndGlyphs">Frequency</text><text x="1780.4" y="373.5" font-size="14.4" fill="#111111" textLength="89.5" lengthAdjust="spacingAndGlyphs">µ': 514.7 kHz</text><path d="M3 1002Q3 999 6 999H90Q93 999 93 1002V1018H3Z" fill="#4a4524"/><rect x="3" y="1018" width="90" height="1.5" fill="#a9a9a9"/><path d="M3 1019.5H93V1073.5Q93 1077.5 89 1077.5H7Q3 1077.5 3 1073.5Z" fill="#cbcbcb"/><text x="8.7" y="1012.9" font-size="14.5" fill="#ebe42a" textLength="27.9" lengthAdjust="spacingAndGlyphs">Ch 1</text><text x="10.9" y="1035.8" font-size="14.5" fill="#111111" textLength="76" lengthAdjust="spacingAndGlyphs">500 mV/div</text><text x="11" y="1055.6" font-size="14.5" fill="#111111" textLength="36.6" lengthAdjust="spacingAndGlyphs">1 MΩ</text><text x="11" y="1073.7" font-size="14.5" fill="#111111" textLength="43.3" lengthAdjust="spacingAndGlyphs">1 MHz</text><text x="76.6" y="1067.6" font-size="9" fill="#111111" font-weight="bold">B</text><text x="82.2" y="1071" font-size="9" fill="#111111" font-weight="bold">w</text><path d="M98 1002Q98 999 101 999H185Q188 999 188 1002V1018H98Z" fill="#22d0d6"/><rect x="98" y="1018" width="90" height="1.5" fill="#a9a9a9"/><path d="M98 1019.5H188V1073.5Q188 1077.5 184 1077.5H102Q98 1077.5 98 1073.5Z" fill="#cbcbcb"/><text x="103.7" y="1012.9" font-size="14.5" fill="#0c1a1c" textLength="27.9" lengthAdjust="spacingAndGlyphs">Ch 2</text><text x="105.9" y="1035.8" font-size="14.5" fill="#111111" textLength="68.5" lengthAdjust="spacingAndGlyphs">50 mV/div</text><text x="106" y="1055.6" font-size="14.5" fill="#111111" textLength="36.6" lengthAdjust="spacingAndGlyphs">1 MΩ</text><text x="106" y="1073.7" font-size="14.5" fill="#111111" textLength="43.3" lengthAdjust="spacingAndGlyphs">1 MHz</text><text x="171.6" y="1067.6" font-size="9" fill="#111111" font-weight="bold">B</text><text x="177.2" y="1071" font-size="9" fill="#111111" font-weight="bold">w</text><path d="M193 1002Q193 999 196 999H280Q283 999 283 1002V1018H193Z" fill="#4a2529"/><rect x="193" y="1018" width="90" height="1.5" fill="#a9a9a9"/><path d="M193 1019.5H283V1073.5Q283 1077.5 279 1077.5H197Q193 1077.5 193 1073.5Z" fill="#cbcbcb"/><text x="198.7" y="1012.9" font-size="14.5" fill="#f2f2f2" textLength="27.9" lengthAdjust="spacingAndGlyphs">Ch 3</text><text x="200.9" y="1035.8" font-size="14.5" fill="#111111" textLength="76" lengthAdjust="spacingAndGlyphs">500 mV/div</text><text x="201" y="1055.6" font-size="14.5" fill="#111111" textLength="36.6" lengthAdjust="spacingAndGlyphs">1 MΩ</text><text x="201" y="1073.7" font-size="14.5" fill="#111111" textLength="43.3" lengthAdjust="spacingAndGlyphs">1 MHz</text><text x="266.6" y="1067.6" font-size="9" fill="#111111" font-weight="bold">B</text><text x="272.2" y="1071" font-size="9" fill="#111111" font-weight="bold">w</text><path d="M288 1002Q288 999 291 999H375Q378 999 378 1002V1018H288Z" fill="#37421f"/><rect x="288" y="1018" width="90" height="1.5" fill="#a9a9a9"/><path d="M288 1019.5H378V1073.5Q378 1077.5 374 1077.5H292Q288 1077.5 288 1073.5Z" fill="#cbcbcb"/><text x="293.7" y="1012.9" font-size="14.5" fill="#98d040" textLength="27.9" lengthAdjust="spacingAndGlyphs">Ch 4</text><text x="295.9" y="1035.8" font-size="14.5" fill="#111111" textLength="76" lengthAdjust="spacingAndGlyphs">500 mV/div</text><text x="296" y="1055.6" font-size="14.5" fill="#111111" textLength="36.6" lengthAdjust="spacingAndGlyphs">1 MΩ</text><text x="296" y="1073.7" font-size="14.5" fill="#111111" textLength="43.3" lengthAdjust="spacingAndGlyphs">1 MHz</text><text x="361.6" y="1067.6" font-size="9" fill="#111111" font-weight="bold">B</text><text x="367.2" y="1071" font-size="9" fill="#111111" font-weight="bold">w</text><rect x="1127.5" y="998.5" width="39" height="78" rx="6" fill="url(#btn2)" stroke="#6e6259" stroke-width="1"/><rect x="1131" y="1006" width="32" height="2" fill="#f28b20"/><text x="1147" y="1030.6" font-size="15" fill="#e8e8e8" text-anchor="middle" textLength="28.8" lengthAdjust="spacingAndGlyphs">Add</text><text x="1147" y="1046.7" font-size="15" fill="#e8e8e8" text-anchor="middle" textLength="30.7" lengthAdjust="spacingAndGlyphs">New</text><text x="1147" y="1062.9" font-size="15" fill="#e8e8e8" text-anchor="middle" textLength="36" lengthAdjust="spacingAndGlyphs">Math</text><rect x="1172.5" y="998.5" width="39" height="78" rx="6" fill="url(#btn2)" stroke="#6e6259" stroke-width="1"/><rect x="1176" y="1006" width="32" height="2" fill="#c8c8d0"/><text x="1192" y="1030.6" font-size="15" fill="#e8e8e8" text-anchor="middle" textLength="28.8" lengthAdjust="spacingAndGlyphs">Add</text><text x="1192" y="1046.7" font-size="15" fill="#e8e8e8" text-anchor="middle" textLength="30.7" lengthAdjust="spacingAndGlyphs">New</text><text x="1192" y="1062.9" font-size="15" fill="#e8e8e8" text-anchor="middle" textLength="22.5" lengthAdjust="spacingAndGlyphs">Ref</text><rect x="1217.5" y="998.5" width="39" height="78" rx="6" fill="url(#btn2)" stroke="#6e6259" stroke-width="1"/><rect x="1221" y="1006" width="32" height="2" fill="#c070f0"/><text x="1237" y="1030.6" font-size="15" fill="#e8e8e8" text-anchor="middle" textLength="28.8" lengthAdjust="spacingAndGlyphs">Add</text><text x="1237" y="1046.7" font-size="15" fill="#e8e8e8" text-anchor="middle" textLength="30.7" lengthAdjust="spacingAndGlyphs">New</text><text x="1237" y="1062.9" font-size="15" fill="#e8e8e8" text-anchor="middle" textLength="23.2" lengthAdjust="spacingAndGlyphs">Bus</text><rect x="1267" y="998" width="1" height="80" fill="#6b625a"/><rect x="1116" y="998" width="1" height="80" fill="#6b625a"/><path d="M1279 1003Q1279 999.5 1282.5 999.5H1473.5Q1477 999.5 1477 1003V1018.5H1279Z" fill="#575757" stroke="#1e1e1e" stroke-width="0"/><rect x="1279" y="1018.5" width="198" height="1.5" fill="#a9a9a9"/><path d="M1279 1020H1477V1073Q1477 1077 1473 1077H1283Q1279 1077 1279 1073Z" fill="#cbcbcb"/><text x="1285" y="1014" font-size="14.5" fill="#e2e2e2" textLength="72.9" lengthAdjust="spacingAndGlyphs">Horizontal</text><text x="1285" y="1035.4" font-size="14.5" fill="#111" textLength="68.7" lengthAdjust="spacingAndGlyphs">200 µs/div</text><text x="1390.8" y="1035.4" font-size="14.5" fill="#111" textLength="31.2" lengthAdjust="spacingAndGlyphs">2 ms</text><text x="1285" y="1054.6" font-size="14.5" fill="#111" textLength="81.5" lengthAdjust="spacingAndGlyphs">SR: 2.5 MS/s</text><text x="1390.8" y="1054.6" font-size="14.5" fill="#111" textLength="63.6" lengthAdjust="spacingAndGlyphs">400 ns/pt</text><text x="1285" y="1073.3" font-size="14.5" fill="#111" textLength="66" lengthAdjust="spacingAndGlyphs">RL: 5 kpts</text><path d="M1391 1062h9v8h-2.5l-2 3l-2-3h-2.5z" fill="#111" stroke="#f28b20" stroke-width="1.2"/><text x="1395.5" y="1069.5" font-size="7" fill="#f28b20" text-anchor="middle" font-weight="bold">T</text><text x="1405.4" y="1073.3" font-size="14.5" fill="#111" textLength="21.6" lengthAdjust="spacingAndGlyphs">2%</text><path d="M1484 1003Q1484 999.5 1487.5 999.5H1638.5Q1642 999.5 1642 1003V1018.5H1484Z" fill="#575757" stroke="#1e1e1e" stroke-width="0"/><rect x="1484" y="1018.5" width="158" height="1.5" fill="#a9a9a9"/><path d="M1484 1020H1642V1073Q1642 1077 1638 1077H1488Q1484 1077 1484 1073Z" fill="#cbcbcb"/><text x="1490" y="1014" font-size="14.5" fill="#e2e2e2" textLength="47.4" lengthAdjust="spacingAndGlyphs">Trigger</text><text x="1490.3" y="1035.8" font-size="14.5" fill="#111" textLength="26.4" lengthAdjust="spacingAndGlyphs">Aux</text><path d="M1551 1036.5h3.5l7-9.5h5" fill="none" stroke="#4a4a8a" stroke-width="1.2"/><text x="1578" y="1035.8" font-size="14.5" fill="#111" textLength="20.7" lengthAdjust="spacingAndGlyphs">1 V</text><path d="M1649 1003Q1649 999.5 1652.5 999.5H1793.5Q1797 999.5 1797 1003V1018.5H1649Z" fill="#575757" stroke="#1e1e1e" stroke-width="0"/><rect x="1649" y="1018.5" width="148" height="1.5" fill="#a9a9a9"/><path d="M1649 1020H1797V1073Q1797 1077 1793 1077H1653Q1649 1077 1649 1073Z" fill="#cbcbcb"/><text x="1655" y="1014" font-size="14.5" fill="#e2e2e2" textLength="76.8" lengthAdjust="spacingAndGlyphs">Acquisition</text><text x="1654.6" y="1035.8" font-size="14.5" fill="#111" textLength="56.8" lengthAdjust="spacingAndGlyphs">Manual,</text><text x="1736.6" y="1035.8" font-size="14.5" fill="#111" textLength="54.4" lengthAdjust="spacingAndGlyphs">Analyze</text><text x="1654.6" y="1055.3" font-size="14.5" fill="#111" textLength="114.6" lengthAdjust="spacingAndGlyphs">High Res: 16 bits</text><text x="1654.6" y="1073.6" font-size="14.5" fill="#111" textLength="74.7" lengthAdjust="spacingAndGlyphs">Single: 1 /1</text><rect x="1810" y="998" width="1" height="80" fill="#6b625a"/><rect x="1918" y="995" width="2" height="85" fill="#c4c4c4"/><rect x="1821.5" y="998.5" width="89" height="35" rx="6" fill="#fd1d24" stroke="#7a7a7a" stroke-width="1"/><text x="1841" y="1019.3" font-size="13.5" fill="#ffffff" font-weight="bold" textLength="50.4" lengthAdjust="spacingAndGlyphs">Stopped</text><rect x="1821.5" y="1042" width="89" height="36" rx="4" fill="#cbcbcb" stroke="#555" stroke-width="0.8"/><text x="1824.2" y="1056.9" font-size="14.5" fill="#111" textLength="83.8" lengthAdjust="spacingAndGlyphs">10 Nov 2025</text><text x="1826.5" y="1074.3" font-size="14.5" fill="#111" textLength="78.5" lengthAdjust="spacingAndGlyphs">3:50:50 AM</text></svg></body></html>
